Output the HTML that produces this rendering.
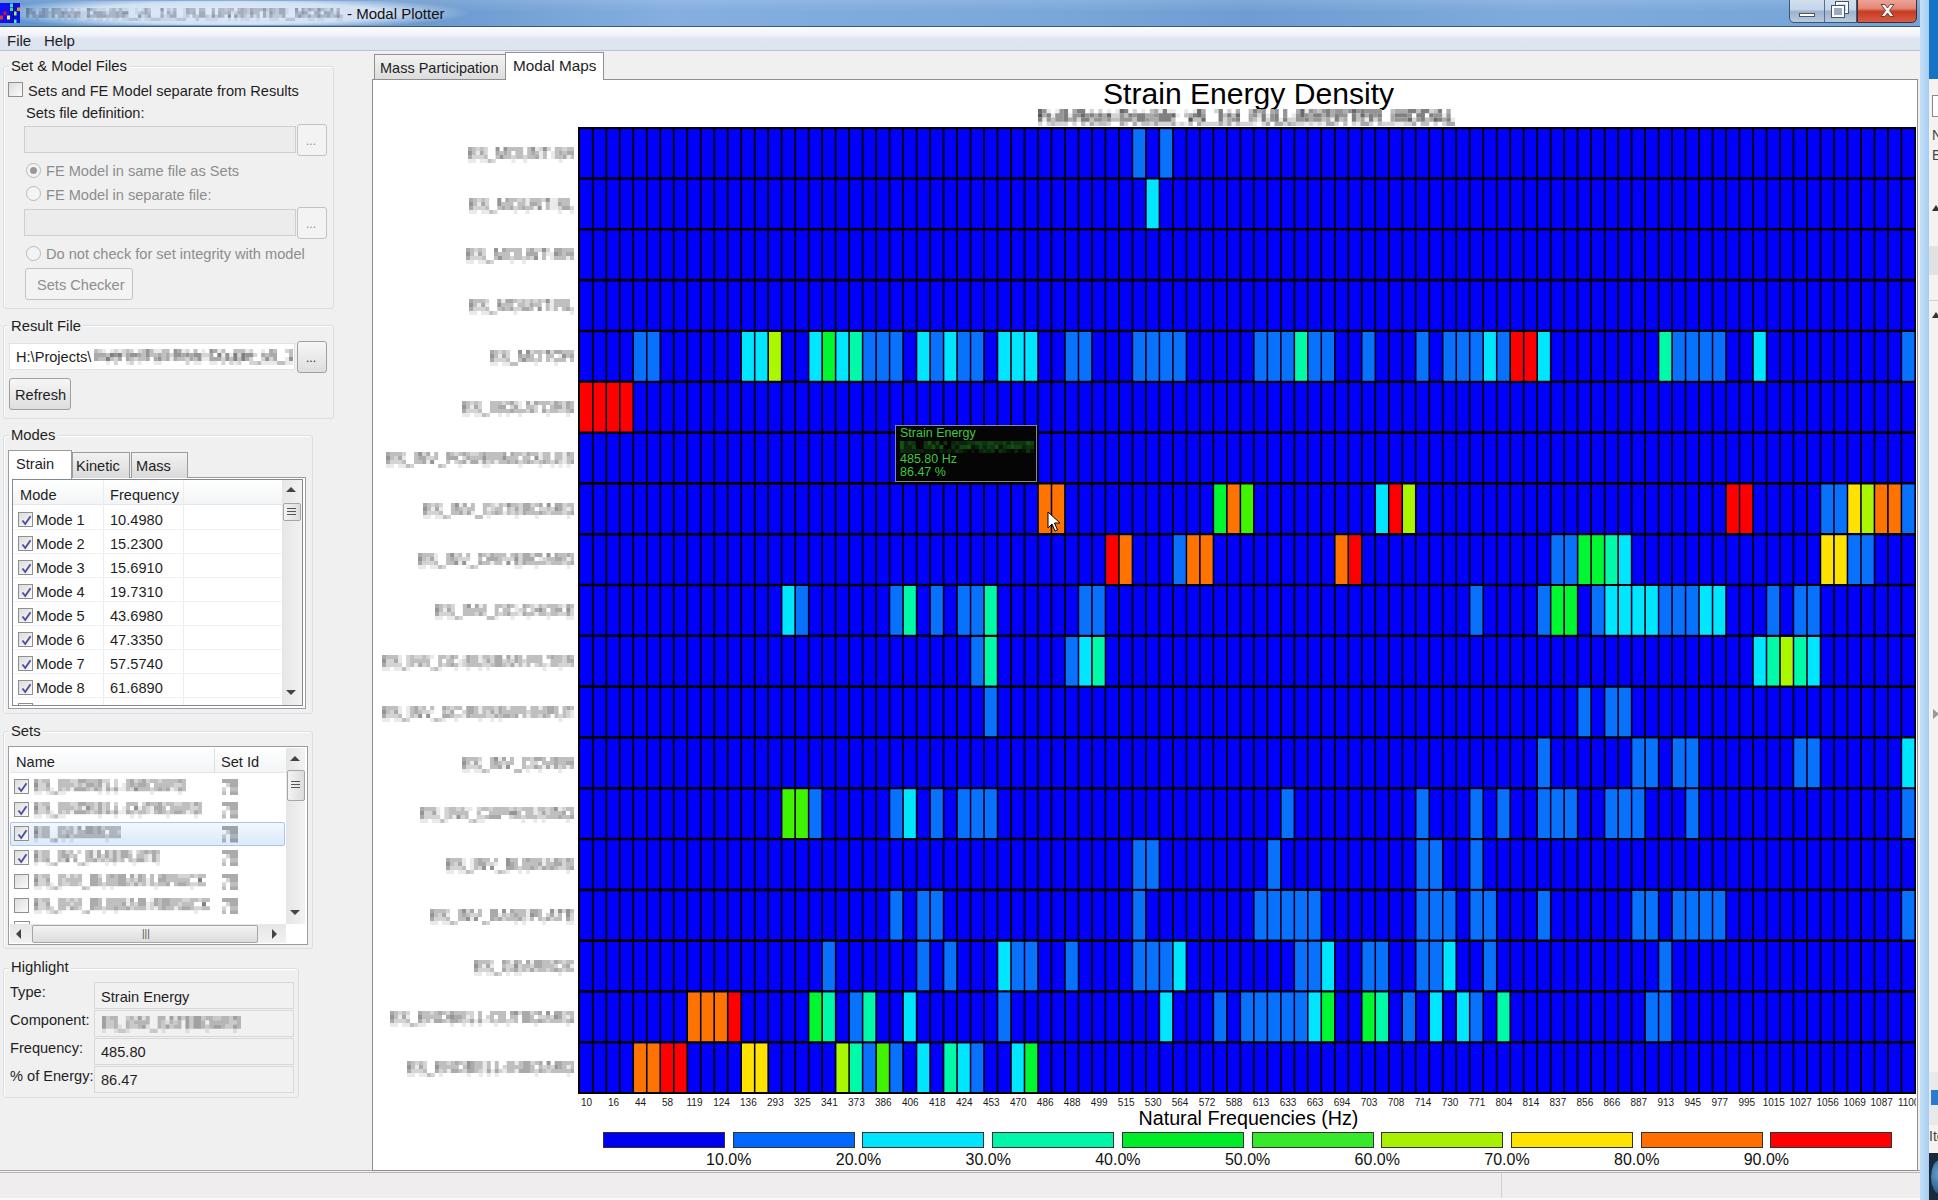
<!DOCTYPE html>
<html><head><meta charset="utf-8"><title>Modal Plotter</title><style>
*{margin:0;padding:0;box-sizing:border-box}
html,body{width:1938px;height:1200px;overflow:hidden;background:#f0f0f0;font-family:"Liberation Sans",sans-serif;color:#1e1e1e}
.a{position:absolute;white-space:nowrap}
.t15{font-size:14.6px;line-height:16px}
.gb{position:absolute;border:1px solid #d5dfe5;border-radius:3px;box-shadow:inset 1px 1px 0 #fff}
.gl{position:absolute;font-size:14.8px;line-height:16px;background:#f0f0f0;padding:0 2px}
.cb{width:15px;height:15px;border:1px solid #8f8f8f;background:linear-gradient(135deg,#dcdcdc,#fbfbfb)}
.ck::after{content:"";position:absolute;left:3px;top:1px;width:5px;height:9px;border:solid #4a4f9a;border-width:0 2px 2px 0;transform:rotate(40deg)}
.rb{width:15px;height:15px;border:1px solid #b9b9b9;border-radius:50%;background:#f4f4f4}
.tx{border:1px solid #cfcfcf;background:#ececec}
.btn{border:1px solid #a0a0a0;border-radius:3px;background:linear-gradient(#f6f6f6,#dedede);}
.btnd{border:1px solid #c2c2c2;border-radius:3px;background:#f3f3f3}
.gray{color:#8d8d8d}
.blur{font-size:13px;line-height:15px;color:#8a8a8a;filter:blur(1.2px)}
.xl{top:6.5px;width:60px;text-align:center;font-size:10px;line-height:12px;color:#1a1a1a}
.yl{height:16px;font-size:13px;line-height:16px;color:#999;text-align:right;filter:blur(1.3px)}
.lg{top:1132px;width:122px;height:16px;border:1px solid #333}
.lp{top:1150.5px;width:80px;text-align:center;font-size:16px;line-height:18px;color:#111}
.sel{width:275px;height:24px;border:1px solid #a9c6ea;border-radius:2px;background:linear-gradient(#f2f7fd,#dceafa)}
</style></head><body>
<!-- right strip: other window -->
<div class="a" style="left:1920px;top:0;width:9px;height:1200px;background:linear-gradient(to right,#c4e0f8,#a4ccf2)"></div>
<div class="a" style="left:1929px;top:0;width:9px;height:1200px;background:#f5f2f0"></div>
<div class="a" style="left:1929px;top:0;width:9px;height:79px;background:#1573c5"></div>
<div class="a" style="left:1932px;top:95px;width:7px;height:22px;border:1px solid #8a8a8a;border-right:0;background:#fff"></div>
<div class="a" style="left:1932px;top:125px;font-size:14px;line-height:20px;color:#444">N<br>E</div>
<div class="a" style="left:1932px;top:205px;width:0;height:0;border-left:4px solid transparent;border-right:4px solid transparent;border-bottom:6px solid #333"></div>
<div class="a" style="left:1929px;top:246px;width:9px;height:29px;background:#e2e2e2"></div>
<div class="a" style="left:1929px;top:300px;width:9px;height:1px;background:#d0d0d0"></div>
<div class="a" style="left:1932px;top:312px;width:0;height:0;border-left:4px solid transparent;border-right:4px solid transparent;border-bottom:6px solid #333"></div>
<div class="a" style="left:1933px;top:709px;width:0;height:0;border-top:5px solid transparent;border-bottom:5px solid transparent;border-left:6px solid #999"></div>
<div class="a" style="left:1929px;top:1072px;width:9px;height:53px;background:#e9e9e9"></div>
<div class="a" style="left:1931px;top:1090px;width:7px;height:15px;background:#2a7ad0"></div>
<div class="a" style="left:1929px;top:1128px;font-size:14px;line-height:16px;color:#444">Ite</div>
<div class="a" style="left:1929px;top:1153px;width:9px;height:47px;background:#1b2a3a"></div>
<div class="a" style="left:1931px;top:1160px;width:18px;height:34px;border-radius:50%;background:radial-gradient(circle at 60% 40%,#6fa8d8,#1d4f7c)"></div>

<!-- title bar -->
<div class="a" style="left:0;top:0;width:1920px;height:27px;background:linear-gradient(to right,#5f93cc 0%,#79a5d6 12%,#6c9acf 22%,#84afdf 35%,#7aa7d9 55%,#6f9dd2 65%,#7fabdc 80%,#74a3d7 100%);border-bottom:1px solid #3c5a80"></div>
<div class="a" style="left:0;top:0;width:1920px;height:12px;background:linear-gradient(rgba(255,255,255,.12),rgba(255,255,255,0))"></div>
<div class="a" style="left:-10px;top:1px;width:480px;height:24px;background:radial-gradient(ellipse 50% 70% at 50% 50%,rgba(232,240,250,.95) 0%,rgba(225,235,248,.85) 65%,rgba(220,232,246,0) 100%)"></div>
<svg class="a" style="left:0;top:3px" width="20" height="20" viewBox="0 0 20 20"><rect width="20" height="20" fill="#0a10d8"/><rect x="0" y="0" width="9" height="20" fill="#1010f0"/>
<rect x="10" y="0.5" width="3" height="3.5" fill="#40d8f8"/><rect x="10" y="4.5" width="3" height="3.5" fill="#40e070"/><rect x="17" y="4.5" width="3" height="3.5" fill="#e89030"/>
<rect x="3.5" y="8.5" width="3" height="3.5" fill="#d81818"/><rect x="14" y="8.5" width="2.5" height="4" fill="#a8f060"/><rect x="0" y="12.5" width="3" height="4" fill="#e03030"/>
<rect x="7" y="12.5" width="3" height="4" fill="#f0f070"/><rect x="14" y="16.5" width="2.5" height="3.5" fill="#40f0c8"/><rect x="13" y="0" width="1" height="20" fill="#000060" opacity=".6"/></svg>
<svg class="a" style="left:26.0px;top:8.0px" width="317.0" height="13.0" viewBox="0 0 317.00 13.00"><path fill="rgb(40,50,70)" fill-opacity="0.08" d="M6.4 0h3.2v3.25h-3.2zM12.81 0h3.2v3.25h-3.2zM35.22 0h3.2v3.25h-3.2zM51.23 0h3.2v3.25h-3.2zM70.44 0h3.2v3.25h-3.2zM73.65 0h3.2v3.25h-3.2zM76.85 0h3.2v3.25h-3.2zM89.66 0h3.2v3.25h-3.2zM96.06 0h3.2v3.25h-3.2zM99.26 0h3.2v3.25h-3.2zM108.87 0h3.2v3.25h-3.2zM115.27 0h3.2v3.25h-3.2zM144.09 0h3.2v3.25h-3.2zM156.9 0h3.2v3.25h-3.2zM259.36 0h3.2v3.25h-3.2zM300.99 0h3.2v3.25h-3.2zM54.43 3.25h3.2v3.25h-3.2zM57.64 3.25h3.2v3.25h-3.2zM80.05 3.25h3.2v3.25h-3.2zM108.87 3.25h3.2v3.25h-3.2zM156.9 3.25h3.2v3.25h-3.2zM204.93 3.25h3.2v3.25h-3.2zM240.15 3.25h3.2v3.25h-3.2zM259.36 3.25h3.2v3.25h-3.2zM281.78 3.25h3.2v3.25h-3.2zM307.39 3.25h3.2v3.25h-3.2zM22.41 6.5h3.2v3.25h-3.2zM54.43 6.5h3.2v3.25h-3.2zM57.64 6.5h3.2v3.25h-3.2zM115.27 6.5h3.2v3.25h-3.2zM137.69 6.5h3.2v3.25h-3.2zM156.9 6.5h3.2v3.25h-3.2zM182.52 6.5h3.2v3.25h-3.2zM220.94 6.5h3.2v3.25h-3.2zM227.34 6.5h3.2v3.25h-3.2zM240.15 6.5h3.2v3.25h-3.2zM9.61 9.75h3.2v3.25h-3.2zM32.02 9.75h3.2v3.25h-3.2zM38.42 9.75h3.2v3.25h-3.2zM44.83 9.75h3.2v3.25h-3.2zM48.03 9.75h3.2v3.25h-3.2zM60.84 9.75h3.2v3.25h-3.2zM64.04 9.75h3.2v3.25h-3.2zM70.44 9.75h3.2v3.25h-3.2zM73.65 9.75h3.2v3.25h-3.2zM80.05 9.75h3.2v3.25h-3.2zM86.45 9.75h3.2v3.25h-3.2zM89.66 9.75h3.2v3.25h-3.2zM96.06 9.75h3.2v3.25h-3.2zM99.26 9.75h3.2v3.25h-3.2zM112.07 9.75h3.2v3.25h-3.2zM118.47 9.75h3.2v3.25h-3.2zM121.68 9.75h3.2v3.25h-3.2zM134.48 9.75h3.2v3.25h-3.2zM137.69 9.75h3.2v3.25h-3.2zM140.89 9.75h3.2v3.25h-3.2zM144.09 9.75h3.2v3.25h-3.2zM147.29 9.75h3.2v3.25h-3.2zM179.31 9.75h3.2v3.25h-3.2zM182.52 9.75h3.2v3.25h-3.2zM185.72 9.75h3.2v3.25h-3.2zM188.92 9.75h3.2v3.25h-3.2zM201.73 9.75h3.2v3.25h-3.2zM208.13 9.75h3.2v3.25h-3.2zM214.54 9.75h3.2v3.25h-3.2zM217.74 9.75h3.2v3.25h-3.2zM220.94 9.75h3.2v3.25h-3.2zM230.55 9.75h3.2v3.25h-3.2zM243.35 9.75h3.2v3.25h-3.2zM246.56 9.75h3.2v3.25h-3.2zM249.76 9.75h3.2v3.25h-3.2zM281.78 9.75h3.2v3.25h-3.2zM284.98 9.75h3.2v3.25h-3.2zM291.38 9.75h3.2v3.25h-3.2zM294.59 9.75h3.2v3.25h-3.2zM310.6 9.75h3.2v3.25h-3.2zM313.8 9.75h3.2v3.25h-3.2z"/><path fill="rgb(40,50,70)" fill-opacity="0.17" d="M38.42 0h3.2v3.25h-3.2zM44.83 0h3.2v3.25h-3.2zM67.24 0h3.2v3.25h-3.2zM83.25 0h3.2v3.25h-3.2zM121.68 0h3.2v3.25h-3.2zM140.89 0h3.2v3.25h-3.2zM198.53 0h3.2v3.25h-3.2zM220.94 0h3.2v3.25h-3.2zM240.15 0h3.2v3.25h-3.2zM249.76 0h3.2v3.25h-3.2zM278.58 0h3.2v3.25h-3.2zM288.18 0h3.2v3.25h-3.2zM297.79 0h3.2v3.25h-3.2zM22.41 3.25h3.2v3.25h-3.2zM112.07 3.25h3.2v3.25h-3.2zM144.09 3.25h3.2v3.25h-3.2zM208.13 3.25h3.2v3.25h-3.2zM220.94 3.25h3.2v3.25h-3.2zM249.76 3.25h3.2v3.25h-3.2zM9.61 6.5h3.2v3.25h-3.2zM38.42 6.5h3.2v3.25h-3.2zM44.83 6.5h3.2v3.25h-3.2zM99.26 6.5h3.2v3.25h-3.2zM118.47 6.5h3.2v3.25h-3.2zM140.89 6.5h3.2v3.25h-3.2zM160.1 6.5h3.2v3.25h-3.2zM169.71 6.5h3.2v3.25h-3.2zM179.31 6.5h3.2v3.25h-3.2zM188.92 6.5h3.2v3.25h-3.2zM211.33 6.5h3.2v3.25h-3.2zM217.74 6.5h3.2v3.25h-3.2zM246.56 6.5h3.2v3.25h-3.2zM249.76 6.5h3.2v3.25h-3.2zM252.96 6.5h3.2v3.25h-3.2zM278.58 6.5h3.2v3.25h-3.2zM284.98 6.5h3.2v3.25h-3.2zM304.19 6.5h3.2v3.25h-3.2zM313.8 6.5h3.2v3.25h-3.2zM102.46 9.75h3.2v3.25h-3.2zM105.67 9.75h3.2v3.25h-3.2zM108.87 9.75h3.2v3.25h-3.2zM124.88 9.75h3.2v3.25h-3.2zM128.08 9.75h3.2v3.25h-3.2zM131.28 9.75h3.2v3.25h-3.2zM150.49 9.75h3.2v3.25h-3.2zM153.7 9.75h3.2v3.25h-3.2zM156.9 9.75h3.2v3.25h-3.2zM169.71 9.75h3.2v3.25h-3.2zM259.36 9.75h3.2v3.25h-3.2zM262.57 9.75h3.2v3.25h-3.2zM265.77 9.75h3.2v3.25h-3.2z"/><path fill="rgb(40,50,70)" fill-opacity="0.25" d="M3.2 0h3.2v3.25h-3.2zM19.21 0h3.2v3.25h-3.2zM28.82 0h3.2v3.25h-3.2zM32.02 0h3.2v3.25h-3.2zM64.04 0h3.2v3.25h-3.2zM86.45 0h3.2v3.25h-3.2zM92.86 0h3.2v3.25h-3.2zM147.29 0h3.2v3.25h-3.2zM163.3 0h3.2v3.25h-3.2zM166.51 0h3.2v3.25h-3.2zM172.91 0h3.2v3.25h-3.2zM176.11 0h3.2v3.25h-3.2zM185.72 0h3.2v3.25h-3.2zM192.12 0h3.2v3.25h-3.2zM195.32 0h3.2v3.25h-3.2zM201.73 0h3.2v3.25h-3.2zM204.93 0h3.2v3.25h-3.2zM211.33 0h3.2v3.25h-3.2zM217.74 0h3.2v3.25h-3.2zM227.34 0h3.2v3.25h-3.2zM230.55 0h3.2v3.25h-3.2zM233.75 0h3.2v3.25h-3.2zM246.56 0h3.2v3.25h-3.2zM284.98 0h3.2v3.25h-3.2zM294.59 0h3.2v3.25h-3.2zM310.6 0h3.2v3.25h-3.2zM3.2 3.25h3.2v3.25h-3.2zM12.81 3.25h3.2v3.25h-3.2zM19.21 3.25h3.2v3.25h-3.2zM28.82 3.25h3.2v3.25h-3.2zM32.02 3.25h3.2v3.25h-3.2zM41.63 3.25h3.2v3.25h-3.2zM44.83 3.25h3.2v3.25h-3.2zM76.85 3.25h3.2v3.25h-3.2zM83.25 3.25h3.2v3.25h-3.2zM86.45 3.25h3.2v3.25h-3.2zM92.86 3.25h3.2v3.25h-3.2zM115.27 3.25h3.2v3.25h-3.2zM121.68 3.25h3.2v3.25h-3.2zM134.48 3.25h3.2v3.25h-3.2zM163.3 3.25h3.2v3.25h-3.2zM195.32 3.25h3.2v3.25h-3.2zM198.53 3.25h3.2v3.25h-3.2zM217.74 3.25h3.2v3.25h-3.2zM227.34 3.25h3.2v3.25h-3.2zM230.55 3.25h3.2v3.25h-3.2zM246.56 3.25h3.2v3.25h-3.2zM272.17 3.25h3.2v3.25h-3.2zM304.19 3.25h3.2v3.25h-3.2zM6.4 6.5h3.2v3.25h-3.2zM19.21 6.5h3.2v3.25h-3.2zM32.02 6.5h3.2v3.25h-3.2zM51.23 6.5h3.2v3.25h-3.2zM64.04 6.5h3.2v3.25h-3.2zM67.24 6.5h3.2v3.25h-3.2zM80.05 6.5h3.2v3.25h-3.2zM83.25 6.5h3.2v3.25h-3.2zM86.45 6.5h3.2v3.25h-3.2zM92.86 6.5h3.2v3.25h-3.2zM166.51 6.5h3.2v3.25h-3.2zM195.32 6.5h3.2v3.25h-3.2zM230.55 6.5h3.2v3.25h-3.2zM268.97 6.5h3.2v3.25h-3.2zM275.37 6.5h3.2v3.25h-3.2zM288.18 6.5h3.2v3.25h-3.2zM294.59 6.5h3.2v3.25h-3.2zM297.79 6.5h3.2v3.25h-3.2zM307.39 6.5h3.2v3.25h-3.2z"/><path fill="rgb(40,50,70)" fill-opacity="0.33" d="M16.01 0h3.2v3.25h-3.2zM25.62 0h3.2v3.25h-3.2zM118.47 0h3.2v3.25h-3.2zM160.1 0h3.2v3.25h-3.2zM214.54 0h3.2v3.25h-3.2zM224.14 0h3.2v3.25h-3.2zM243.35 0h3.2v3.25h-3.2zM252.96 0h3.2v3.25h-3.2zM256.16 0h3.2v3.25h-3.2zM275.37 0h3.2v3.25h-3.2zM281.78 0h3.2v3.25h-3.2zM304.19 0h3.2v3.25h-3.2zM6.4 3.25h3.2v3.25h-3.2zM16.01 3.25h3.2v3.25h-3.2zM25.62 3.25h3.2v3.25h-3.2zM38.42 3.25h3.2v3.25h-3.2zM48.03 3.25h3.2v3.25h-3.2zM51.23 3.25h3.2v3.25h-3.2zM60.84 3.25h3.2v3.25h-3.2zM67.24 3.25h3.2v3.25h-3.2zM70.44 3.25h3.2v3.25h-3.2zM73.65 3.25h3.2v3.25h-3.2zM89.66 3.25h3.2v3.25h-3.2zM118.47 3.25h3.2v3.25h-3.2zM140.89 3.25h3.2v3.25h-3.2zM147.29 3.25h3.2v3.25h-3.2zM160.1 3.25h3.2v3.25h-3.2zM166.51 3.25h3.2v3.25h-3.2zM172.91 3.25h3.2v3.25h-3.2zM176.11 3.25h3.2v3.25h-3.2zM185.72 3.25h3.2v3.25h-3.2zM192.12 3.25h3.2v3.25h-3.2zM201.73 3.25h3.2v3.25h-3.2zM211.33 3.25h3.2v3.25h-3.2zM214.54 3.25h3.2v3.25h-3.2zM236.95 3.25h3.2v3.25h-3.2zM252.96 3.25h3.2v3.25h-3.2zM256.16 3.25h3.2v3.25h-3.2zM268.97 3.25h3.2v3.25h-3.2zM278.58 3.25h3.2v3.25h-3.2zM288.18 3.25h3.2v3.25h-3.2zM291.38 3.25h3.2v3.25h-3.2zM297.79 3.25h3.2v3.25h-3.2zM300.99 3.25h3.2v3.25h-3.2zM310.6 3.25h3.2v3.25h-3.2zM0 6.5h3.2v3.25h-3.2zM12.81 6.5h3.2v3.25h-3.2zM16.01 6.5h3.2v3.25h-3.2zM25.62 6.5h3.2v3.25h-3.2zM35.22 6.5h3.2v3.25h-3.2zM41.63 6.5h3.2v3.25h-3.2zM48.03 6.5h3.2v3.25h-3.2zM70.44 6.5h3.2v3.25h-3.2zM73.65 6.5h3.2v3.25h-3.2zM76.85 6.5h3.2v3.25h-3.2zM89.66 6.5h3.2v3.25h-3.2zM96.06 6.5h3.2v3.25h-3.2zM121.68 6.5h3.2v3.25h-3.2zM134.48 6.5h3.2v3.25h-3.2zM144.09 6.5h3.2v3.25h-3.2zM147.29 6.5h3.2v3.25h-3.2zM172.91 6.5h3.2v3.25h-3.2zM176.11 6.5h3.2v3.25h-3.2zM192.12 6.5h3.2v3.25h-3.2zM214.54 6.5h3.2v3.25h-3.2zM224.14 6.5h3.2v3.25h-3.2zM236.95 6.5h3.2v3.25h-3.2zM243.35 6.5h3.2v3.25h-3.2zM256.16 6.5h3.2v3.25h-3.2zM281.78 6.5h3.2v3.25h-3.2zM300.99 6.5h3.2v3.25h-3.2z"/><path fill="rgb(40,50,70)" fill-opacity="0.42" d="M0 0h3.2v3.25h-3.2zM60.84 0h3.2v3.25h-3.2zM134.48 0h3.2v3.25h-3.2zM236.95 0h3.2v3.25h-3.2zM268.97 0h3.2v3.25h-3.2zM291.38 0h3.2v3.25h-3.2zM0 3.25h3.2v3.25h-3.2zM35.22 3.25h3.2v3.25h-3.2zM96.06 3.25h3.2v3.25h-3.2zM99.26 3.25h3.2v3.25h-3.2zM224.14 3.25h3.2v3.25h-3.2zM243.35 3.25h3.2v3.25h-3.2zM275.37 3.25h3.2v3.25h-3.2zM60.84 6.5h3.2v3.25h-3.2zM112.07 6.5h3.2v3.25h-3.2zM185.72 6.5h3.2v3.25h-3.2zM208.13 6.5h3.2v3.25h-3.2zM272.17 6.5h3.2v3.25h-3.2zM291.38 6.5h3.2v3.25h-3.2zM310.6 6.5h3.2v3.25h-3.2z"/><path fill="rgb(40,50,70)" fill-opacity="0.50" d="M201.73 6.5h3.2v3.25h-3.2z"/></svg>
<div class="a" style="left:347px;top:5px;font-size:15px;line-height:17px;color:#111">- Modal Plotter</div>
<!-- caption buttons -->
<div class="a" style="left:1789px;top:-2px;width:68px;height:24.5px;border:1px solid #3d5576;border-radius:0 0 0 5px;background:linear-gradient(#d2dfee 0%,#c6d6e9 45%,#9fb2cb 55%,#b7c9de 100%)"></div>
<div class="a" style="left:1824px;top:0;width:1px;height:22px;background:#56708f"></div>
<div class="a" style="left:1799px;top:13px;width:16px;height:4px;background:#fff;border:1px solid #44546a"></div>
<div class="a" style="left:1836px;top:2px;width:12px;height:11px;border:2px solid #fff;outline:1px solid #44546a"></div>
<div class="a" style="left:1832px;top:6px;width:12px;height:11px;border:2px solid #fff;background:#9aaabf;outline:1px solid #44546a"></div>
<div class="a" style="left:1857px;top:-2px;width:59.5px;height:24.5px;border:1px solid #4a2a26;border-radius:0 0 5px 0;background:linear-gradient(#eea59a 0%,#e38a78 40%,#c73c22 55%,#d65d45 100%)"></div>
<svg class="a" style="left:1879px;top:3px" width="17" height="15" viewBox="0 0 17 15"><path d="M2 1.5h4l2.5 3.5 2.5-3.5h4l-4.5 6 4.5 6h-4l-2.5-3.5-2.5 3.5h-4l4.5-6z" fill="#f4f4f4" stroke="#5a3a36" stroke-width=".9"/></svg>

<!-- menu bar -->
<div class="a" style="left:0;top:27px;width:1920px;height:24px;background:linear-gradient(#fbfcfe 0%,#f1f3fa 35%,#dfe5f1 50%,#dde3ef 100%);border-bottom:1px solid #b9c3d3"></div>
<div class="a t15" style="left:7px;top:32.5px;font-size:15px">File</div>
<div class="a t15" style="left:44px;top:32.5px;font-size:15px">Help</div>

<!-- status bar -->
<div class="a" style="left:0;top:1170px;width:1920px;height:1px;background:#a5a5a5"></div>
<div class="a" style="left:0;top:1172px;width:1920px;height:28px;background:#efeded;border-top:1px solid #b5b5b5"></div>
<div class="a" style="left:1501px;top:1173px;width:1px;height:27px;background:#d0d0d0"></div>
<div class="a" style="left:0;top:1198px;width:1920px;height:2px;background:#fafafa"></div>

<!-- LEFT PANEL -->
<div class="gb" style="left:3px;top:66px;width:331px;height:243px"></div>
<div class="gl" style="left:9px;top:57.5px">Set &amp; Model Files</div>
<div class="a cb" style="left:8px;top:82px"></div>
<div class="a t15" style="left:28px;top:83px">Sets and FE Model separate from Results</div>
<div class="a t15" style="left:26px;top:105px">Sets file definition:</div>
<div class="a tx" style="left:24px;top:126px;width:272px;height:27px"></div>
<div class="a btnd" style="left:297px;top:124px;width:30px;height:32px"></div>
<div class="a gray" style="left:306px;top:134px;font-size:12px">...</div>
<div class="a rb" style="left:26px;top:163px"><div class="a" style="left:3px;top:3px;width:7px;height:7px;border-radius:50%;background:#9a9a9a"></div></div>
<div class="a t15 gray" style="left:46px;top:163px">FE Model in same file as Sets</div>
<div class="a rb" style="left:26px;top:186px"></div>
<div class="a t15 gray" style="left:46px;top:187px">FE Model in separate file:</div>
<div class="a tx" style="left:24px;top:209px;width:272px;height:27px"></div>
<div class="a btnd" style="left:297px;top:207px;width:30px;height:32px"></div>
<div class="a gray" style="left:306px;top:217px;font-size:12px">...</div>
<div class="a rb" style="left:26px;top:246px"></div>
<div class="a t15 gray" style="left:46px;top:246px">Do not check for set integrity with model</div>
<div class="a btnd" style="left:25px;top:268px;width:108px;height:32px"></div>
<div class="a t15 gray" style="left:37px;top:277px">Sets Checker</div>

<div class="gb" style="left:3px;top:325px;width:331px;height:94px"></div>
<div class="gl" style="left:9px;top:318px">Result File</div>
<div class="a" style="left:9px;top:343px;width:286px;height:27px;background:#fff;border:1px solid #e2e2e2"></div>
<div class="a t15" style="left:16px;top:349px">H:\Projects\</div>
<svg class="a" style="left:94.0px;top:349.0px" width="199.0" height="16.0" viewBox="0 0 199.00 16.00"><path fill="#eaeaea" d="M7.96 0h3.98v4h-3.98zM15.92 0h3.98v4h-3.98zM23.88 0h3.98v4h-3.98zM59.7 0h3.98v4h-3.98zM63.68 0h3.98v4h-3.98zM87.56 0h3.98v4h-3.98zM107.46 0h3.98v4h-3.98zM123.38 0h3.98v4h-3.98zM151.24 0h3.98v4h-3.98zM167.16 0h3.98v4h-3.98zM127.36 4h3.98v4h-3.98zM135.32 4h3.98v4h-3.98zM75.62 8h3.98v4h-3.98zM107.46 8h3.98v4h-3.98zM111.44 8h3.98v4h-3.98zM191.04 8h3.98v4h-3.98zM11.94 12h3.98v4h-3.98zM31.84 12h3.98v4h-3.98zM43.78 12h3.98v4h-3.98zM59.7 12h3.98v4h-3.98zM63.68 12h3.98v4h-3.98zM99.5 12h3.98v4h-3.98zM103.48 12h3.98v4h-3.98zM115.42 12h3.98v4h-3.98zM119.4 12h3.98v4h-3.98zM139.3 12h3.98v4h-3.98zM167.16 12h3.98v4h-3.98zM171.14 12h3.98v4h-3.98zM175.12 12h3.98v4h-3.98zM179.1 12h3.98v4h-3.98zM191.04 12h3.98v4h-3.98zM195.02 12h3.98v4h-3.98z"/><path fill="#d4d4d4" d="M3.98 0h3.98v4h-3.98zM19.9 0h3.98v4h-3.98zM27.86 0h3.98v4h-3.98zM35.82 0h3.98v4h-3.98zM43.78 0h3.98v4h-3.98zM91.54 0h3.98v4h-3.98zM155.22 0h3.98v4h-3.98zM191.04 0h3.98v4h-3.98zM27.86 4h3.98v4h-3.98zM75.62 4h3.98v4h-3.98zM107.46 4h3.98v4h-3.98zM111.44 4h3.98v4h-3.98zM143.28 4h3.98v4h-3.98zM159.2 4h3.98v4h-3.98zM19.9 8h3.98v4h-3.98zM39.8 8h3.98v4h-3.98zM91.54 8h3.98v4h-3.98zM127.36 8h3.98v4h-3.98zM155.22 8h3.98v4h-3.98zM167.16 8h3.98v4h-3.98zM175.12 8h3.98v4h-3.98zM19.9 12h3.98v4h-3.98zM35.82 12h3.98v4h-3.98zM91.54 12h3.98v4h-3.98zM127.36 12h3.98v4h-3.98zM135.32 12h3.98v4h-3.98zM143.28 12h3.98v4h-3.98zM155.22 12h3.98v4h-3.98zM159.2 12h3.98v4h-3.98z"/><path fill="#bfbfbf" d="M0 0h3.98v4h-3.98zM31.84 0h3.98v4h-3.98zM47.76 0h3.98v4h-3.98zM55.72 0h3.98v4h-3.98zM67.66 0h3.98v4h-3.98zM71.64 0h3.98v4h-3.98zM99.5 0h3.98v4h-3.98zM127.36 0h3.98v4h-3.98zM139.3 0h3.98v4h-3.98zM143.28 0h3.98v4h-3.98zM147.26 0h3.98v4h-3.98zM179.1 0h3.98v4h-3.98zM195.02 0h3.98v4h-3.98zM11.94 4h3.98v4h-3.98zM47.76 4h3.98v4h-3.98zM55.72 4h3.98v4h-3.98zM59.7 4h3.98v4h-3.98zM67.66 4h3.98v4h-3.98zM171.14 4h3.98v4h-3.98zM195.02 4h3.98v4h-3.98zM3.98 8h3.98v4h-3.98zM7.96 8h3.98v4h-3.98zM15.92 8h3.98v4h-3.98zM35.82 8h3.98v4h-3.98zM43.78 8h3.98v4h-3.98zM47.76 8h3.98v4h-3.98zM67.66 8h3.98v4h-3.98zM83.58 8h3.98v4h-3.98zM87.56 8h3.98v4h-3.98zM99.5 8h3.98v4h-3.98zM135.32 8h3.98v4h-3.98zM143.28 8h3.98v4h-3.98zM163.18 12h3.98v4h-3.98zM183.08 12h3.98v4h-3.98zM187.06 12h3.98v4h-3.98z"/><path fill="#aaaaaa" d="M83.58 0h3.98v4h-3.98zM119.4 0h3.98v4h-3.98zM175.12 0h3.98v4h-3.98zM0 4h3.98v4h-3.98zM3.98 4h3.98v4h-3.98zM7.96 4h3.98v4h-3.98zM31.84 4h3.98v4h-3.98zM43.78 4h3.98v4h-3.98zM63.68 4h3.98v4h-3.98zM71.64 4h3.98v4h-3.98zM87.56 4h3.98v4h-3.98zM95.52 4h3.98v4h-3.98zM115.42 4h3.98v4h-3.98zM167.16 4h3.98v4h-3.98zM175.12 4h3.98v4h-3.98zM179.1 4h3.98v4h-3.98zM0 8h3.98v4h-3.98zM23.88 8h3.98v4h-3.98zM31.84 8h3.98v4h-3.98zM51.74 8h3.98v4h-3.98zM59.7 8h3.98v4h-3.98zM71.64 8h3.98v4h-3.98zM79.6 8h3.98v4h-3.98zM95.52 8h3.98v4h-3.98zM115.42 8h3.98v4h-3.98zM119.4 8h3.98v4h-3.98zM123.38 8h3.98v4h-3.98zM151.24 8h3.98v4h-3.98zM179.1 8h3.98v4h-3.98z"/><path fill="#959595" d="M51.74 0h3.98v4h-3.98zM79.6 0h3.98v4h-3.98zM115.42 0h3.98v4h-3.98zM19.9 4h3.98v4h-3.98zM35.82 4h3.98v4h-3.98zM39.8 4h3.98v4h-3.98zM51.74 4h3.98v4h-3.98zM79.6 4h3.98v4h-3.98zM83.58 4h3.98v4h-3.98zM91.54 4h3.98v4h-3.98zM99.5 4h3.98v4h-3.98zM103.48 4h3.98v4h-3.98zM131.34 4h3.98v4h-3.98zM151.24 4h3.98v4h-3.98zM155.22 4h3.98v4h-3.98zM63.68 8h3.98v4h-3.98zM103.48 8h3.98v4h-3.98zM131.34 8h3.98v4h-3.98zM171.14 8h3.98v4h-3.98zM195.02 8h3.98v4h-3.98z"/><path fill="#808080" d="M15.92 4h3.98v4h-3.98zM23.88 4h3.98v4h-3.98zM123.38 4h3.98v4h-3.98zM139.3 4h3.98v4h-3.98zM147.26 4h3.98v4h-3.98zM11.94 8h3.98v4h-3.98zM139.3 8h3.98v4h-3.98zM147.26 8h3.98v4h-3.98z"/></svg>
<div class="a btn" style="left:297px;top:341px;width:30px;height:32px"></div>
<div class="a" style="left:306px;top:351px;font-size:12px">...</div>
<div class="a btn" style="left:9px;top:378px;width:62px;height:32px"></div>
<div class="a t15" style="left:15px;top:387px">Refresh</div>

<div class="gb" style="left:3px;top:435px;width:310px;height:279px"></div>
<div class="gl" style="left:9px;top:427px">Modes</div>
<div class="a" style="left:8px;top:477px;width:298px;height:232px;border:1px solid #9c9c9c;background:#fff"></div>
<div class="a" style="left:71.5px;top:452px;width:58px;height:26px;border:1px solid #9c9c9c;border-bottom:0;background:linear-gradient(#f2f2f2,#dadada)"></div>
<div class="a" style="left:130.5px;top:452px;width:57px;height:26px;border:1px solid #9c9c9c;border-bottom:0;background:linear-gradient(#f2f2f2,#dadada)"></div>
<div class="a" style="left:8px;top:450px;width:64px;height:29px;border:1px solid #9c9c9c;border-bottom:0;background:#fff"></div>
<div class="a t15" style="left:16px;top:456px">Strain</div>
<div class="a t15" style="left:76px;top:458px">Kinetic</div>
<div class="a t15" style="left:136px;top:458px">Mass</div>
<div class="a" style="left:12px;top:479px;width:291px;height:227px;border:1px solid #828790;background:#fff"></div>
<div class="a" style="left:13px;top:480px;width:269px;height:25px;background:linear-gradient(#fff,#f3f4f6);border-bottom:1px solid #e4e6ea"></div>
<div class="a" style="left:103px;top:480px;width:1px;height:225px;background:#ececec"></div>
<div class="a" style="left:183px;top:480px;width:1px;height:225px;background:#ececec"></div>
<div class="a t15" style="left:20px;top:487px">Mode</div>
<div class="a t15" style="left:110px;top:487px">Frequency</div>
<div class="a cb" style="left:18px;top:511.7px"><svg class="a" style="left:1px;top:1px" width="13" height="13" viewBox="0 0 13 13"><path d="M2.5 6.5 L5.2 10 L10.5 2.2" fill="none" stroke="#4b4f9e" stroke-width="1.9"/></svg></div><div class="a t15" style="left:36px;top:512.4px">Mode 1</div><div class="a t15" style="left:110px;top:512.4px">10.4980</div><div class="a" style="left:13px;top:528.9px;width:269px;height:1px;background:#f0f0f0"></div><div class="a cb" style="left:18px;top:535.7px"><svg class="a" style="left:1px;top:1px" width="13" height="13" viewBox="0 0 13 13"><path d="M2.5 6.5 L5.2 10 L10.5 2.2" fill="none" stroke="#4b4f9e" stroke-width="1.9"/></svg></div><div class="a t15" style="left:36px;top:536.4px">Mode 2</div><div class="a t15" style="left:110px;top:536.4px">15.2300</div><div class="a" style="left:13px;top:552.9px;width:269px;height:1px;background:#f0f0f0"></div><div class="a cb" style="left:18px;top:559.7px"><svg class="a" style="left:1px;top:1px" width="13" height="13" viewBox="0 0 13 13"><path d="M2.5 6.5 L5.2 10 L10.5 2.2" fill="none" stroke="#4b4f9e" stroke-width="1.9"/></svg></div><div class="a t15" style="left:36px;top:560.4px">Mode 3</div><div class="a t15" style="left:110px;top:560.4px">15.6910</div><div class="a" style="left:13px;top:576.9px;width:269px;height:1px;background:#f0f0f0"></div><div class="a cb" style="left:18px;top:583.7px"><svg class="a" style="left:1px;top:1px" width="13" height="13" viewBox="0 0 13 13"><path d="M2.5 6.5 L5.2 10 L10.5 2.2" fill="none" stroke="#4b4f9e" stroke-width="1.9"/></svg></div><div class="a t15" style="left:36px;top:584.4px">Mode 4</div><div class="a t15" style="left:110px;top:584.4px">19.7310</div><div class="a" style="left:13px;top:600.9px;width:269px;height:1px;background:#f0f0f0"></div><div class="a cb" style="left:18px;top:607.7px"><svg class="a" style="left:1px;top:1px" width="13" height="13" viewBox="0 0 13 13"><path d="M2.5 6.5 L5.2 10 L10.5 2.2" fill="none" stroke="#4b4f9e" stroke-width="1.9"/></svg></div><div class="a t15" style="left:36px;top:608.4px">Mode 5</div><div class="a t15" style="left:110px;top:608.4px">43.6980</div><div class="a" style="left:13px;top:624.9px;width:269px;height:1px;background:#f0f0f0"></div><div class="a cb" style="left:18px;top:631.7px"><svg class="a" style="left:1px;top:1px" width="13" height="13" viewBox="0 0 13 13"><path d="M2.5 6.5 L5.2 10 L10.5 2.2" fill="none" stroke="#4b4f9e" stroke-width="1.9"/></svg></div><div class="a t15" style="left:36px;top:632.4px">Mode 6</div><div class="a t15" style="left:110px;top:632.4px">47.3350</div><div class="a" style="left:13px;top:648.9px;width:269px;height:1px;background:#f0f0f0"></div><div class="a cb" style="left:18px;top:655.7px"><svg class="a" style="left:1px;top:1px" width="13" height="13" viewBox="0 0 13 13"><path d="M2.5 6.5 L5.2 10 L10.5 2.2" fill="none" stroke="#4b4f9e" stroke-width="1.9"/></svg></div><div class="a t15" style="left:36px;top:656.4px">Mode 7</div><div class="a t15" style="left:110px;top:656.4px">57.5740</div><div class="a" style="left:13px;top:672.9px;width:269px;height:1px;background:#f0f0f0"></div><div class="a cb" style="left:18px;top:679.7px"><svg class="a" style="left:1px;top:1px" width="13" height="13" viewBox="0 0 13 13"><path d="M2.5 6.5 L5.2 10 L10.5 2.2" fill="none" stroke="#4b4f9e" stroke-width="1.9"/></svg></div><div class="a t15" style="left:36px;top:680.4px">Mode 8</div><div class="a t15" style="left:110px;top:680.4px">61.6890</div><div class="a" style="left:13px;top:696.9px;width:269px;height:1px;background:#f0f0f0"></div>
<div class="a" style="left:18px;top:702.5px;width:15px;height:2.5px;border:1px solid #8f8f8f;border-bottom:0"></div>
<div class="a" style="left:282px;top:480px;width:20px;height:225px;background:linear-gradient(90deg,#e6e6e6,#f2f2f2)"></div>
<div class="a" style="left:286px;top:487px;width:0;height:0;border-left:5px solid transparent;border-right:5px solid transparent;border-bottom:5px solid #444"></div>
<div class="a" style="left:283px;top:503px;width:18px;height:18px;border:1px solid #a6a6a6;border-radius:2px;background:linear-gradient(90deg,#f3f3f3,#dcdcdc)"></div><div class="a" style="left:287px;top:508px;width:9px;height:7px;border-top:1px solid #555;border-bottom:1px solid #555"></div><div class="a" style="left:287px;top:511px;width:9px;height:1px;background:#555"></div>
<div class="a" style="left:286px;top:690px;width:0;height:0;border-left:5px solid transparent;border-right:5px solid transparent;border-top:5px solid #444"></div>

<div class="gb" style="left:3px;top:731px;width:310px;height:218px"></div>
<div class="gl" style="left:9px;top:723px">Sets</div>
<div class="a" style="left:8px;top:746px;width:300px;height:199px;border:1px solid #9c9c9c;background:#fff"></div>
<div class="a" style="left:10px;top:748px;width:276px;height:25px;background:linear-gradient(#fff,#f3f4f6);border-bottom:1px solid #e4e6ea"></div>
<div class="a" style="left:214px;top:748px;width:1px;height:25px;background:#e0e0e0"></div>
<div class="a t15" style="left:16px;top:754px">Name</div>
<div class="a t15" style="left:221px;top:754px">Set Id</div>
<div class="a sel" style="left:10px;top:822px"></div>
<div class="a cb" style="left:14px;top:778.6px"><svg class="a" style="left:1px;top:1px" width="13" height="13" viewBox="0 0 13 13"><path d="M2.5 6.5 L5.2 10 L10.5 2.2" fill="none" stroke="#4b4f9e" stroke-width="1.9"/></svg></div><svg class="a" style="left:34.0px;top:778.6px" width="152.0" height="16.4" viewBox="0 0 152.00 16.40"><path fill="rgb(0,0,0)" fill-opacity="0.08" d="M68 4.1h4v4.1h-4zM88 4.1h4v4.1h-4zM16 8.2h4v4.1h-4zM36 8.2h4v4.1h-4zM68 8.2h4v4.1h-4zM84 8.2h4v4.1h-4zM88 8.2h4v4.1h-4zM136 8.2h4v4.1h-4zM0 12.3h4v4.1h-4zM4 12.3h4v4.1h-4zM12 12.3h4v4.1h-4zM24 12.3h4v4.1h-4zM28 12.3h4v4.1h-4zM64 12.3h4v4.1h-4zM72 12.3h4v4.1h-4zM80 12.3h4v4.1h-4zM116 12.3h4v4.1h-4zM144 12.3h4v4.1h-4z"/><path fill="rgb(0,0,0)" fill-opacity="0.17" d="M4 0h4v4.1h-4zM36 0h4v4.1h-4zM40 0h4v4.1h-4zM68 0h4v4.1h-4zM72 0h4v4.1h-4zM80 0h4v4.1h-4zM100 0h4v4.1h-4zM112 0h4v4.1h-4zM124 0h4v4.1h-4zM4 4.1h4v4.1h-4zM8 4.1h4v4.1h-4zM40 4.1h4v4.1h-4zM48 4.1h4v4.1h-4zM80 4.1h4v4.1h-4zM140 4.1h4v4.1h-4zM144 4.1h4v4.1h-4zM4 8.2h4v4.1h-4zM8 8.2h4v4.1h-4zM28 8.2h4v4.1h-4zM56 8.2h4v4.1h-4zM76 8.2h4v4.1h-4zM96 8.2h4v4.1h-4zM116 8.2h4v4.1h-4zM140 8.2h4v4.1h-4zM16 12.3h4v4.1h-4z"/><path fill="rgb(0,0,0)" fill-opacity="0.25" d="M8 0h4v4.1h-4zM12 0h4v4.1h-4zM24 0h4v4.1h-4zM28 0h4v4.1h-4zM32 0h4v4.1h-4zM52 0h4v4.1h-4zM56 0h4v4.1h-4zM60 0h4v4.1h-4zM92 0h4v4.1h-4zM104 0h4v4.1h-4zM116 0h4v4.1h-4zM120 0h4v4.1h-4zM128 0h4v4.1h-4zM132 0h4v4.1h-4zM136 0h4v4.1h-4zM140 0h4v4.1h-4zM148 0h4v4.1h-4zM24 4.1h4v4.1h-4zM28 4.1h4v4.1h-4zM32 4.1h4v4.1h-4zM36 4.1h4v4.1h-4zM44 4.1h4v4.1h-4zM60 4.1h4v4.1h-4zM72 4.1h4v4.1h-4zM92 4.1h4v4.1h-4zM100 4.1h4v4.1h-4zM112 4.1h4v4.1h-4zM120 4.1h4v4.1h-4zM124 4.1h4v4.1h-4zM128 4.1h4v4.1h-4zM132 4.1h4v4.1h-4zM136 4.1h4v4.1h-4zM148 4.1h4v4.1h-4zM12 8.2h4v4.1h-4zM24 8.2h4v4.1h-4zM32 8.2h4v4.1h-4zM52 8.2h4v4.1h-4zM64 8.2h4v4.1h-4zM92 8.2h4v4.1h-4zM104 8.2h4v4.1h-4zM108 8.2h4v4.1h-4zM112 8.2h4v4.1h-4zM120 8.2h4v4.1h-4zM128 8.2h4v4.1h-4zM148 8.2h4v4.1h-4zM20 12.3h4v4.1h-4z"/><path fill="rgb(0,0,0)" fill-opacity="0.33" d="M0 0h4v4.1h-4zM44 0h4v4.1h-4zM48 0h4v4.1h-4zM64 0h4v4.1h-4zM96 0h4v4.1h-4zM108 0h4v4.1h-4zM144 0h4v4.1h-4zM12 4.1h4v4.1h-4zM52 4.1h4v4.1h-4zM56 4.1h4v4.1h-4zM64 4.1h4v4.1h-4zM96 4.1h4v4.1h-4zM104 4.1h4v4.1h-4zM108 4.1h4v4.1h-4zM0 8.2h4v4.1h-4zM40 8.2h4v4.1h-4zM44 8.2h4v4.1h-4zM48 8.2h4v4.1h-4zM60 8.2h4v4.1h-4zM72 8.2h4v4.1h-4zM80 8.2h4v4.1h-4zM124 8.2h4v4.1h-4zM132 8.2h4v4.1h-4zM144 8.2h4v4.1h-4z"/><path fill="rgb(0,0,0)" fill-opacity="0.42" d="M0 4.1h4v4.1h-4zM100 8.2h4v4.1h-4z"/></svg><svg class="a" style="left:222.0px;top:778.6px" width="16.0" height="16.4" viewBox="0 0 16.00 16.40"><path fill="rgb(0,0,0)" fill-opacity="0.17" d="M4 4.1h4v4.1h-4zM0 8.2h4v4.1h-4z"/><path fill="rgb(0,0,0)" fill-opacity="0.25" d="M8 8.2h4v4.1h-4zM12 8.2h4v4.1h-4zM0 12.3h4v4.1h-4z"/><path fill="rgb(0,0,0)" fill-opacity="0.33" d="M0 0h4v4.1h-4zM4 0h4v4.1h-4zM8 0h4v4.1h-4zM12 0h4v4.1h-4zM8 4.1h4v4.1h-4zM12 4.1h4v4.1h-4zM8 12.3h4v4.1h-4zM12 12.3h4v4.1h-4z"/></svg><div class="a cb" style="left:14px;top:802.4px"><svg class="a" style="left:1px;top:1px" width="13" height="13" viewBox="0 0 13 13"><path d="M2.5 6.5 L5.2 10 L10.5 2.2" fill="none" stroke="#4b4f9e" stroke-width="1.9"/></svg></div><svg class="a" style="left:34.0px;top:802.4px" width="168.0" height="16.4" viewBox="0 0 168.00 16.40"><path fill="rgb(0,0,0)" fill-opacity="0.08" d="M48 4.1h4v4.1h-4zM88 4.1h4v4.1h-4zM104 4.1h4v4.1h-4zM116 4.1h4v4.1h-4zM16 8.2h4v4.1h-4zM36 8.2h4v4.1h-4zM84 8.2h4v4.1h-4zM88 8.2h4v4.1h-4zM116 8.2h4v4.1h-4zM152 8.2h4v4.1h-4zM0 12.3h4v4.1h-4zM4 12.3h4v4.1h-4zM12 12.3h4v4.1h-4zM24 12.3h4v4.1h-4zM28 12.3h4v4.1h-4zM64 12.3h4v4.1h-4zM80 12.3h4v4.1h-4zM96 12.3h4v4.1h-4zM104 12.3h4v4.1h-4zM132 12.3h4v4.1h-4zM160 12.3h4v4.1h-4z"/><path fill="rgb(0,0,0)" fill-opacity="0.17" d="M4 0h4v4.1h-4zM36 0h4v4.1h-4zM40 0h4v4.1h-4zM60 0h4v4.1h-4zM68 0h4v4.1h-4zM80 0h4v4.1h-4zM108 0h4v4.1h-4zM128 0h4v4.1h-4zM140 0h4v4.1h-4zM144 0h4v4.1h-4zM156 0h4v4.1h-4zM4 4.1h4v4.1h-4zM8 4.1h4v4.1h-4zM40 4.1h4v4.1h-4zM60 4.1h4v4.1h-4zM68 4.1h4v4.1h-4zM112 4.1h4v4.1h-4zM156 4.1h4v4.1h-4zM160 4.1h4v4.1h-4zM4 8.2h4v4.1h-4zM8 8.2h4v4.1h-4zM28 8.2h4v4.1h-4zM56 8.2h4v4.1h-4zM68 8.2h4v4.1h-4zM76 8.2h4v4.1h-4zM100 8.2h4v4.1h-4zM112 8.2h4v4.1h-4zM132 8.2h4v4.1h-4zM156 8.2h4v4.1h-4zM16 12.3h4v4.1h-4z"/><path fill="rgb(0,0,0)" fill-opacity="0.25" d="M8 0h4v4.1h-4zM12 0h4v4.1h-4zM24 0h4v4.1h-4zM28 0h4v4.1h-4zM32 0h4v4.1h-4zM52 0h4v4.1h-4zM56 0h4v4.1h-4zM72 0h4v4.1h-4zM92 0h4v4.1h-4zM96 0h4v4.1h-4zM100 0h4v4.1h-4zM116 0h4v4.1h-4zM120 0h4v4.1h-4zM132 0h4v4.1h-4zM136 0h4v4.1h-4zM148 0h4v4.1h-4zM152 0h4v4.1h-4zM164 0h4v4.1h-4zM24 4.1h4v4.1h-4zM28 4.1h4v4.1h-4zM32 4.1h4v4.1h-4zM36 4.1h4v4.1h-4zM44 4.1h4v4.1h-4zM56 4.1h4v4.1h-4zM72 4.1h4v4.1h-4zM80 4.1h4v4.1h-4zM92 4.1h4v4.1h-4zM108 4.1h4v4.1h-4zM128 4.1h4v4.1h-4zM136 4.1h4v4.1h-4zM140 4.1h4v4.1h-4zM144 4.1h4v4.1h-4zM148 4.1h4v4.1h-4zM152 4.1h4v4.1h-4zM164 4.1h4v4.1h-4zM12 8.2h4v4.1h-4zM24 8.2h4v4.1h-4zM32 8.2h4v4.1h-4zM52 8.2h4v4.1h-4zM60 8.2h4v4.1h-4zM96 8.2h4v4.1h-4zM104 8.2h4v4.1h-4zM108 8.2h4v4.1h-4zM120 8.2h4v4.1h-4zM128 8.2h4v4.1h-4zM136 8.2h4v4.1h-4zM148 8.2h4v4.1h-4zM164 8.2h4v4.1h-4zM20 12.3h4v4.1h-4z"/><path fill="rgb(0,0,0)" fill-opacity="0.33" d="M0 0h4v4.1h-4zM44 0h4v4.1h-4zM48 0h4v4.1h-4zM64 0h4v4.1h-4zM112 0h4v4.1h-4zM124 0h4v4.1h-4zM160 0h4v4.1h-4zM12 4.1h4v4.1h-4zM64 4.1h4v4.1h-4zM120 4.1h4v4.1h-4zM124 4.1h4v4.1h-4zM0 8.2h4v4.1h-4zM40 8.2h4v4.1h-4zM44 8.2h4v4.1h-4zM48 8.2h4v4.1h-4zM64 8.2h4v4.1h-4zM72 8.2h4v4.1h-4zM80 8.2h4v4.1h-4zM92 8.2h4v4.1h-4zM124 8.2h4v4.1h-4zM140 8.2h4v4.1h-4zM144 8.2h4v4.1h-4zM160 8.2h4v4.1h-4z"/><path fill="rgb(0,0,0)" fill-opacity="0.42" d="M0 4.1h4v4.1h-4zM52 4.1h4v4.1h-4zM100 4.1h4v4.1h-4z"/></svg><svg class="a" style="left:222.0px;top:802.4px" width="16.0" height="16.4" viewBox="0 0 16.00 16.40"><path fill="rgb(0,0,0)" fill-opacity="0.17" d="M4 4.1h4v4.1h-4zM0 8.2h4v4.1h-4z"/><path fill="rgb(0,0,0)" fill-opacity="0.25" d="M8 8.2h4v4.1h-4zM12 8.2h4v4.1h-4zM0 12.3h4v4.1h-4z"/><path fill="rgb(0,0,0)" fill-opacity="0.33" d="M0 0h4v4.1h-4zM4 0h4v4.1h-4zM8 0h4v4.1h-4zM12 0h4v4.1h-4zM8 4.1h4v4.1h-4zM12 4.1h4v4.1h-4zM8 12.3h4v4.1h-4zM12 12.3h4v4.1h-4z"/></svg><div class="a cb" style="left:14px;top:826.2px"><svg class="a" style="left:1px;top:1px" width="13" height="13" viewBox="0 0 13 13"><path d="M2.5 6.5 L5.2 10 L10.5 2.2" fill="none" stroke="#4b4f9e" stroke-width="1.9"/></svg></div><svg class="a" style="left:34.0px;top:826.2px" width="87.0" height="16.4" viewBox="0 0 87.00 16.40"><path fill="rgb(0,0,0)" fill-opacity="0.08" d="M39.55 0h3.95v4.1h-3.95zM39.55 4.1h3.95v4.1h-3.95zM0 12.3h3.95v4.1h-3.95zM27.68 12.3h3.95v4.1h-3.95zM35.59 12.3h3.95v4.1h-3.95zM71.18 12.3h3.95v4.1h-3.95z"/><path fill="rgb(0,0,0)" fill-opacity="0.17" d="M3.95 0h3.95v4.1h-3.95zM31.64 0h3.95v4.1h-3.95zM67.23 0h3.95v4.1h-3.95zM3.95 4.1h3.95v4.1h-3.95zM27.68 4.1h3.95v4.1h-3.95zM83.05 4.1h3.95v4.1h-3.95zM3.95 8.2h3.95v4.1h-3.95zM35.59 8.2h3.95v4.1h-3.95zM71.18 8.2h3.95v4.1h-3.95zM15.82 12.3h3.95v4.1h-3.95z"/><path fill="rgb(0,0,0)" fill-opacity="0.25" d="M7.91 0h3.95v4.1h-3.95zM11.86 0h3.95v4.1h-3.95zM23.73 0h3.95v4.1h-3.95zM27.68 0h3.95v4.1h-3.95zM35.59 0h3.95v4.1h-3.95zM59.32 0h3.95v4.1h-3.95zM71.18 0h3.95v4.1h-3.95zM75.14 0h3.95v4.1h-3.95zM79.09 0h3.95v4.1h-3.95zM83.05 0h3.95v4.1h-3.95zM7.91 4.1h3.95v4.1h-3.95zM11.86 4.1h3.95v4.1h-3.95zM23.73 4.1h3.95v4.1h-3.95zM31.64 4.1h3.95v4.1h-3.95zM35.59 4.1h3.95v4.1h-3.95zM43.5 4.1h3.95v4.1h-3.95zM47.45 4.1h3.95v4.1h-3.95zM59.32 4.1h3.95v4.1h-3.95zM67.23 4.1h3.95v4.1h-3.95zM75.14 4.1h3.95v4.1h-3.95zM79.09 4.1h3.95v4.1h-3.95zM7.91 8.2h3.95v4.1h-3.95zM11.86 8.2h3.95v4.1h-3.95zM23.73 8.2h3.95v4.1h-3.95zM27.68 8.2h3.95v4.1h-3.95zM39.55 8.2h3.95v4.1h-3.95zM43.5 8.2h3.95v4.1h-3.95zM47.45 8.2h3.95v4.1h-3.95zM51.41 8.2h3.95v4.1h-3.95zM55.36 8.2h3.95v4.1h-3.95zM59.32 8.2h3.95v4.1h-3.95zM63.27 8.2h3.95v4.1h-3.95zM67.23 8.2h3.95v4.1h-3.95zM75.14 8.2h3.95v4.1h-3.95zM79.09 8.2h3.95v4.1h-3.95zM83.05 8.2h3.95v4.1h-3.95zM19.77 12.3h3.95v4.1h-3.95z"/><path fill="rgb(0,0,0)" fill-opacity="0.33" d="M0 0h3.95v4.1h-3.95zM43.5 0h3.95v4.1h-3.95zM51.41 0h3.95v4.1h-3.95zM55.36 0h3.95v4.1h-3.95zM63.27 0h3.95v4.1h-3.95zM51.41 4.1h3.95v4.1h-3.95zM55.36 4.1h3.95v4.1h-3.95zM63.27 4.1h3.95v4.1h-3.95zM0 8.2h3.95v4.1h-3.95zM31.64 8.2h3.95v4.1h-3.95z"/><path fill="rgb(0,0,0)" fill-opacity="0.42" d="M0 4.1h3.95v4.1h-3.95z"/></svg><svg class="a" style="left:222.0px;top:826.2px" width="16.0" height="16.4" viewBox="0 0 16.00 16.40"><path fill="rgb(0,0,0)" fill-opacity="0.17" d="M4 4.1h4v4.1h-4zM0 8.2h4v4.1h-4z"/><path fill="rgb(0,0,0)" fill-opacity="0.25" d="M8 8.2h4v4.1h-4zM12 8.2h4v4.1h-4zM0 12.3h4v4.1h-4z"/><path fill="rgb(0,0,0)" fill-opacity="0.33" d="M0 0h4v4.1h-4zM4 0h4v4.1h-4zM8 0h4v4.1h-4zM12 0h4v4.1h-4zM8 4.1h4v4.1h-4zM12 4.1h4v4.1h-4zM8 12.3h4v4.1h-4zM12 12.3h4v4.1h-4z"/></svg><div class="a cb" style="left:14px;top:850.0px"><svg class="a" style="left:1px;top:1px" width="13" height="13" viewBox="0 0 13 13"><path d="M2.5 6.5 L5.2 10 L10.5 2.2" fill="none" stroke="#4b4f9e" stroke-width="1.9"/></svg></div><svg class="a" style="left:34.0px;top:850.0px" width="126.0" height="16.4" viewBox="0 0 126.00 16.40"><path fill="rgb(0,0,0)" fill-opacity="0.08" d="M59.06 0h3.94v4.1h-3.94zM59.06 4.1h3.94v4.1h-3.94zM114.19 4.1h3.94v4.1h-3.94zM114.19 8.2h3.94v4.1h-3.94zM0 12.3h3.94v4.1h-3.94zM11.81 12.3h3.94v4.1h-3.94zM51.19 12.3h3.94v4.1h-3.94zM70.88 12.3h3.94v4.1h-3.94zM78.75 12.3h3.94v4.1h-3.94zM98.44 12.3h3.94v4.1h-3.94zM122.06 12.3h3.94v4.1h-3.94z"/><path fill="rgb(0,0,0)" fill-opacity="0.17" d="M3.94 0h3.94v4.1h-3.94zM31.5 0h3.94v4.1h-3.94zM43.31 0h3.94v4.1h-3.94zM74.81 0h3.94v4.1h-3.94zM82.69 0h3.94v4.1h-3.94zM94.5 0h3.94v4.1h-3.94zM102.38 0h3.94v4.1h-3.94zM3.94 4.1h3.94v4.1h-3.94zM35.44 4.1h3.94v4.1h-3.94zM66.94 4.1h3.94v4.1h-3.94zM74.81 4.1h3.94v4.1h-3.94zM82.69 4.1h3.94v4.1h-3.94zM110.25 4.1h3.94v4.1h-3.94zM122.06 4.1h3.94v4.1h-3.94zM3.94 8.2h3.94v4.1h-3.94zM27.56 8.2h3.94v4.1h-3.94zM63 8.2h3.94v4.1h-3.94zM70.88 8.2h3.94v4.1h-3.94zM82.69 8.2h3.94v4.1h-3.94zM98.44 8.2h3.94v4.1h-3.94zM110.25 8.2h3.94v4.1h-3.94zM122.06 8.2h3.94v4.1h-3.94zM15.75 12.3h3.94v4.1h-3.94zM43.31 12.3h3.94v4.1h-3.94z"/><path fill="rgb(0,0,0)" fill-opacity="0.25" d="M7.88 0h3.94v4.1h-3.94zM11.81 0h3.94v4.1h-3.94zM23.62 0h3.94v4.1h-3.94zM35.44 0h3.94v4.1h-3.94zM51.19 0h3.94v4.1h-3.94zM106.31 0h3.94v4.1h-3.94zM114.19 0h3.94v4.1h-3.94zM122.06 0h3.94v4.1h-3.94zM7.88 4.1h3.94v4.1h-3.94zM11.81 4.1h3.94v4.1h-3.94zM23.62 4.1h3.94v4.1h-3.94zM39.38 4.1h3.94v4.1h-3.94zM51.19 4.1h3.94v4.1h-3.94zM94.5 4.1h3.94v4.1h-3.94zM102.38 4.1h3.94v4.1h-3.94zM106.31 4.1h3.94v4.1h-3.94zM7.88 8.2h3.94v4.1h-3.94zM23.62 8.2h3.94v4.1h-3.94zM51.19 8.2h3.94v4.1h-3.94zM55.12 8.2h3.94v4.1h-3.94zM66.94 8.2h3.94v4.1h-3.94zM74.81 8.2h3.94v4.1h-3.94zM86.62 8.2h3.94v4.1h-3.94zM94.5 8.2h3.94v4.1h-3.94zM19.69 12.3h3.94v4.1h-3.94zM47.25 12.3h3.94v4.1h-3.94z"/><path fill="rgb(0,0,0)" fill-opacity="0.33" d="M0 0h3.94v4.1h-3.94zM27.56 0h3.94v4.1h-3.94zM55.12 0h3.94v4.1h-3.94zM63 0h3.94v4.1h-3.94zM70.88 0h3.94v4.1h-3.94zM78.75 0h3.94v4.1h-3.94zM86.62 0h3.94v4.1h-3.94zM90.56 0h3.94v4.1h-3.94zM110.25 0h3.94v4.1h-3.94zM118.12 0h3.94v4.1h-3.94zM27.56 4.1h3.94v4.1h-3.94zM31.5 4.1h3.94v4.1h-3.94zM55.12 4.1h3.94v4.1h-3.94zM63 4.1h3.94v4.1h-3.94zM70.88 4.1h3.94v4.1h-3.94zM78.75 4.1h3.94v4.1h-3.94zM86.62 4.1h3.94v4.1h-3.94zM90.56 4.1h3.94v4.1h-3.94zM118.12 4.1h3.94v4.1h-3.94zM0 8.2h3.94v4.1h-3.94zM11.81 8.2h3.94v4.1h-3.94zM39.38 8.2h3.94v4.1h-3.94zM59.06 8.2h3.94v4.1h-3.94zM78.75 8.2h3.94v4.1h-3.94zM102.38 8.2h3.94v4.1h-3.94zM106.31 8.2h3.94v4.1h-3.94zM118.12 8.2h3.94v4.1h-3.94z"/><path fill="rgb(0,0,0)" fill-opacity="0.42" d="M0 4.1h3.94v4.1h-3.94zM31.5 8.2h3.94v4.1h-3.94z"/></svg><svg class="a" style="left:222.0px;top:850.0px" width="16.0" height="16.4" viewBox="0 0 16.00 16.40"><path fill="rgb(0,0,0)" fill-opacity="0.17" d="M4 4.1h4v4.1h-4zM0 8.2h4v4.1h-4z"/><path fill="rgb(0,0,0)" fill-opacity="0.25" d="M8 8.2h4v4.1h-4zM12 8.2h4v4.1h-4zM0 12.3h4v4.1h-4z"/><path fill="rgb(0,0,0)" fill-opacity="0.33" d="M0 0h4v4.1h-4zM4 0h4v4.1h-4zM8 0h4v4.1h-4zM12 0h4v4.1h-4zM8 4.1h4v4.1h-4zM12 4.1h4v4.1h-4zM8 12.3h4v4.1h-4zM12 12.3h4v4.1h-4z"/></svg><div class="a cb" style="left:14px;top:873.8px"></div><svg class="a" style="left:34.0px;top:873.8px" width="172.0" height="16.4" viewBox="0 0 172.00 16.40"><path fill="rgb(0,0,0)" fill-opacity="0.08" d="M32 0h4v4.1h-4zM100 0h4v4.1h-4zM112 4.1h4v4.1h-4zM16 8.2h4v4.1h-4zM112 8.2h4v4.1h-4zM0 12.3h4v4.1h-4zM4 12.3h4v4.1h-4zM12 12.3h4v4.1h-4zM24 12.3h4v4.1h-4zM68 12.3h4v4.1h-4zM76 12.3h4v4.1h-4zM120 12.3h4v4.1h-4zM156 12.3h4v4.1h-4z"/><path fill="rgb(0,0,0)" fill-opacity="0.17" d="M4 0h4v4.1h-4zM40 0h4v4.1h-4zM64 0h4v4.1h-4zM144 0h4v4.1h-4zM148 0h4v4.1h-4zM152 0h4v4.1h-4zM160 0h4v4.1h-4zM4 4.1h4v4.1h-4zM8 4.1h4v4.1h-4zM28 4.1h4v4.1h-4zM92 4.1h4v4.1h-4zM100 4.1h4v4.1h-4zM4 8.2h4v4.1h-4zM8 8.2h4v4.1h-4zM28 8.2h4v4.1h-4zM32 8.2h4v4.1h-4zM44 8.2h4v4.1h-4zM68 8.2h4v4.1h-4zM96 8.2h4v4.1h-4zM104 8.2h4v4.1h-4zM120 8.2h4v4.1h-4zM156 8.2h4v4.1h-4zM160 8.2h4v4.1h-4zM16 12.3h4v4.1h-4zM52 12.3h4v4.1h-4z"/><path fill="rgb(0,0,0)" fill-opacity="0.25" d="M8 0h4v4.1h-4zM12 0h4v4.1h-4zM24 0h4v4.1h-4zM28 0h4v4.1h-4zM36 0h4v4.1h-4zM44 0h4v4.1h-4zM72 0h4v4.1h-4zM80 0h4v4.1h-4zM108 0h4v4.1h-4zM116 0h4v4.1h-4zM124 0h4v4.1h-4zM132 0h4v4.1h-4zM136 0h4v4.1h-4zM140 0h4v4.1h-4zM156 0h4v4.1h-4zM164 0h4v4.1h-4zM168 0h4v4.1h-4zM24 4.1h4v4.1h-4zM32 4.1h4v4.1h-4zM36 4.1h4v4.1h-4zM40 4.1h4v4.1h-4zM44 4.1h4v4.1h-4zM64 4.1h4v4.1h-4zM72 4.1h4v4.1h-4zM76 4.1h4v4.1h-4zM80 4.1h4v4.1h-4zM96 4.1h4v4.1h-4zM108 4.1h4v4.1h-4zM116 4.1h4v4.1h-4zM132 4.1h4v4.1h-4zM136 4.1h4v4.1h-4zM140 4.1h4v4.1h-4zM144 4.1h4v4.1h-4zM148 4.1h4v4.1h-4zM152 4.1h4v4.1h-4zM12 8.2h4v4.1h-4zM24 8.2h4v4.1h-4zM36 8.2h4v4.1h-4zM40 8.2h4v4.1h-4zM64 8.2h4v4.1h-4zM72 8.2h4v4.1h-4zM76 8.2h4v4.1h-4zM80 8.2h4v4.1h-4zM92 8.2h4v4.1h-4zM108 8.2h4v4.1h-4zM116 8.2h4v4.1h-4zM124 8.2h4v4.1h-4zM128 8.2h4v4.1h-4zM140 8.2h4v4.1h-4zM152 8.2h4v4.1h-4zM164 8.2h4v4.1h-4zM168 8.2h4v4.1h-4zM20 12.3h4v4.1h-4zM48 12.3h4v4.1h-4z"/><path fill="rgb(0,0,0)" fill-opacity="0.33" d="M0 0h4v4.1h-4zM56 0h4v4.1h-4zM60 0h4v4.1h-4zM76 0h4v4.1h-4zM84 0h4v4.1h-4zM88 0h4v4.1h-4zM96 0h4v4.1h-4zM104 0h4v4.1h-4zM128 0h4v4.1h-4zM12 4.1h4v4.1h-4zM56 4.1h4v4.1h-4zM60 4.1h4v4.1h-4zM84 4.1h4v4.1h-4zM88 4.1h4v4.1h-4zM104 4.1h4v4.1h-4zM124 4.1h4v4.1h-4zM128 4.1h4v4.1h-4zM0 8.2h4v4.1h-4zM56 8.2h4v4.1h-4zM60 8.2h4v4.1h-4zM84 8.2h4v4.1h-4zM88 8.2h4v4.1h-4zM100 8.2h4v4.1h-4zM132 8.2h4v4.1h-4zM144 8.2h4v4.1h-4zM148 8.2h4v4.1h-4z"/><path fill="rgb(0,0,0)" fill-opacity="0.42" d="M0 4.1h4v4.1h-4z"/><path fill="rgb(0,0,0)" fill-opacity="0.50" d="M164 4.1h4v4.1h-4z"/></svg><svg class="a" style="left:222.0px;top:873.8px" width="16.0" height="16.4" viewBox="0 0 16.00 16.40"><path fill="rgb(0,0,0)" fill-opacity="0.17" d="M4 4.1h4v4.1h-4zM0 8.2h4v4.1h-4z"/><path fill="rgb(0,0,0)" fill-opacity="0.25" d="M8 8.2h4v4.1h-4zM12 8.2h4v4.1h-4zM0 12.3h4v4.1h-4z"/><path fill="rgb(0,0,0)" fill-opacity="0.33" d="M0 0h4v4.1h-4zM4 0h4v4.1h-4zM8 0h4v4.1h-4zM12 0h4v4.1h-4zM8 4.1h4v4.1h-4zM12 4.1h4v4.1h-4zM8 12.3h4v4.1h-4zM12 12.3h4v4.1h-4z"/></svg><div class="a cb" style="left:14px;top:897.6px"></div><svg class="a" style="left:34.0px;top:897.6px" width="176.0" height="16.4" viewBox="0 0 176.00 16.40"><path fill="rgb(0,0,0)" fill-opacity="0.08" d="M92 0h4v4.1h-4zM116 0h4v4.1h-4zM92 4.1h4v4.1h-4zM112 4.1h4v4.1h-4zM32 8.2h4v4.1h-4zM112 8.2h4v4.1h-4zM120 8.2h4v4.1h-4zM140 8.2h4v4.1h-4zM0 12.3h4v4.1h-4zM4 12.3h4v4.1h-4zM12 12.3h4v4.1h-4zM24 12.3h4v4.1h-4zM68 12.3h4v4.1h-4zM80 12.3h4v4.1h-4zM160 12.3h4v4.1h-4z"/><path fill="rgb(0,0,0)" fill-opacity="0.17" d="M4 0h4v4.1h-4zM32 0h4v4.1h-4zM40 0h4v4.1h-4zM148 0h4v4.1h-4zM152 0h4v4.1h-4zM164 0h4v4.1h-4zM4 4.1h4v4.1h-4zM8 4.1h4v4.1h-4zM36 4.1h4v4.1h-4zM100 4.1h4v4.1h-4zM116 4.1h4v4.1h-4zM144 4.1h4v4.1h-4zM4 8.2h4v4.1h-4zM8 8.2h4v4.1h-4zM16 8.2h4v4.1h-4zM44 8.2h4v4.1h-4zM68 8.2h4v4.1h-4zM96 8.2h4v4.1h-4zM116 8.2h4v4.1h-4zM160 8.2h4v4.1h-4zM164 8.2h4v4.1h-4zM16 12.3h4v4.1h-4zM48 12.3h4v4.1h-4z"/><path fill="rgb(0,0,0)" fill-opacity="0.25" d="M8 0h4v4.1h-4zM12 0h4v4.1h-4zM24 0h4v4.1h-4zM28 0h4v4.1h-4zM36 0h4v4.1h-4zM44 0h4v4.1h-4zM64 0h4v4.1h-4zM72 0h4v4.1h-4zM76 0h4v4.1h-4zM80 0h4v4.1h-4zM84 0h4v4.1h-4zM88 0h4v4.1h-4zM124 0h4v4.1h-4zM136 0h4v4.1h-4zM140 0h4v4.1h-4zM144 0h4v4.1h-4zM156 0h4v4.1h-4zM160 0h4v4.1h-4zM168 0h4v4.1h-4zM172 0h4v4.1h-4zM24 4.1h4v4.1h-4zM28 4.1h4v4.1h-4zM32 4.1h4v4.1h-4zM40 4.1h4v4.1h-4zM44 4.1h4v4.1h-4zM64 4.1h4v4.1h-4zM72 4.1h4v4.1h-4zM76 4.1h4v4.1h-4zM80 4.1h4v4.1h-4zM84 4.1h4v4.1h-4zM96 4.1h4v4.1h-4zM124 4.1h4v4.1h-4zM136 4.1h4v4.1h-4zM140 4.1h4v4.1h-4zM148 4.1h4v4.1h-4zM152 4.1h4v4.1h-4zM156 4.1h4v4.1h-4zM12 8.2h4v4.1h-4zM24 8.2h4v4.1h-4zM28 8.2h4v4.1h-4zM40 8.2h4v4.1h-4zM60 8.2h4v4.1h-4zM64 8.2h4v4.1h-4zM72 8.2h4v4.1h-4zM76 8.2h4v4.1h-4zM84 8.2h4v4.1h-4zM88 8.2h4v4.1h-4zM100 8.2h4v4.1h-4zM104 8.2h4v4.1h-4zM108 8.2h4v4.1h-4zM124 8.2h4v4.1h-4zM132 8.2h4v4.1h-4zM136 8.2h4v4.1h-4zM144 8.2h4v4.1h-4zM156 8.2h4v4.1h-4zM168 8.2h4v4.1h-4zM172 8.2h4v4.1h-4zM20 12.3h4v4.1h-4zM52 12.3h4v4.1h-4z"/><path fill="rgb(0,0,0)" fill-opacity="0.33" d="M0 0h4v4.1h-4zM56 0h4v4.1h-4zM60 0h4v4.1h-4zM96 0h4v4.1h-4zM104 0h4v4.1h-4zM108 0h4v4.1h-4zM120 0h4v4.1h-4zM128 0h4v4.1h-4zM132 0h4v4.1h-4zM12 4.1h4v4.1h-4zM56 4.1h4v4.1h-4zM60 4.1h4v4.1h-4zM88 4.1h4v4.1h-4zM104 4.1h4v4.1h-4zM108 4.1h4v4.1h-4zM120 4.1h4v4.1h-4zM128 4.1h4v4.1h-4zM132 4.1h4v4.1h-4zM0 8.2h4v4.1h-4zM36 8.2h4v4.1h-4zM56 8.2h4v4.1h-4zM80 8.2h4v4.1h-4zM92 8.2h4v4.1h-4zM128 8.2h4v4.1h-4zM148 8.2h4v4.1h-4zM152 8.2h4v4.1h-4z"/><path fill="rgb(0,0,0)" fill-opacity="0.42" d="M0 4.1h4v4.1h-4z"/><path fill="rgb(0,0,0)" fill-opacity="0.50" d="M168 4.1h4v4.1h-4z"/></svg><svg class="a" style="left:222.0px;top:897.6px" width="16.0" height="16.4" viewBox="0 0 16.00 16.40"><path fill="rgb(0,0,0)" fill-opacity="0.17" d="M4 4.1h4v4.1h-4zM0 8.2h4v4.1h-4z"/><path fill="rgb(0,0,0)" fill-opacity="0.25" d="M8 8.2h4v4.1h-4zM12 8.2h4v4.1h-4zM0 12.3h4v4.1h-4z"/><path fill="rgb(0,0,0)" fill-opacity="0.33" d="M0 0h4v4.1h-4zM4 0h4v4.1h-4zM8 0h4v4.1h-4zM12 0h4v4.1h-4zM8 4.1h4v4.1h-4zM12 4.1h4v4.1h-4zM8 12.3h4v4.1h-4zM12 12.3h4v4.1h-4z"/></svg>
<div class="a" style="left:286px;top:748px;width:19px;height:176px;background:linear-gradient(90deg,#e6e6e6,#f2f2f2)"></div>
<div class="a" style="left:290px;top:756px;width:0;height:0;border-left:5px solid transparent;border-right:5px solid transparent;border-bottom:5px solid #444"></div>
<div class="a" style="left:287px;top:770px;width:18px;height:31px;border:1px solid #a6a6a6;border-radius:2px;background:linear-gradient(90deg,#f3f3f3,#dcdcdc)"></div><div class="a" style="left:291px;top:781px;width:9px;height:7px;border-top:1px solid #555;border-bottom:1px solid #555"></div><div class="a" style="left:291px;top:784px;width:9px;height:1px;background:#555"></div>
<div class="a" style="left:290px;top:910px;width:0;height:0;border-left:5px solid transparent;border-right:5px solid transparent;border-top:5px solid #444"></div>
<div class="a" style="left:14px;top:920.5px;width:16px;height:3.5px;border:1px solid #8f8f8f;border-bottom:0"></div>
<div class="a" style="left:10px;top:924px;width:276px;height:19px;background:linear-gradient(#e6e6e6,#f2f2f2)"></div>
<div class="a" style="left:32px;top:925px;width:226px;height:18px;border:1px solid #a6a6a6;border-radius:2px;background:linear-gradient(#f3f3f3,#dcdcdc)"></div>
<div class="a" style="left:142px;top:928px;font-size:10px;color:#555">|||</div>
<div class="a" style="left:16px;top:929px;width:0;height:0;border-top:5px solid transparent;border-bottom:5px solid transparent;border-right:5px solid #444"></div>
<div class="a" style="left:272px;top:929px;width:0;height:0;border-top:5px solid transparent;border-bottom:5px solid transparent;border-left:5px solid #444"></div>

<div class="gb" style="left:3px;top:968px;width:296px;height:130px"></div>
<div class="gl" style="left:9px;top:959px">Highlight</div>
<div class="a t15" style="left:10px;top:984px">Type:</div>
<div class="a t15" style="left:10px;top:1012px">Component:</div>
<div class="a t15" style="left:10px;top:1040px">Frequency:</div>
<div class="a t15" style="left:10px;top:1068px">% of Energy:</div>
<div class="a tx" style="left:94px;top:982px;width:200px;height:27px;background:#f1f1f1;border-color:#d8d8d8"></div>
<div class="a tx" style="left:94px;top:1010px;width:200px;height:27px;background:#f1f1f1;border-color:#d8d8d8"></div>
<div class="a tx" style="left:94px;top:1038px;width:200px;height:27px;background:#f1f1f1;border-color:#d8d8d8"></div>
<div class="a tx" style="left:94px;top:1066px;width:200px;height:27px;background:#f1f1f1;border-color:#d8d8d8"></div>
<div class="a t15" style="left:101px;top:989px">Strain Energy</div>
<svg class="a" style="left:101.5px;top:1015.6px" width="139.0" height="17.0" viewBox="0 0 139.00 17.00"><path fill="#dddddd" d="M31.77 0h3.97v4.25h-3.97zM39.71 0h3.97v4.25h-3.97zM71.49 0h3.97v4.25h-3.97zM63.54 4.25h3.97v4.25h-3.97zM15.89 8.5h3.97v4.25h-3.97zM43.69 8.5h3.97v4.25h-3.97zM0 12.75h3.97v4.25h-3.97zM11.91 12.75h3.97v4.25h-3.97zM23.83 12.75h3.97v4.25h-3.97zM59.57 12.75h3.97v4.25h-3.97zM83.4 12.75h3.97v4.25h-3.97zM103.26 12.75h3.97v4.25h-3.97zM131.06 12.75h3.97v4.25h-3.97z"/><path fill="#c9c9c9" d="M3.97 0h3.97v4.25h-3.97zM23.83 0h3.97v4.25h-3.97zM79.43 0h3.97v4.25h-3.97zM87.37 0h3.97v4.25h-3.97zM99.29 0h3.97v4.25h-3.97zM111.2 0h3.97v4.25h-3.97zM115.17 0h3.97v4.25h-3.97zM127.09 0h3.97v4.25h-3.97zM3.97 4.25h3.97v4.25h-3.97zM7.94 4.25h3.97v4.25h-3.97zM27.8 4.25h3.97v4.25h-3.97zM59.57 4.25h3.97v4.25h-3.97zM71.49 4.25h3.97v4.25h-3.97zM87.37 4.25h3.97v4.25h-3.97zM127.09 4.25h3.97v4.25h-3.97zM131.06 4.25h3.97v4.25h-3.97zM3.97 8.5h3.97v4.25h-3.97zM7.94 8.5h3.97v4.25h-3.97zM27.8 8.5h3.97v4.25h-3.97zM31.77 8.5h3.97v4.25h-3.97zM59.57 8.5h3.97v4.25h-3.97zM67.51 8.5h3.97v4.25h-3.97zM87.37 8.5h3.97v4.25h-3.97zM103.26 8.5h3.97v4.25h-3.97zM123.11 8.5h3.97v4.25h-3.97zM127.09 8.5h3.97v4.25h-3.97zM15.89 12.75h3.97v4.25h-3.97zM19.86 12.75h3.97v4.25h-3.97zM47.66 12.75h3.97v4.25h-3.97zM51.63 12.75h3.97v4.25h-3.97z"/><path fill="#b5b5b5" d="M7.94 0h3.97v4.25h-3.97zM11.91 0h3.97v4.25h-3.97zM27.8 0h3.97v4.25h-3.97zM43.69 0h3.97v4.25h-3.97zM55.6 0h3.97v4.25h-3.97zM59.57 0h3.97v4.25h-3.97zM103.26 0h3.97v4.25h-3.97zM107.23 0h3.97v4.25h-3.97zM119.14 0h3.97v4.25h-3.97zM123.11 0h3.97v4.25h-3.97zM135.03 0h3.97v4.25h-3.97zM11.91 4.25h3.97v4.25h-3.97zM23.83 4.25h3.97v4.25h-3.97zM31.77 4.25h3.97v4.25h-3.97zM35.74 4.25h3.97v4.25h-3.97zM39.71 4.25h3.97v4.25h-3.97zM43.69 4.25h3.97v4.25h-3.97zM55.6 4.25h3.97v4.25h-3.97zM67.51 4.25h3.97v4.25h-3.97zM75.46 4.25h3.97v4.25h-3.97zM99.29 4.25h3.97v4.25h-3.97zM107.23 4.25h3.97v4.25h-3.97zM111.2 4.25h3.97v4.25h-3.97zM115.17 4.25h3.97v4.25h-3.97zM119.14 4.25h3.97v4.25h-3.97zM123.11 4.25h3.97v4.25h-3.97zM135.03 4.25h3.97v4.25h-3.97zM11.91 8.5h3.97v4.25h-3.97zM23.83 8.5h3.97v4.25h-3.97zM35.74 8.5h3.97v4.25h-3.97zM55.6 8.5h3.97v4.25h-3.97zM71.49 8.5h3.97v4.25h-3.97zM75.46 8.5h3.97v4.25h-3.97zM99.29 8.5h3.97v4.25h-3.97zM107.23 8.5h3.97v4.25h-3.97zM119.14 8.5h3.97v4.25h-3.97zM135.03 8.5h3.97v4.25h-3.97z"/><path fill="#a1a1a1" d="M0 0h3.97v4.25h-3.97zM35.74 0h3.97v4.25h-3.97zM67.51 0h3.97v4.25h-3.97zM75.46 0h3.97v4.25h-3.97zM83.4 0h3.97v4.25h-3.97zM91.34 0h3.97v4.25h-3.97zM95.31 0h3.97v4.25h-3.97zM131.06 0h3.97v4.25h-3.97zM0 4.25h3.97v4.25h-3.97zM83.4 4.25h3.97v4.25h-3.97zM91.34 4.25h3.97v4.25h-3.97zM95.31 4.25h3.97v4.25h-3.97zM0 8.5h3.97v4.25h-3.97zM39.71 8.5h3.97v4.25h-3.97zM63.54 8.5h3.97v4.25h-3.97zM83.4 8.5h3.97v4.25h-3.97zM91.34 8.5h3.97v4.25h-3.97zM95.31 8.5h3.97v4.25h-3.97zM111.2 8.5h3.97v4.25h-3.97zM115.17 8.5h3.97v4.25h-3.97zM131.06 8.5h3.97v4.25h-3.97z"/></svg>
<div class="a t15" style="left:101px;top:1044px">485.80</div>
<div class="a t15" style="left:101px;top:1072px">86.47</div>

<!-- RIGHT TAB CONTROL -->
<div class="a" style="left:374px;top:54px;width:132px;height:26px;border:1px solid #929292;border-bottom:0;background:linear-gradient(#f3f3f3,#dbdbdb)"></div>
<div class="a t15" style="left:380px;top:60px;font-size:14.5px">Mass Participation</div>
<div class="a" style="left:372px;top:79px;width:1547px;height:93px;"></div>
<div class="a" style="left:372px;top:79px;width:1546px;height:1092px;border:1px solid #8e8e8e;background:#fff"></div>
<div class="a" style="left:505px;top:52px;width:99px;height:28px;border:1px solid #929292;border-bottom:0;background:#fff"></div>
<div class="a t15" style="left:513px;top:57.5px;font-size:15.3px">Modal Maps</div>

<!-- chart -->
<div class="a" style="left:1103px;top:76.5px;font-size:30.1px;line-height:34px;color:#000">Strain Energy Density</div>
<svg class="a" style="left:1038.0px;top:108.5px" width="417.0" height="17.0" viewBox="0 0 417.00 17.00"><path fill="#eaeaea" d="M8.6 0h4.3v4.25h-4.3zM17.2 0h4.3v4.25h-4.3zM68.78 0h4.3v4.25h-4.3zM77.38 0h4.3v4.25h-4.3zM103.18 0h4.3v4.25h-4.3zM120.37 0h4.3v4.25h-4.3zM128.97 0h4.3v4.25h-4.3zM133.27 0h4.3v4.25h-4.3zM146.16 0h4.3v4.25h-4.3zM154.76 0h4.3v4.25h-4.3zM266.54 0h4.3v4.25h-4.3zM12.9 4.25h4.3v4.25h-4.3zM30.09 4.25h4.3v4.25h-4.3zM137.57 4.25h4.3v4.25h-4.3zM227.85 4.25h4.3v4.25h-4.3zM253.64 4.25h4.3v4.25h-4.3zM404.1 4.25h4.3v4.25h-4.3zM4.3 8.5h4.3v4.25h-4.3zM219.25 8.5h4.3v4.25h-4.3zM240.74 8.5h4.3v4.25h-4.3zM292.33 8.5h4.3v4.25h-4.3zM326.72 8.5h4.3v4.25h-4.3zM412.7 8.5h4.3v4.25h-4.3zM47.29 12.75h4.3v4.25h-4.3zM98.88 12.75h4.3v4.25h-4.3zM137.57 12.75h4.3v4.25h-4.3zM146.16 12.75h4.3v4.25h-4.3zM193.45 12.75h4.3v4.25h-4.3zM214.95 12.75h4.3v4.25h-4.3zM266.54 12.75h4.3v4.25h-4.3zM275.13 12.75h4.3v4.25h-4.3zM283.73 12.75h4.3v4.25h-4.3zM318.12 12.75h4.3v4.25h-4.3zM356.81 12.75h4.3v4.25h-4.3zM361.11 12.75h4.3v4.25h-4.3z"/><path fill="#d4d4d4" d="M51.59 0h4.3v4.25h-4.3zM60.19 0h4.3v4.25h-4.3zM94.58 0h4.3v4.25h-4.3zM176.26 0h4.3v4.25h-4.3zM189.15 0h4.3v4.25h-4.3zM391.21 0h4.3v4.25h-4.3zM73.08 4.25h4.3v4.25h-4.3zM77.38 4.25h4.3v4.25h-4.3zM219.25 4.25h4.3v4.25h-4.3zM38.69 8.5h4.3v4.25h-4.3zM184.86 8.5h4.3v4.25h-4.3zM227.85 8.5h4.3v4.25h-4.3zM249.34 8.5h4.3v4.25h-4.3zM253.64 8.5h4.3v4.25h-4.3zM335.32 8.5h4.3v4.25h-4.3zM374.01 8.5h4.3v4.25h-4.3zM0 12.75h4.3v4.25h-4.3zM8.6 12.75h4.3v4.25h-4.3zM17.2 12.75h4.3v4.25h-4.3zM21.49 12.75h4.3v4.25h-4.3zM25.79 12.75h4.3v4.25h-4.3zM34.39 12.75h4.3v4.25h-4.3zM55.89 12.75h4.3v4.25h-4.3zM68.78 12.75h4.3v4.25h-4.3zM85.98 12.75h4.3v4.25h-4.3zM111.77 12.75h4.3v4.25h-4.3zM120.37 12.75h4.3v4.25h-4.3zM124.67 12.75h4.3v4.25h-4.3zM128.97 12.75h4.3v4.25h-4.3zM141.87 12.75h4.3v4.25h-4.3zM163.36 12.75h4.3v4.25h-4.3zM167.66 12.75h4.3v4.25h-4.3zM171.96 12.75h4.3v4.25h-4.3zM176.26 12.75h4.3v4.25h-4.3zM184.86 12.75h4.3v4.25h-4.3zM202.05 12.75h4.3v4.25h-4.3zM206.35 12.75h4.3v4.25h-4.3zM210.65 12.75h4.3v4.25h-4.3zM223.55 12.75h4.3v4.25h-4.3zM245.04 12.75h4.3v4.25h-4.3zM257.94 12.75h4.3v4.25h-4.3zM262.24 12.75h4.3v4.25h-4.3zM270.84 12.75h4.3v4.25h-4.3zM279.43 12.75h4.3v4.25h-4.3zM296.63 12.75h4.3v4.25h-4.3zM313.82 12.75h4.3v4.25h-4.3zM331.02 12.75h4.3v4.25h-4.3zM343.92 12.75h4.3v4.25h-4.3zM348.22 12.75h4.3v4.25h-4.3zM352.52 12.75h4.3v4.25h-4.3zM365.41 12.75h4.3v4.25h-4.3zM369.71 12.75h4.3v4.25h-4.3zM395.51 12.75h4.3v4.25h-4.3zM404.1 12.75h4.3v4.25h-4.3z"/><path fill="#bfbfbf" d="M111.77 0h4.3v4.25h-4.3zM210.65 0h4.3v4.25h-4.3zM279.43 0h4.3v4.25h-4.3zM352.52 0h4.3v4.25h-4.3zM378.31 0h4.3v4.25h-4.3zM395.51 0h4.3v4.25h-4.3zM85.98 4.25h4.3v4.25h-4.3zM146.16 4.25h4.3v4.25h-4.3zM184.86 4.25h4.3v4.25h-4.3zM193.45 4.25h4.3v4.25h-4.3zM318.12 4.25h4.3v4.25h-4.3zM12.9 8.5h4.3v4.25h-4.3zM51.59 8.5h4.3v4.25h-4.3zM73.08 8.5h4.3v4.25h-4.3zM77.38 8.5h4.3v4.25h-4.3zM94.58 8.5h4.3v4.25h-4.3zM133.27 8.5h4.3v4.25h-4.3zM154.76 8.5h4.3v4.25h-4.3zM159.06 8.5h4.3v4.25h-4.3zM214.95 8.5h4.3v4.25h-4.3zM283.73 8.5h4.3v4.25h-4.3zM300.93 8.5h4.3v4.25h-4.3zM318.12 8.5h4.3v4.25h-4.3zM386.91 8.5h4.3v4.25h-4.3zM12.9 12.75h4.3v4.25h-4.3zM42.99 12.75h4.3v4.25h-4.3zM60.19 12.75h4.3v4.25h-4.3zM64.48 12.75h4.3v4.25h-4.3zM103.18 12.75h4.3v4.25h-4.3zM107.47 12.75h4.3v4.25h-4.3zM150.46 12.75h4.3v4.25h-4.3zM197.75 12.75h4.3v4.25h-4.3zM253.64 12.75h4.3v4.25h-4.3zM305.23 12.75h4.3v4.25h-4.3zM339.62 12.75h4.3v4.25h-4.3zM382.61 12.75h4.3v4.25h-4.3zM386.91 12.75h4.3v4.25h-4.3z"/><path fill="#aaaaaa" d="M34.39 0h4.3v4.25h-4.3zM116.07 0h4.3v4.25h-4.3zM163.36 0h4.3v4.25h-4.3zM197.75 0h4.3v4.25h-4.3zM219.25 0h4.3v4.25h-4.3zM232.14 0h4.3v4.25h-4.3zM257.94 0h4.3v4.25h-4.3zM275.13 0h4.3v4.25h-4.3zM292.33 0h4.3v4.25h-4.3zM305.23 0h4.3v4.25h-4.3zM356.81 0h4.3v4.25h-4.3zM361.11 0h4.3v4.25h-4.3zM365.41 0h4.3v4.25h-4.3zM408.4 0h4.3v4.25h-4.3zM4.3 4.25h4.3v4.25h-4.3zM55.89 4.25h4.3v4.25h-4.3zM64.48 4.25h4.3v4.25h-4.3zM107.47 4.25h4.3v4.25h-4.3zM111.77 4.25h4.3v4.25h-4.3zM150.46 4.25h4.3v4.25h-4.3zM210.65 4.25h4.3v4.25h-4.3zM270.84 4.25h4.3v4.25h-4.3zM283.73 4.25h4.3v4.25h-4.3zM292.33 4.25h4.3v4.25h-4.3zM326.72 4.25h4.3v4.25h-4.3zM352.52 4.25h4.3v4.25h-4.3zM30.09 8.5h4.3v4.25h-4.3zM64.48 8.5h4.3v4.25h-4.3zM111.77 8.5h4.3v4.25h-4.3zM116.07 8.5h4.3v4.25h-4.3zM189.15 8.5h4.3v4.25h-4.3zM210.65 8.5h4.3v4.25h-4.3zM270.84 8.5h4.3v4.25h-4.3zM288.03 8.5h4.3v4.25h-4.3zM305.23 8.5h4.3v4.25h-4.3zM322.42 8.5h4.3v4.25h-4.3zM352.52 8.5h4.3v4.25h-4.3zM391.21 8.5h4.3v4.25h-4.3zM404.1 8.5h4.3v4.25h-4.3zM51.59 12.75h4.3v4.25h-4.3zM81.68 12.75h4.3v4.25h-4.3zM94.58 12.75h4.3v4.25h-4.3zM116.07 12.75h4.3v4.25h-4.3zM133.27 12.75h4.3v4.25h-4.3zM159.06 12.75h4.3v4.25h-4.3zM180.56 12.75h4.3v4.25h-4.3zM189.15 12.75h4.3v4.25h-4.3zM227.85 12.75h4.3v4.25h-4.3zM236.44 12.75h4.3v4.25h-4.3zM240.74 12.75h4.3v4.25h-4.3zM249.34 12.75h4.3v4.25h-4.3zM288.03 12.75h4.3v4.25h-4.3zM292.33 12.75h4.3v4.25h-4.3zM322.42 12.75h4.3v4.25h-4.3zM326.72 12.75h4.3v4.25h-4.3zM374.01 12.75h4.3v4.25h-4.3zM408.4 12.75h4.3v4.25h-4.3zM412.7 12.75h4.3v4.25h-4.3z"/><path fill="#959595" d="M4.3 0h4.3v4.25h-4.3zM21.49 0h4.3v4.25h-4.3zM223.55 0h4.3v4.25h-4.3zM236.44 0h4.3v4.25h-4.3zM245.04 0h4.3v4.25h-4.3zM270.84 0h4.3v4.25h-4.3zM283.73 0h4.3v4.25h-4.3zM296.63 0h4.3v4.25h-4.3zM300.93 0h4.3v4.25h-4.3zM309.53 0h4.3v4.25h-4.3zM318.12 0h4.3v4.25h-4.3zM326.72 0h4.3v4.25h-4.3zM331.02 0h4.3v4.25h-4.3zM335.32 0h4.3v4.25h-4.3zM339.62 0h4.3v4.25h-4.3zM17.2 4.25h4.3v4.25h-4.3zM21.49 4.25h4.3v4.25h-4.3zM34.39 4.25h4.3v4.25h-4.3zM38.69 4.25h4.3v4.25h-4.3zM47.29 4.25h4.3v4.25h-4.3zM81.68 4.25h4.3v4.25h-4.3zM94.58 4.25h4.3v4.25h-4.3zM116.07 4.25h4.3v4.25h-4.3zM163.36 4.25h4.3v4.25h-4.3zM214.95 4.25h4.3v4.25h-4.3zM232.14 4.25h4.3v4.25h-4.3zM245.04 4.25h4.3v4.25h-4.3zM257.94 4.25h4.3v4.25h-4.3zM266.54 4.25h4.3v4.25h-4.3zM300.93 4.25h4.3v4.25h-4.3zM305.23 4.25h4.3v4.25h-4.3zM335.32 4.25h4.3v4.25h-4.3zM369.71 4.25h4.3v4.25h-4.3zM395.51 4.25h4.3v4.25h-4.3zM399.8 4.25h4.3v4.25h-4.3zM408.4 4.25h4.3v4.25h-4.3zM8.6 8.5h4.3v4.25h-4.3zM17.2 8.5h4.3v4.25h-4.3zM21.49 8.5h4.3v4.25h-4.3zM34.39 8.5h4.3v4.25h-4.3zM55.89 8.5h4.3v4.25h-4.3zM60.19 8.5h4.3v4.25h-4.3zM68.78 8.5h4.3v4.25h-4.3zM81.68 8.5h4.3v4.25h-4.3zM85.98 8.5h4.3v4.25h-4.3zM90.28 8.5h4.3v4.25h-4.3zM107.47 8.5h4.3v4.25h-4.3zM193.45 8.5h4.3v4.25h-4.3zM232.14 8.5h4.3v4.25h-4.3zM257.94 8.5h4.3v4.25h-4.3zM262.24 8.5h4.3v4.25h-4.3zM275.13 8.5h4.3v4.25h-4.3zM279.43 8.5h4.3v4.25h-4.3zM339.62 8.5h4.3v4.25h-4.3zM356.81 8.5h4.3v4.25h-4.3zM361.11 8.5h4.3v4.25h-4.3zM365.41 8.5h4.3v4.25h-4.3zM378.31 8.5h4.3v4.25h-4.3z"/><path fill="#808080" d="M25.79 0h4.3v4.25h-4.3zM38.69 0h4.3v4.25h-4.3zM42.99 0h4.3v4.25h-4.3zM85.98 0h4.3v4.25h-4.3zM124.67 0h4.3v4.25h-4.3zM180.56 0h4.3v4.25h-4.3zM214.95 0h4.3v4.25h-4.3zM288.03 0h4.3v4.25h-4.3zM322.42 0h4.3v4.25h-4.3zM369.71 0h4.3v4.25h-4.3zM374.01 0h4.3v4.25h-4.3zM382.61 0h4.3v4.25h-4.3zM386.91 0h4.3v4.25h-4.3zM399.8 0h4.3v4.25h-4.3zM8.6 4.25h4.3v4.25h-4.3zM25.79 4.25h4.3v4.25h-4.3zM51.59 4.25h4.3v4.25h-4.3zM60.19 4.25h4.3v4.25h-4.3zM90.28 4.25h4.3v4.25h-4.3zM98.88 4.25h4.3v4.25h-4.3zM103.18 4.25h4.3v4.25h-4.3zM120.37 4.25h4.3v4.25h-4.3zM124.67 4.25h4.3v4.25h-4.3zM128.97 4.25h4.3v4.25h-4.3zM154.76 4.25h4.3v4.25h-4.3zM180.56 4.25h4.3v4.25h-4.3zM189.15 4.25h4.3v4.25h-4.3zM223.55 4.25h4.3v4.25h-4.3zM236.44 4.25h4.3v4.25h-4.3zM275.13 4.25h4.3v4.25h-4.3zM279.43 4.25h4.3v4.25h-4.3zM288.03 4.25h4.3v4.25h-4.3zM296.63 4.25h4.3v4.25h-4.3zM313.82 4.25h4.3v4.25h-4.3zM331.02 4.25h4.3v4.25h-4.3zM339.62 4.25h4.3v4.25h-4.3zM356.81 4.25h4.3v4.25h-4.3zM361.11 4.25h4.3v4.25h-4.3zM365.41 4.25h4.3v4.25h-4.3zM378.31 4.25h4.3v4.25h-4.3zM382.61 4.25h4.3v4.25h-4.3zM391.21 4.25h4.3v4.25h-4.3zM0 8.5h4.3v4.25h-4.3zM25.79 8.5h4.3v4.25h-4.3zM42.99 8.5h4.3v4.25h-4.3zM47.29 8.5h4.3v4.25h-4.3zM98.88 8.5h4.3v4.25h-4.3zM103.18 8.5h4.3v4.25h-4.3zM120.37 8.5h4.3v4.25h-4.3zM124.67 8.5h4.3v4.25h-4.3zM128.97 8.5h4.3v4.25h-4.3zM180.56 8.5h4.3v4.25h-4.3zM197.75 8.5h4.3v4.25h-4.3zM223.55 8.5h4.3v4.25h-4.3zM236.44 8.5h4.3v4.25h-4.3zM245.04 8.5h4.3v4.25h-4.3zM266.54 8.5h4.3v4.25h-4.3zM296.63 8.5h4.3v4.25h-4.3zM313.82 8.5h4.3v4.25h-4.3zM331.02 8.5h4.3v4.25h-4.3zM382.61 8.5h4.3v4.25h-4.3zM399.8 8.5h4.3v4.25h-4.3zM408.4 8.5h4.3v4.25h-4.3z"/><path fill="#6a6a6a" d="M0 0h4.3v4.25h-4.3zM81.68 0h4.3v4.25h-4.3zM159.06 0h4.3v4.25h-4.3zM262.24 0h4.3v4.25h-4.3zM313.82 0h4.3v4.25h-4.3zM42.99 4.25h4.3v4.25h-4.3zM68.78 4.25h4.3v4.25h-4.3zM133.27 4.25h4.3v4.25h-4.3zM159.06 4.25h4.3v4.25h-4.3zM197.75 4.25h4.3v4.25h-4.3zM262.24 4.25h4.3v4.25h-4.3zM322.42 4.25h4.3v4.25h-4.3zM163.36 8.5h4.3v4.25h-4.3zM369.71 8.5h4.3v4.25h-4.3zM395.51 8.5h4.3v4.25h-4.3z"/><path fill="#555555" d="M0 4.25h4.3v4.25h-4.3zM150.46 8.5h4.3v4.25h-4.3z"/></svg>
<svg class="a" style="left:467.7px;top:146.8px" width="106.5" height="16.0" viewBox="0 0 106.50 16.00"><path fill="#eaeaea" d="M67.06 0h3.94v4h-3.94zM7.89 4h3.94v4h-3.94zM71 4h3.94v4h-3.94zM82.83 4h3.94v4h-3.94zM71 8h3.94v4h-3.94zM82.83 8h3.94v4h-3.94zM98.61 8h3.94v4h-3.94zM0 12h3.94v4h-3.94zM3.94 12h3.94v4h-3.94zM11.83 12h3.94v4h-3.94zM15.78 12h3.94v4h-3.94zM43.39 12h3.94v4h-3.94zM55.22 12h3.94v4h-3.94zM90.72 12h3.94v4h-3.94z"/><path fill="#d4d4d4" d="M7.89 0h3.94v4h-3.94zM15.78 0h3.94v4h-3.94zM71 0h3.94v4h-3.94zM78.89 0h3.94v4h-3.94zM94.67 0h3.94v4h-3.94zM15.78 4h3.94v4h-3.94zM3.94 8h3.94v4h-3.94zM7.89 8h3.94v4h-3.94zM11.83 8h3.94v4h-3.94zM43.39 8h3.94v4h-3.94zM55.22 8h3.94v4h-3.94zM23.67 12h3.94v4h-3.94z"/><path fill="#bfbfbf" d="M3.94 0h3.94v4h-3.94zM11.83 0h3.94v4h-3.94zM39.44 0h3.94v4h-3.94zM43.39 0h3.94v4h-3.94zM47.33 0h3.94v4h-3.94zM51.28 0h3.94v4h-3.94zM59.17 0h3.94v4h-3.94zM86.78 0h3.94v4h-3.94zM90.72 0h3.94v4h-3.94zM98.61 0h3.94v4h-3.94zM102.56 0h3.94v4h-3.94zM3.94 4h3.94v4h-3.94zM31.56 4h3.94v4h-3.94zM39.44 4h3.94v4h-3.94zM47.33 4h3.94v4h-3.94zM51.28 4h3.94v4h-3.94zM59.17 4h3.94v4h-3.94zM67.06 4h3.94v4h-3.94zM74.94 4h3.94v4h-3.94zM86.78 4h3.94v4h-3.94zM94.67 4h3.94v4h-3.94zM15.78 8h3.94v4h-3.94zM27.61 8h3.94v4h-3.94zM35.5 8h3.94v4h-3.94zM39.44 8h3.94v4h-3.94zM47.33 8h3.94v4h-3.94zM51.28 8h3.94v4h-3.94zM59.17 8h3.94v4h-3.94zM63.11 8h3.94v4h-3.94zM74.94 8h3.94v4h-3.94zM86.78 8h3.94v4h-3.94zM90.72 8h3.94v4h-3.94zM102.56 8h3.94v4h-3.94zM19.72 12h3.94v4h-3.94z"/><path fill="#aaaaaa" d="M0 0h3.94v4h-3.94zM11.83 4h3.94v4h-3.94zM27.61 4h3.94v4h-3.94zM35.5 4h3.94v4h-3.94zM63.11 4h3.94v4h-3.94zM90.72 4h3.94v4h-3.94zM98.61 4h3.94v4h-3.94zM102.56 4h3.94v4h-3.94zM0 8h3.94v4h-3.94zM67.06 8h3.94v4h-3.94zM94.67 8h3.94v4h-3.94z"/><path fill="#959595" d="M27.61 0h3.94v4h-3.94zM35.5 0h3.94v4h-3.94zM63.11 0h3.94v4h-3.94zM74.94 0h3.94v4h-3.94zM0 4h3.94v4h-3.94zM31.56 8h3.94v4h-3.94z"/></svg><svg class="a" style="left:469.2px;top:197.6px" width="105.0" height="16.0" viewBox="0 0 105.00 16.00"><path fill="#eaeaea" d="M56.54 0h4.04v4h-4.04zM80.77 0h4.04v4h-4.04zM84.81 0h4.04v4h-4.04zM8.08 4h4.04v4h-4.04zM56.54 4h4.04v4h-4.04zM80.77 4h4.04v4h-4.04zM84.81 4h4.04v4h-4.04zM64.62 8h4.04v4h-4.04zM80.77 8h4.04v4h-4.04zM84.81 8h4.04v4h-4.04zM0 12h4.04v4h-4.04zM4.04 12h4.04v4h-4.04zM12.12 12h4.04v4h-4.04zM16.15 12h4.04v4h-4.04zM44.42 12h4.04v4h-4.04zM56.54 12h4.04v4h-4.04zM88.85 12h4.04v4h-4.04zM100.96 12h4.04v4h-4.04z"/><path fill="#d4d4d4" d="M8.08 0h4.04v4h-4.04zM16.15 0h4.04v4h-4.04zM48.46 0h4.04v4h-4.04zM72.69 0h4.04v4h-4.04zM16.15 4h4.04v4h-4.04zM4.04 8h4.04v4h-4.04zM8.08 8h4.04v4h-4.04zM12.12 8h4.04v4h-4.04zM44.42 8h4.04v4h-4.04zM88.85 8h4.04v4h-4.04zM100.96 8h4.04v4h-4.04zM24.23 12h4.04v4h-4.04z"/><path fill="#bfbfbf" d="M4.04 0h4.04v4h-4.04zM12.12 0h4.04v4h-4.04zM40.38 0h4.04v4h-4.04zM44.42 0h4.04v4h-4.04zM52.5 0h4.04v4h-4.04zM60.58 0h4.04v4h-4.04zM64.62 0h4.04v4h-4.04zM68.65 0h4.04v4h-4.04zM88.85 0h4.04v4h-4.04zM92.88 0h4.04v4h-4.04zM96.92 0h4.04v4h-4.04zM4.04 4h4.04v4h-4.04zM32.31 4h4.04v4h-4.04zM36.35 4h4.04v4h-4.04zM40.38 4h4.04v4h-4.04zM48.46 4h4.04v4h-4.04zM52.5 4h4.04v4h-4.04zM68.65 4h4.04v4h-4.04zM76.73 4h4.04v4h-4.04zM92.88 4h4.04v4h-4.04zM96.92 4h4.04v4h-4.04zM16.15 8h4.04v4h-4.04zM28.27 8h4.04v4h-4.04zM36.35 8h4.04v4h-4.04zM48.46 8h4.04v4h-4.04zM56.54 8h4.04v4h-4.04zM60.58 8h4.04v4h-4.04zM76.73 8h4.04v4h-4.04zM20.19 12h4.04v4h-4.04z"/><path fill="#aaaaaa" d="M0 0h4.04v4h-4.04zM36.35 0h4.04v4h-4.04zM12.12 4h4.04v4h-4.04zM60.58 4h4.04v4h-4.04zM64.62 4h4.04v4h-4.04zM88.85 4h4.04v4h-4.04zM0 8h4.04v4h-4.04zM32.31 8h4.04v4h-4.04zM40.38 8h4.04v4h-4.04zM52.5 8h4.04v4h-4.04zM92.88 8h4.04v4h-4.04zM96.92 8h4.04v4h-4.04z"/><path fill="#959595" d="M28.27 0h4.04v4h-4.04zM76.73 0h4.04v4h-4.04zM0 4h4.04v4h-4.04zM28.27 4h4.04v4h-4.04zM68.65 8h4.04v4h-4.04z"/></svg><svg class="a" style="left:466.2px;top:248.4px" width="108.0" height="16.0" viewBox="0 0 108.00 16.00"><path fill="#eaeaea" d="M8 4h4v4h-4zM80 4h4v4h-4zM84 4h4v4h-4zM84 8h4v4h-4zM100 8h4v4h-4zM0 12h4v4h-4zM4 12h4v4h-4zM12 12h4v4h-4zM16 12h4v4h-4zM44 12h4v4h-4zM56 12h4v4h-4z"/><path fill="#d4d4d4" d="M8 0h4v4h-4zM16 0h4v4h-4zM68 0h4v4h-4zM72 0h4v4h-4zM80 0h4v4h-4zM16 4h4v4h-4zM4 8h4v4h-4zM8 8h4v4h-4zM12 8h4v4h-4zM44 8h4v4h-4zM56 8h4v4h-4zM64 8h4v4h-4zM24 12h4v4h-4z"/><path fill="#bfbfbf" d="M4 0h4v4h-4zM12 0h4v4h-4zM40 0h4v4h-4zM44 0h4v4h-4zM48 0h4v4h-4zM52 0h4v4h-4zM60 0h4v4h-4zM96 0h4v4h-4zM100 0h4v4h-4zM104 0h4v4h-4zM4 4h4v4h-4zM32 4h4v4h-4zM36 4h4v4h-4zM40 4h4v4h-4zM48 4h4v4h-4zM52 4h4v4h-4zM76 4h4v4h-4zM96 4h4v4h-4zM16 8h4v4h-4zM28 8h4v4h-4zM36 8h4v4h-4zM40 8h4v4h-4zM48 8h4v4h-4zM52 8h4v4h-4zM60 8h4v4h-4zM76 8h4v4h-4zM88 8h4v4h-4zM92 8h4v4h-4zM96 8h4v4h-4zM104 8h4v4h-4zM20 12h4v4h-4z"/><path fill="#aaaaaa" d="M0 0h4v4h-4zM36 0h4v4h-4zM64 0h4v4h-4zM88 0h4v4h-4zM92 0h4v4h-4zM12 4h4v4h-4zM28 4h4v4h-4zM60 4h4v4h-4zM64 4h4v4h-4zM68 4h4v4h-4zM92 4h4v4h-4zM100 4h4v4h-4zM104 4h4v4h-4zM0 8h4v4h-4z"/><path fill="#959595" d="M28 0h4v4h-4zM76 0h4v4h-4zM0 4h4v4h-4zM88 4h4v4h-4zM32 8h4v4h-4zM68 8h4v4h-4z"/></svg><svg class="a" style="left:469.2px;top:299.2px" width="105.0" height="16.0" viewBox="0 0 105.00 16.00"><path fill="#eaeaea" d="M32.31 0h4.04v4h-4.04zM80.77 0h4.04v4h-4.04zM8.08 4h4.04v4h-4.04zM16.15 4h4.04v4h-4.04zM80.77 4h4.04v4h-4.04zM80.77 8h4.04v4h-4.04zM0 12h4.04v4h-4.04zM4.04 12h4.04v4h-4.04zM12.12 12h4.04v4h-4.04zM16.15 12h4.04v4h-4.04zM44.42 12h4.04v4h-4.04zM100.96 12h4.04v4h-4.04z"/><path fill="#d4d4d4" d="M16.15 0h4.04v4h-4.04zM48.46 0h4.04v4h-4.04zM56.54 0h4.04v4h-4.04zM64.62 0h4.04v4h-4.04zM72.69 0h4.04v4h-4.04zM56.54 4h4.04v4h-4.04zM4.04 8h4.04v4h-4.04zM8.08 8h4.04v4h-4.04zM12.12 8h4.04v4h-4.04zM44.42 8h4.04v4h-4.04zM48.46 8h4.04v4h-4.04zM100.96 8h4.04v4h-4.04zM24.23 12h4.04v4h-4.04z"/><path fill="#bfbfbf" d="M4.04 0h4.04v4h-4.04zM8.08 0h4.04v4h-4.04zM12.12 0h4.04v4h-4.04zM44.42 0h4.04v4h-4.04zM52.5 0h4.04v4h-4.04zM60.58 0h4.04v4h-4.04zM68.65 0h4.04v4h-4.04zM84.81 0h4.04v4h-4.04zM88.85 0h4.04v4h-4.04zM92.88 0h4.04v4h-4.04zM96.92 0h4.04v4h-4.04zM4.04 4h4.04v4h-4.04zM32.31 4h4.04v4h-4.04zM36.35 4h4.04v4h-4.04zM40.38 4h4.04v4h-4.04zM48.46 4h4.04v4h-4.04zM52.5 4h4.04v4h-4.04zM64.62 4h4.04v4h-4.04zM68.65 4h4.04v4h-4.04zM76.73 4h4.04v4h-4.04zM84.81 4h4.04v4h-4.04zM88.85 4h4.04v4h-4.04zM92.88 4h4.04v4h-4.04zM96.92 4h4.04v4h-4.04zM16.15 8h4.04v4h-4.04zM28.27 8h4.04v4h-4.04zM36.35 8h4.04v4h-4.04zM60.58 8h4.04v4h-4.04zM76.73 8h4.04v4h-4.04zM84.81 8h4.04v4h-4.04zM92.88 8h4.04v4h-4.04zM20.19 12h4.04v4h-4.04z"/><path fill="#aaaaaa" d="M0 0h4.04v4h-4.04zM28.27 0h4.04v4h-4.04zM36.35 0h4.04v4h-4.04zM40.38 0h4.04v4h-4.04zM12.12 4h4.04v4h-4.04zM60.58 4h4.04v4h-4.04zM0 8h4.04v4h-4.04zM32.31 8h4.04v4h-4.04zM40.38 8h4.04v4h-4.04zM52.5 8h4.04v4h-4.04zM56.54 8h4.04v4h-4.04zM96.92 8h4.04v4h-4.04z"/><path fill="#959595" d="M76.73 0h4.04v4h-4.04zM0 4h4.04v4h-4.04zM28.27 4h4.04v4h-4.04zM68.65 8h4.04v4h-4.04z"/></svg><svg class="a" style="left:490.2px;top:350.0px" width="84.0" height="16.0" viewBox="0 0 84.00 16.00"><path fill="#eaeaea" d="M8 4h4v4h-4zM68 4h4v4h-4zM60 8h4v4h-4zM0 12h4v4h-4zM4 12h4v4h-4zM12 12h4v4h-4zM16 12h4v4h-4zM44 12h4v4h-4zM64 12h4v4h-4z"/><path fill="#d4d4d4" d="M8 0h4v4h-4zM16 0h4v4h-4zM40 0h4v4h-4zM52 0h4v4h-4zM60 0h4v4h-4zM16 4h4v4h-4zM4 8h4v4h-4zM8 8h4v4h-4zM12 8h4v4h-4zM44 8h4v4h-4z"/><path fill="#bfbfbf" d="M4 0h4v4h-4zM12 0h4v4h-4zM44 0h4v4h-4zM48 0h4v4h-4zM72 0h4v4h-4zM76 0h4v4h-4zM80 0h4v4h-4zM4 4h4v4h-4zM32 4h4v4h-4zM40 4h4v4h-4zM48 4h4v4h-4zM56 4h4v4h-4zM60 4h4v4h-4zM76 4h4v4h-4zM16 8h4v4h-4zM28 8h4v4h-4zM36 8h4v4h-4zM40 8h4v4h-4zM48 8h4v4h-4zM56 8h4v4h-4zM64 8h4v4h-4zM68 8h4v4h-4zM72 8h4v4h-4zM80 8h4v4h-4zM20 12h4v4h-4zM24 12h4v4h-4z"/><path fill="#aaaaaa" d="M0 0h4v4h-4zM64 0h4v4h-4zM68 0h4v4h-4zM12 4h4v4h-4zM28 4h4v4h-4zM36 4h4v4h-4zM80 4h4v4h-4zM0 8h4v4h-4z"/><path fill="#959595" d="M28 0h4v4h-4zM36 0h4v4h-4zM56 0h4v4h-4zM0 4h4v4h-4zM72 4h4v4h-4zM32 8h4v4h-4z"/></svg><svg class="a" style="left:462.2px;top:400.9px" width="112.0" height="16.0" viewBox="0 0 112.00 16.00"><path fill="#eaeaea" d="M56 0h4v4h-4zM68 0h4v4h-4zM8 4h4v4h-4zM56 4h4v4h-4zM0 12h4v4h-4zM4 12h4v4h-4zM12 12h4v4h-4zM16 12h4v4h-4zM36 12h4v4h-4zM44 12h4v4h-4zM56 12h4v4h-4zM84 12h4v4h-4zM104 12h4v4h-4z"/><path fill="#d4d4d4" d="M8 0h4v4h-4zM16 0h4v4h-4zM40 0h4v4h-4zM52 0h4v4h-4zM88 0h4v4h-4zM100 0h4v4h-4zM16 4h4v4h-4zM48 4h4v4h-4zM72 4h4v4h-4zM100 4h4v4h-4zM4 8h4v4h-4zM8 8h4v4h-4zM12 8h4v4h-4zM64 8h4v4h-4zM72 8h4v4h-4zM84 8h4v4h-4zM96 8h4v4h-4zM100 8h4v4h-4zM24 12h4v4h-4z"/><path fill="#bfbfbf" d="M4 0h4v4h-4zM12 0h4v4h-4zM28 0h4v4h-4zM32 0h4v4h-4zM36 0h4v4h-4zM44 0h4v4h-4zM76 0h4v4h-4zM80 0h4v4h-4zM84 0h4v4h-4zM96 0h4v4h-4zM108 0h4v4h-4zM4 4h4v4h-4zM28 4h4v4h-4zM32 4h4v4h-4zM64 4h4v4h-4zM68 4h4v4h-4zM80 4h4v4h-4zM88 4h4v4h-4zM108 4h4v4h-4zM16 8h4v4h-4zM28 8h4v4h-4zM32 8h4v4h-4zM36 8h4v4h-4zM40 8h4v4h-4zM44 8h4v4h-4zM52 8h4v4h-4zM56 8h4v4h-4zM60 8h4v4h-4zM88 8h4v4h-4zM92 8h4v4h-4zM104 8h4v4h-4zM20 12h4v4h-4z"/><path fill="#aaaaaa" d="M0 0h4v4h-4zM48 0h4v4h-4zM64 0h4v4h-4zM72 0h4v4h-4zM92 0h4v4h-4zM104 0h4v4h-4zM12 4h4v4h-4zM36 4h4v4h-4zM40 4h4v4h-4zM52 4h4v4h-4zM92 4h4v4h-4zM96 4h4v4h-4zM104 4h4v4h-4zM0 8h4v4h-4zM48 8h4v4h-4zM68 8h4v4h-4zM80 8h4v4h-4zM108 8h4v4h-4z"/><path fill="#959595" d="M0 4h4v4h-4z"/></svg><svg class="a" style="left:385.6px;top:451.7px" width="188.6" height="16.0" viewBox="0 0 188.60 16.00"><path fill="#eaeaea" d="M152.49 0h4.01v4h-4.01zM176.56 0h4.01v4h-4.01zM16.05 4h4.01v4h-4.01zM152.49 4h4.01v4h-4.01zM176.56 4h4.01v4h-4.01zM40.13 8h4.01v4h-4.01zM80.26 8h4.01v4h-4.01zM92.29 8h4.01v4h-4.01zM108.34 8h4.01v4h-4.01zM176.56 8h4.01v4h-4.01zM0 12h4.01v4h-4.01zM4.01 12h4.01v4h-4.01zM12.04 12h4.01v4h-4.01zM16.05 12h4.01v4h-4.01zM72.23 12h4.01v4h-4.01zM96.31 12h4.01v4h-4.01zM100.32 12h4.01v4h-4.01zM132.42 12h4.01v4h-4.01zM152.49 12h4.01v4h-4.01zM164.52 12h4.01v4h-4.01zM172.55 12h4.01v4h-4.01zM180.57 12h4.01v4h-4.01z"/><path fill="#d4d4d4" d="M16.05 0h4.01v4h-4.01zM36.11 0h4.01v4h-4.01zM68.22 0h4.01v4h-4.01zM84.27 0h4.01v4h-4.01zM88.28 0h4.01v4h-4.01zM136.43 0h4.01v4h-4.01zM8.03 4h4.01v4h-4.01zM40.13 4h4.01v4h-4.01zM44.14 4h4.01v4h-4.01zM76.24 4h4.01v4h-4.01zM4.01 8h4.01v4h-4.01zM8.03 8h4.01v4h-4.01zM12.04 8h4.01v4h-4.01zM68.22 8h4.01v4h-4.01zM100.32 8h4.01v4h-4.01zM132.42 8h4.01v4h-4.01zM148.47 8h4.01v4h-4.01zM164.52 8h4.01v4h-4.01zM172.55 8h4.01v4h-4.01zM24.08 12h4.01v4h-4.01zM56.18 12h4.01v4h-4.01z"/><path fill="#bfbfbf" d="M4.01 0h4.01v4h-4.01zM8.03 0h4.01v4h-4.01zM12.04 0h4.01v4h-4.01zM28.09 0h4.01v4h-4.01zM48.15 0h4.01v4h-4.01zM64.2 0h4.01v4h-4.01zM72.23 0h4.01v4h-4.01zM80.26 0h4.01v4h-4.01zM92.29 0h4.01v4h-4.01zM100.32 0h4.01v4h-4.01zM104.33 0h4.01v4h-4.01zM108.34 0h4.01v4h-4.01zM112.36 0h4.01v4h-4.01zM128.41 0h4.01v4h-4.01zM132.42 0h4.01v4h-4.01zM144.46 0h4.01v4h-4.01zM148.47 0h4.01v4h-4.01zM156.5 0h4.01v4h-4.01zM160.51 0h4.01v4h-4.01zM168.54 0h4.01v4h-4.01zM172.55 0h4.01v4h-4.01zM184.59 0h4.01v4h-4.01zM4.01 4h4.01v4h-4.01zM28.09 4h4.01v4h-4.01zM48.15 4h4.01v4h-4.01zM84.27 4h4.01v4h-4.01zM88.28 4h4.01v4h-4.01zM92.29 4h4.01v4h-4.01zM100.32 4h4.01v4h-4.01zM104.33 4h4.01v4h-4.01zM108.34 4h4.01v4h-4.01zM112.36 4h4.01v4h-4.01zM120.38 4h4.01v4h-4.01zM124.4 4h4.01v4h-4.01zM128.41 4h4.01v4h-4.01zM136.43 4h4.01v4h-4.01zM140.45 4h4.01v4h-4.01zM156.5 4h4.01v4h-4.01zM160.51 4h4.01v4h-4.01zM168.54 4h4.01v4h-4.01zM172.55 4h4.01v4h-4.01zM180.57 4h4.01v4h-4.01zM184.59 4h4.01v4h-4.01zM16.05 8h4.01v4h-4.01zM28.09 8h4.01v4h-4.01zM32.1 8h4.01v4h-4.01zM60.19 8h4.01v4h-4.01zM72.23 8h4.01v4h-4.01zM104.33 8h4.01v4h-4.01zM112.36 8h4.01v4h-4.01zM116.37 8h4.01v4h-4.01zM124.4 8h4.01v4h-4.01zM136.43 8h4.01v4h-4.01zM144.46 8h4.01v4h-4.01zM152.49 8h4.01v4h-4.01zM160.51 8h4.01v4h-4.01zM180.57 8h4.01v4h-4.01zM20.06 12h4.01v4h-4.01zM52.17 12h4.01v4h-4.01z"/><path fill="#aaaaaa" d="M0 0h4.01v4h-4.01zM40.13 0h4.01v4h-4.01zM60.19 0h4.01v4h-4.01zM76.24 0h4.01v4h-4.01zM96.31 0h4.01v4h-4.01zM116.37 0h4.01v4h-4.01zM124.4 0h4.01v4h-4.01zM140.45 0h4.01v4h-4.01zM180.57 0h4.01v4h-4.01zM12.04 4h4.01v4h-4.01zM32.1 4h4.01v4h-4.01zM36.11 4h4.01v4h-4.01zM60.19 4h4.01v4h-4.01zM64.2 4h4.01v4h-4.01zM68.22 4h4.01v4h-4.01zM80.26 4h4.01v4h-4.01zM0 8h4.01v4h-4.01zM36.11 8h4.01v4h-4.01zM76.24 8h4.01v4h-4.01zM84.27 8h4.01v4h-4.01zM88.28 8h4.01v4h-4.01zM96.31 8h4.01v4h-4.01zM120.38 8h4.01v4h-4.01zM128.41 8h4.01v4h-4.01zM140.45 8h4.01v4h-4.01zM156.5 8h4.01v4h-4.01zM168.54 8h4.01v4h-4.01zM184.59 8h4.01v4h-4.01z"/><path fill="#959595" d="M32.1 0h4.01v4h-4.01zM0 4h4.01v4h-4.01zM96.31 4h4.01v4h-4.01zM116.37 4h4.01v4h-4.01zM148.47 4h4.01v4h-4.01zM44.14 8h4.01v4h-4.01z"/></svg><svg class="a" style="left:422.6px;top:502.5px" width="151.6" height="16.0" viewBox="0 0 151.60 16.00"><path fill="#eaeaea" d="M35.91 0h3.99v4h-3.99zM71.81 0h3.99v4h-3.99zM7.98 4h3.99v4h-3.99zM15.96 4h3.99v4h-3.99zM63.83 4h3.99v4h-3.99zM143.62 4h3.99v4h-3.99zM47.87 8h3.99v4h-3.99zM79.79 8h3.99v4h-3.99zM0 12h3.99v4h-3.99zM3.99 12h3.99v4h-3.99zM11.97 12h3.99v4h-3.99zM15.96 12h3.99v4h-3.99zM63.83 12h3.99v4h-3.99zM91.76 12h3.99v4h-3.99zM111.71 12h3.99v4h-3.99zM143.62 12h3.99v4h-3.99z"/><path fill="#d4d4d4" d="M7.98 0h3.99v4h-3.99zM15.96 0h3.99v4h-3.99zM67.82 0h3.99v4h-3.99zM79.79 0h3.99v4h-3.99zM95.75 0h3.99v4h-3.99zM107.72 0h3.99v4h-3.99zM139.63 0h3.99v4h-3.99zM39.89 4h3.99v4h-3.99zM67.82 4h3.99v4h-3.99zM87.77 4h3.99v4h-3.99zM95.75 4h3.99v4h-3.99zM115.69 4h3.99v4h-3.99zM119.68 4h3.99v4h-3.99zM127.66 4h3.99v4h-3.99zM139.63 4h3.99v4h-3.99zM3.99 8h3.99v4h-3.99zM7.98 8h3.99v4h-3.99zM11.97 8h3.99v4h-3.99zM39.89 8h3.99v4h-3.99zM63.83 8h3.99v4h-3.99zM87.77 8h3.99v4h-3.99zM95.75 8h3.99v4h-3.99zM123.67 8h3.99v4h-3.99zM139.63 8h3.99v4h-3.99zM23.94 12h3.99v4h-3.99z"/><path fill="#bfbfbf" d="M3.99 0h3.99v4h-3.99zM11.97 0h3.99v4h-3.99zM27.93 0h3.99v4h-3.99zM47.87 0h3.99v4h-3.99zM59.84 0h3.99v4h-3.99zM63.83 0h3.99v4h-3.99zM75.8 0h3.99v4h-3.99zM87.77 0h3.99v4h-3.99zM91.76 0h3.99v4h-3.99zM111.71 0h3.99v4h-3.99zM143.62 0h3.99v4h-3.99zM147.61 0h3.99v4h-3.99zM3.99 4h3.99v4h-3.99zM27.93 4h3.99v4h-3.99zM35.91 4h3.99v4h-3.99zM43.88 4h3.99v4h-3.99zM47.87 4h3.99v4h-3.99zM59.84 4h3.99v4h-3.99zM71.81 4h3.99v4h-3.99zM75.8 4h3.99v4h-3.99zM83.78 4h3.99v4h-3.99zM107.72 4h3.99v4h-3.99zM123.67 4h3.99v4h-3.99zM147.61 4h3.99v4h-3.99zM15.96 8h3.99v4h-3.99zM27.93 8h3.99v4h-3.99zM31.92 8h3.99v4h-3.99zM59.84 8h3.99v4h-3.99zM67.82 8h3.99v4h-3.99zM75.8 8h3.99v4h-3.99zM83.78 8h3.99v4h-3.99zM91.76 8h3.99v4h-3.99zM103.73 8h3.99v4h-3.99zM107.72 8h3.99v4h-3.99zM111.71 8h3.99v4h-3.99zM119.68 8h3.99v4h-3.99zM127.66 8h3.99v4h-3.99zM131.65 8h3.99v4h-3.99zM135.64 8h3.99v4h-3.99zM143.62 8h3.99v4h-3.99zM19.95 12h3.99v4h-3.99zM51.86 12h3.99v4h-3.99zM55.85 12h3.99v4h-3.99z"/><path fill="#aaaaaa" d="M0 0h3.99v4h-3.99zM39.89 0h3.99v4h-3.99zM99.74 0h3.99v4h-3.99zM103.73 0h3.99v4h-3.99zM115.69 0h3.99v4h-3.99zM131.65 0h3.99v4h-3.99zM135.64 0h3.99v4h-3.99zM11.97 4h3.99v4h-3.99zM31.92 4h3.99v4h-3.99zM91.76 4h3.99v4h-3.99zM99.74 4h3.99v4h-3.99zM103.73 4h3.99v4h-3.99zM135.64 4h3.99v4h-3.99zM0 8h3.99v4h-3.99zM35.91 8h3.99v4h-3.99zM43.88 8h3.99v4h-3.99zM71.81 8h3.99v4h-3.99zM99.74 8h3.99v4h-3.99zM115.69 8h3.99v4h-3.99zM147.61 8h3.99v4h-3.99z"/><path fill="#959595" d="M31.92 0h3.99v4h-3.99zM83.78 0h3.99v4h-3.99zM123.67 0h3.99v4h-3.99zM0 4h3.99v4h-3.99zM131.65 4h3.99v4h-3.99z"/></svg><svg class="a" style="left:417.6px;top:553.3px" width="156.6" height="16.0" viewBox="0 0 156.60 16.00"><path fill="#eaeaea" d="M16.06 0h4.02v4h-4.02zM16.06 4h4.02v4h-4.02zM120.46 4h4.02v4h-4.02zM148.57 4h4.02v4h-4.02zM40.15 8h4.02v4h-4.02zM72.28 8h4.02v4h-4.02zM0 12h4.02v4h-4.02zM4.02 12h4.02v4h-4.02zM12.05 12h4.02v4h-4.02zM16.06 12h4.02v4h-4.02zM48.18 12h4.02v4h-4.02zM96.37 12h4.02v4h-4.02zM100.38 12h4.02v4h-4.02zM116.45 12h4.02v4h-4.02zM148.57 12h4.02v4h-4.02z"/><path fill="#d4d4d4" d="M36.14 0h4.02v4h-4.02zM68.26 0h4.02v4h-4.02zM100.38 0h4.02v4h-4.02zM112.43 0h4.02v4h-4.02zM8.03 4h4.02v4h-4.02zM40.15 4h4.02v4h-4.02zM44.17 4h4.02v4h-4.02zM48.18 4h4.02v4h-4.02zM84.32 4h4.02v4h-4.02zM88.34 4h4.02v4h-4.02zM92.35 4h4.02v4h-4.02zM100.38 4h4.02v4h-4.02zM124.48 4h4.02v4h-4.02zM4.02 8h4.02v4h-4.02zM8.03 8h4.02v4h-4.02zM12.05 8h4.02v4h-4.02zM100.38 8h4.02v4h-4.02zM128.49 8h4.02v4h-4.02zM144.55 8h4.02v4h-4.02zM24.09 12h4.02v4h-4.02zM56.22 12h4.02v4h-4.02z"/><path fill="#bfbfbf" d="M4.02 0h4.02v4h-4.02zM8.03 0h4.02v4h-4.02zM12.05 0h4.02v4h-4.02zM28.11 0h4.02v4h-4.02zM40.15 0h4.02v4h-4.02zM48.18 0h4.02v4h-4.02zM64.25 0h4.02v4h-4.02zM76.29 0h4.02v4h-4.02zM80.31 0h4.02v4h-4.02zM84.32 0h4.02v4h-4.02zM92.35 0h4.02v4h-4.02zM140.54 0h4.02v4h-4.02zM144.55 0h4.02v4h-4.02zM152.58 0h4.02v4h-4.02zM4.02 4h4.02v4h-4.02zM28.11 4h4.02v4h-4.02zM36.14 4h4.02v4h-4.02zM60.23 4h4.02v4h-4.02zM80.31 4h4.02v4h-4.02zM128.49 4h4.02v4h-4.02zM132.51 4h4.02v4h-4.02zM144.55 4h4.02v4h-4.02zM152.58 4h4.02v4h-4.02zM16.06 8h4.02v4h-4.02zM28.11 8h4.02v4h-4.02zM32.12 8h4.02v4h-4.02zM64.25 8h4.02v4h-4.02zM68.26 8h4.02v4h-4.02zM76.29 8h4.02v4h-4.02zM80.31 8h4.02v4h-4.02zM108.42 8h4.02v4h-4.02zM112.43 8h4.02v4h-4.02zM116.45 8h4.02v4h-4.02zM120.46 8h4.02v4h-4.02zM124.48 8h4.02v4h-4.02zM132.51 8h4.02v4h-4.02zM136.52 8h4.02v4h-4.02zM140.54 8h4.02v4h-4.02zM148.57 8h4.02v4h-4.02zM20.08 12h4.02v4h-4.02zM52.2 12h4.02v4h-4.02z"/><path fill="#aaaaaa" d="M0 0h4.02v4h-4.02zM60.23 0h4.02v4h-4.02zM72.28 0h4.02v4h-4.02zM96.37 0h4.02v4h-4.02zM104.4 0h4.02v4h-4.02zM108.42 0h4.02v4h-4.02zM116.45 0h4.02v4h-4.02zM120.46 0h4.02v4h-4.02zM136.52 0h4.02v4h-4.02zM148.57 0h4.02v4h-4.02zM12.05 4h4.02v4h-4.02zM32.12 4h4.02v4h-4.02zM68.26 4h4.02v4h-4.02zM72.28 4h4.02v4h-4.02zM76.29 4h4.02v4h-4.02zM104.4 4h4.02v4h-4.02zM108.42 4h4.02v4h-4.02zM112.43 4h4.02v4h-4.02zM136.52 4h4.02v4h-4.02zM140.54 4h4.02v4h-4.02zM0 8h4.02v4h-4.02zM60.23 8h4.02v4h-4.02zM96.37 8h4.02v4h-4.02zM104.4 8h4.02v4h-4.02zM152.58 8h4.02v4h-4.02z"/><path fill="#959595" d="M32.12 0h4.02v4h-4.02zM128.49 0h4.02v4h-4.02zM0 4h4.02v4h-4.02zM96.37 4h4.02v4h-4.02zM36.14 8h4.02v4h-4.02zM44.17 8h4.02v4h-4.02zM88.34 8h4.02v4h-4.02z"/></svg><svg class="a" style="left:434.9px;top:604.1px" width="139.3" height="16.0" viewBox="0 0 139.30 16.00"><path fill="#eaeaea" d="M43.78 0h3.98v4h-3.98zM79.6 0h3.98v4h-3.98zM99.5 0h3.98v4h-3.98zM127.36 0h3.98v4h-3.98zM7.96 4h3.98v4h-3.98zM79.6 4h3.98v4h-3.98zM83.58 8h3.98v4h-3.98zM99.5 8h3.98v4h-3.98zM0 12h3.98v4h-3.98zM3.98 12h3.98v4h-3.98zM11.94 12h3.98v4h-3.98zM15.92 12h3.98v4h-3.98zM59.7 12h3.98v4h-3.98zM75.62 12h3.98v4h-3.98zM91.54 12h3.98v4h-3.98zM111.44 12h3.98v4h-3.98zM131.34 12h3.98v4h-3.98zM135.32 12h3.98v4h-3.98z"/><path fill="#d4d4d4" d="M7.96 0h3.98v4h-3.98zM15.92 0h3.98v4h-3.98zM67.66 0h3.98v4h-3.98zM95.52 0h3.98v4h-3.98zM107.46 0h3.98v4h-3.98zM123.38 0h3.98v4h-3.98zM15.92 4h3.98v4h-3.98zM83.58 4h3.98v4h-3.98zM95.52 4h3.98v4h-3.98zM135.32 4h3.98v4h-3.98zM3.98 8h3.98v4h-3.98zM7.96 8h3.98v4h-3.98zM11.94 8h3.98v4h-3.98zM39.8 8h3.98v4h-3.98zM47.76 8h3.98v4h-3.98zM63.68 8h3.98v4h-3.98zM75.62 8h3.98v4h-3.98zM79.6 8h3.98v4h-3.98zM111.44 8h3.98v4h-3.98zM123.38 8h3.98v4h-3.98zM127.36 8h3.98v4h-3.98zM135.32 8h3.98v4h-3.98zM23.88 12h3.98v4h-3.98z"/><path fill="#bfbfbf" d="M3.98 0h3.98v4h-3.98zM11.94 0h3.98v4h-3.98zM27.86 0h3.98v4h-3.98zM47.76 0h3.98v4h-3.98zM59.7 0h3.98v4h-3.98zM63.68 0h3.98v4h-3.98zM75.62 0h3.98v4h-3.98zM91.54 0h3.98v4h-3.98zM103.48 0h3.98v4h-3.98zM111.44 0h3.98v4h-3.98zM115.42 0h3.98v4h-3.98zM119.4 0h3.98v4h-3.98zM135.32 0h3.98v4h-3.98zM3.98 4h3.98v4h-3.98zM27.86 4h3.98v4h-3.98zM31.84 4h3.98v4h-3.98zM35.82 4h3.98v4h-3.98zM39.8 4h3.98v4h-3.98zM43.78 4h3.98v4h-3.98zM47.76 4h3.98v4h-3.98zM59.7 4h3.98v4h-3.98zM67.66 4h3.98v4h-3.98zM71.64 4h3.98v4h-3.98zM87.56 4h3.98v4h-3.98zM107.46 4h3.98v4h-3.98zM115.42 4h3.98v4h-3.98zM15.92 8h3.98v4h-3.98zM27.86 8h3.98v4h-3.98zM31.84 8h3.98v4h-3.98zM35.82 8h3.98v4h-3.98zM59.7 8h3.98v4h-3.98zM67.66 8h3.98v4h-3.98zM91.54 8h3.98v4h-3.98zM95.52 8h3.98v4h-3.98zM103.48 8h3.98v4h-3.98zM107.46 8h3.98v4h-3.98zM115.42 8h3.98v4h-3.98zM119.4 8h3.98v4h-3.98zM19.9 12h3.98v4h-3.98zM51.74 12h3.98v4h-3.98zM55.72 12h3.98v4h-3.98z"/><path fill="#aaaaaa" d="M0 0h3.98v4h-3.98zM39.8 0h3.98v4h-3.98zM71.64 0h3.98v4h-3.98zM87.56 0h3.98v4h-3.98zM131.34 0h3.98v4h-3.98zM11.94 4h3.98v4h-3.98zM99.5 4h3.98v4h-3.98zM119.4 4h3.98v4h-3.98zM123.38 4h3.98v4h-3.98zM0 8h3.98v4h-3.98zM43.78 8h3.98v4h-3.98zM71.64 8h3.98v4h-3.98zM87.56 8h3.98v4h-3.98zM131.34 8h3.98v4h-3.98z"/><path fill="#959595" d="M31.84 0h3.98v4h-3.98zM0 4h3.98v4h-3.98zM103.48 4h3.98v4h-3.98zM131.34 4h3.98v4h-3.98z"/></svg><svg class="a" style="left:381.6px;top:654.9px" width="192.6" height="16.0" viewBox="0 0 192.60 16.00"><path fill="#eaeaea" d="M16.05 0h4.01v4h-4.01zM48.15 0h4.01v4h-4.01zM80.25 0h4.01v4h-4.01zM96.3 0h4.01v4h-4.01zM128.4 0h4.01v4h-4.01zM16.05 4h4.01v4h-4.01zM76.24 4h4.01v4h-4.01zM96.3 4h4.01v4h-4.01zM32.1 8h4.01v4h-4.01zM76.24 8h4.01v4h-4.01zM132.41 8h4.01v4h-4.01zM140.44 8h4.01v4h-4.01zM164.51 8h4.01v4h-4.01zM0 12h4.01v4h-4.01zM4.01 12h4.01v4h-4.01zM12.04 12h4.01v4h-4.01zM16.05 12h4.01v4h-4.01zM24.08 12h4.01v4h-4.01zM56.18 12h4.01v4h-4.01zM72.23 12h4.01v4h-4.01zM84.26 12h4.01v4h-4.01zM96.3 12h4.01v4h-4.01zM104.33 12h4.01v4h-4.01zM160.5 12h4.01v4h-4.01zM176.55 12h4.01v4h-4.01z"/><path fill="#d4d4d4" d="M24.08 0h4.01v4h-4.01zM32.1 0h4.01v4h-4.01zM36.11 0h4.01v4h-4.01zM44.14 0h4.01v4h-4.01zM64.2 0h4.01v4h-4.01zM108.34 0h4.01v4h-4.01zM180.56 0h4.01v4h-4.01zM4.01 4h4.01v4h-4.01zM8.03 4h4.01v4h-4.01zM24.08 4h4.01v4h-4.01zM80.25 4h4.01v4h-4.01zM100.31 4h4.01v4h-4.01zM108.34 4h4.01v4h-4.01zM120.38 4h4.01v4h-4.01zM128.4 4h4.01v4h-4.01zM140.44 4h4.01v4h-4.01zM180.56 4h4.01v4h-4.01zM4.01 8h4.01v4h-4.01zM8.03 8h4.01v4h-4.01zM12.04 8h4.01v4h-4.01zM16.05 8h4.01v4h-4.01zM24.08 8h4.01v4h-4.01zM40.12 8h4.01v4h-4.01zM60.19 8h4.01v4h-4.01zM80.25 8h4.01v4h-4.01zM100.31 8h4.01v4h-4.01zM104.33 8h4.01v4h-4.01zM124.39 8h4.01v4h-4.01zM152.47 8h4.01v4h-4.01zM160.5 8h4.01v4h-4.01zM176.55 8h4.01v4h-4.01zM180.56 8h4.01v4h-4.01zM184.58 8h4.01v4h-4.01zM48.15 12h4.01v4h-4.01z"/><path fill="#bfbfbf" d="M4.01 0h4.01v4h-4.01zM8.03 0h4.01v4h-4.01zM12.04 0h4.01v4h-4.01zM28.09 0h4.01v4h-4.01zM40.12 0h4.01v4h-4.01zM56.18 0h4.01v4h-4.01zM60.19 0h4.01v4h-4.01zM72.23 0h4.01v4h-4.01zM88.28 0h4.01v4h-4.01zM92.29 0h4.01v4h-4.01zM100.31 0h4.01v4h-4.01zM104.33 0h4.01v4h-4.01zM136.43 0h4.01v4h-4.01zM144.45 0h4.01v4h-4.01zM148.46 0h4.01v4h-4.01zM152.47 0h4.01v4h-4.01zM156.49 0h4.01v4h-4.01zM164.51 0h4.01v4h-4.01zM172.54 0h4.01v4h-4.01zM176.55 0h4.01v4h-4.01zM188.59 0h4.01v4h-4.01zM28.09 4h4.01v4h-4.01zM32.1 4h4.01v4h-4.01zM36.11 4h4.01v4h-4.01zM40.12 4h4.01v4h-4.01zM44.14 4h4.01v4h-4.01zM56.18 4h4.01v4h-4.01zM64.2 4h4.01v4h-4.01zM68.21 4h4.01v4h-4.01zM88.28 4h4.01v4h-4.01zM92.29 4h4.01v4h-4.01zM124.39 4h4.01v4h-4.01zM136.43 4h4.01v4h-4.01zM144.45 4h4.01v4h-4.01zM148.46 4h4.01v4h-4.01zM152.47 4h4.01v4h-4.01zM156.49 4h4.01v4h-4.01zM168.53 4h4.01v4h-4.01zM172.54 4h4.01v4h-4.01zM176.55 4h4.01v4h-4.01zM28.09 8h4.01v4h-4.01zM44.14 8h4.01v4h-4.01zM56.18 8h4.01v4h-4.01zM64.2 8h4.01v4h-4.01zM72.23 8h4.01v4h-4.01zM84.26 8h4.01v4h-4.01zM88.28 8h4.01v4h-4.01zM92.29 8h4.01v4h-4.01zM96.3 8h4.01v4h-4.01zM108.34 8h4.01v4h-4.01zM120.38 8h4.01v4h-4.01zM136.43 8h4.01v4h-4.01zM144.45 8h4.01v4h-4.01zM156.49 8h4.01v4h-4.01zM168.53 8h4.01v4h-4.01zM172.54 8h4.01v4h-4.01zM188.59 8h4.01v4h-4.01zM20.06 12h4.01v4h-4.01zM52.16 12h4.01v4h-4.01z"/><path fill="#aaaaaa" d="M0 0h4.01v4h-4.01zM68.21 0h4.01v4h-4.01zM84.26 0h4.01v4h-4.01zM112.35 0h4.01v4h-4.01zM116.36 0h4.01v4h-4.01zM124.39 0h4.01v4h-4.01zM132.41 0h4.01v4h-4.01zM168.53 0h4.01v4h-4.01zM184.58 0h4.01v4h-4.01zM12.04 4h4.01v4h-4.01zM84.26 4h4.01v4h-4.01zM104.33 4h4.01v4h-4.01zM112.35 4h4.01v4h-4.01zM116.36 4h4.01v4h-4.01zM132.41 4h4.01v4h-4.01zM184.58 4h4.01v4h-4.01zM188.59 4h4.01v4h-4.01zM0 8h4.01v4h-4.01zM36.11 8h4.01v4h-4.01zM68.21 8h4.01v4h-4.01zM112.35 8h4.01v4h-4.01zM116.36 8h4.01v4h-4.01zM128.4 8h4.01v4h-4.01z"/><path fill="#959595" d="M0 4h4.01v4h-4.01z"/></svg><svg class="a" style="left:381.6px;top:705.7px" width="192.6" height="16.0" viewBox="0 0 192.60 16.00"><path fill="#eaeaea" d="M16.05 0h4.01v4h-4.01zM24.08 0h4.01v4h-4.01zM96.3 0h4.01v4h-4.01zM124.39 0h4.01v4h-4.01zM156.49 0h4.01v4h-4.01zM16.05 4h4.01v4h-4.01zM24.08 4h4.01v4h-4.01zM48.15 4h4.01v4h-4.01zM96.3 4h4.01v4h-4.01zM188.59 4h4.01v4h-4.01zM24.08 8h4.01v4h-4.01zM80.25 8h4.01v4h-4.01zM144.45 8h4.01v4h-4.01zM188.59 8h4.01v4h-4.01zM0 12h4.01v4h-4.01zM4.01 12h4.01v4h-4.01zM12.04 12h4.01v4h-4.01zM16.05 12h4.01v4h-4.01zM48.15 12h4.01v4h-4.01zM60.19 12h4.01v4h-4.01zM72.23 12h4.01v4h-4.01zM96.3 12h4.01v4h-4.01zM108.34 12h4.01v4h-4.01zM116.36 12h4.01v4h-4.01zM176.55 12h4.01v4h-4.01z"/><path fill="#d4d4d4" d="M36.11 0h4.01v4h-4.01zM68.21 0h4.01v4h-4.01zM112.35 0h4.01v4h-4.01zM8.03 4h4.01v4h-4.01zM40.12 4h4.01v4h-4.01zM44.14 4h4.01v4h-4.01zM64.2 4h4.01v4h-4.01zM80.25 4h4.01v4h-4.01zM104.33 4h4.01v4h-4.01zM112.35 4h4.01v4h-4.01zM144.45 4h4.01v4h-4.01zM184.58 4h4.01v4h-4.01zM4.01 8h4.01v4h-4.01zM8.03 8h4.01v4h-4.01zM12.04 8h4.01v4h-4.01zM32.1 8h4.01v4h-4.01zM72.23 8h4.01v4h-4.01zM76.24 8h4.01v4h-4.01zM104.33 8h4.01v4h-4.01zM108.34 8h4.01v4h-4.01zM156.49 8h4.01v4h-4.01zM176.55 8h4.01v4h-4.01zM184.58 8h4.01v4h-4.01zM24.08 12h4.01v4h-4.01zM56.18 12h4.01v4h-4.01z"/><path fill="#bfbfbf" d="M4.01 0h4.01v4h-4.01zM8.03 0h4.01v4h-4.01zM12.04 0h4.01v4h-4.01zM28.09 0h4.01v4h-4.01zM40.12 0h4.01v4h-4.01zM48.15 0h4.01v4h-4.01zM64.2 0h4.01v4h-4.01zM72.23 0h4.01v4h-4.01zM76.24 0h4.01v4h-4.01zM92.29 0h4.01v4h-4.01zM100.31 0h4.01v4h-4.01zM104.33 0h4.01v4h-4.01zM108.34 0h4.01v4h-4.01zM120.38 0h4.01v4h-4.01zM128.4 0h4.01v4h-4.01zM132.41 0h4.01v4h-4.01zM136.43 0h4.01v4h-4.01zM140.44 0h4.01v4h-4.01zM148.46 0h4.01v4h-4.01zM152.47 0h4.01v4h-4.01zM160.5 0h4.01v4h-4.01zM172.54 0h4.01v4h-4.01zM180.56 0h4.01v4h-4.01zM188.59 0h4.01v4h-4.01zM4.01 4h4.01v4h-4.01zM28.09 4h4.01v4h-4.01zM36.11 4h4.01v4h-4.01zM60.19 4h4.01v4h-4.01zM92.29 4h4.01v4h-4.01zM100.31 4h4.01v4h-4.01zM120.38 4h4.01v4h-4.01zM124.39 4h4.01v4h-4.01zM128.4 4h4.01v4h-4.01zM132.41 4h4.01v4h-4.01zM136.43 4h4.01v4h-4.01zM140.44 4h4.01v4h-4.01zM148.46 4h4.01v4h-4.01zM152.47 4h4.01v4h-4.01zM156.49 4h4.01v4h-4.01zM160.5 4h4.01v4h-4.01zM172.54 4h4.01v4h-4.01zM180.56 4h4.01v4h-4.01zM16.05 8h4.01v4h-4.01zM28.09 8h4.01v4h-4.01zM68.21 8h4.01v4h-4.01zM88.28 8h4.01v4h-4.01zM92.29 8h4.01v4h-4.01zM96.3 8h4.01v4h-4.01zM100.31 8h4.01v4h-4.01zM116.36 8h4.01v4h-4.01zM128.4 8h4.01v4h-4.01zM140.44 8h4.01v4h-4.01zM148.46 8h4.01v4h-4.01zM152.47 8h4.01v4h-4.01zM164.51 8h4.01v4h-4.01zM172.54 8h4.01v4h-4.01zM180.56 8h4.01v4h-4.01zM20.06 12h4.01v4h-4.01zM52.16 12h4.01v4h-4.01z"/><path fill="#aaaaaa" d="M0 0h4.01v4h-4.01zM32.1 0h4.01v4h-4.01zM60.19 0h4.01v4h-4.01zM84.26 0h4.01v4h-4.01zM88.28 0h4.01v4h-4.01zM116.36 0h4.01v4h-4.01zM164.51 0h4.01v4h-4.01zM168.53 0h4.01v4h-4.01zM184.58 0h4.01v4h-4.01zM12.04 4h4.01v4h-4.01zM32.1 4h4.01v4h-4.01zM68.21 4h4.01v4h-4.01zM84.26 4h4.01v4h-4.01zM88.28 4h4.01v4h-4.01zM108.34 4h4.01v4h-4.01zM116.36 4h4.01v4h-4.01zM164.51 4h4.01v4h-4.01zM168.53 4h4.01v4h-4.01zM0 8h4.01v4h-4.01zM60.19 8h4.01v4h-4.01zM64.2 8h4.01v4h-4.01zM84.26 8h4.01v4h-4.01zM112.35 8h4.01v4h-4.01zM120.38 8h4.01v4h-4.01zM124.39 8h4.01v4h-4.01zM132.41 8h4.01v4h-4.01zM160.5 8h4.01v4h-4.01z"/><path fill="#959595" d="M0 4h4.01v4h-4.01zM36.11 8h4.01v4h-4.01zM44.14 8h4.01v4h-4.01z"/></svg><svg class="a" style="left:462.2px;top:756.5px" width="112.0" height="16.0" viewBox="0 0 112.00 16.00"><path fill="#eaeaea" d="M36 0h4v4h-4zM8 4h4v4h-4zM16 4h4v4h-4zM40 8h4v4h-4zM80 8h4v4h-4zM88 8h4v4h-4zM104 8h4v4h-4zM0 12h4v4h-4zM4 12h4v4h-4zM12 12h4v4h-4zM16 12h4v4h-4zM64 12h4v4h-4zM76 12h4v4h-4zM96 12h4v4h-4z"/><path fill="#d4d4d4" d="M16 0h4v4h-4zM68 0h4v4h-4zM40 4h4v4h-4zM68 4h4v4h-4zM72 4h4v4h-4zM4 8h4v4h-4zM8 8h4v4h-4zM12 8h4v4h-4zM64 8h4v4h-4zM68 8h4v4h-4zM96 8h4v4h-4zM24 12h4v4h-4z"/><path fill="#bfbfbf" d="M4 0h4v4h-4zM8 0h4v4h-4zM12 0h4v4h-4zM28 0h4v4h-4zM48 0h4v4h-4zM60 0h4v4h-4zM64 0h4v4h-4zM80 0h4v4h-4zM88 0h4v4h-4zM96 0h4v4h-4zM100 0h4v4h-4zM104 0h4v4h-4zM108 0h4v4h-4zM4 4h4v4h-4zM28 4h4v4h-4zM36 4h4v4h-4zM44 4h4v4h-4zM48 4h4v4h-4zM60 4h4v4h-4zM80 4h4v4h-4zM84 4h4v4h-4zM88 4h4v4h-4zM96 4h4v4h-4zM100 4h4v4h-4zM16 8h4v4h-4zM28 8h4v4h-4zM32 8h4v4h-4zM60 8h4v4h-4zM76 8h4v4h-4zM100 8h4v4h-4zM108 8h4v4h-4zM20 12h4v4h-4zM52 12h4v4h-4zM56 12h4v4h-4z"/><path fill="#aaaaaa" d="M0 0h4v4h-4zM40 0h4v4h-4zM72 0h4v4h-4zM76 0h4v4h-4zM92 0h4v4h-4zM12 4h4v4h-4zM32 4h4v4h-4zM92 4h4v4h-4zM104 4h4v4h-4zM108 4h4v4h-4zM0 8h4v4h-4zM36 8h4v4h-4zM72 8h4v4h-4zM84 8h4v4h-4zM92 8h4v4h-4z"/><path fill="#959595" d="M32 0h4v4h-4zM0 4h4v4h-4zM44 8h4v4h-4z"/></svg><svg class="a" style="left:420.2px;top:807.3px" width="154.0" height="16.0" viewBox="0 0 154.00 16.00"><path fill="#eaeaea" d="M16.21 0h4.05v4h-4.05zM44.58 0h4.05v4h-4.05zM48.63 0h4.05v4h-4.05zM113.47 0h4.05v4h-4.05zM137.79 0h4.05v4h-4.05zM16.21 4h4.05v4h-4.05zM113.47 4h4.05v4h-4.05zM32.42 8h4.05v4h-4.05zM0 12h4.05v4h-4.05zM4.05 12h4.05v4h-4.05zM12.16 12h4.05v4h-4.05zM16.21 12h4.05v4h-4.05zM24.32 12h4.05v4h-4.05zM56.74 12h4.05v4h-4.05zM60.79 12h4.05v4h-4.05zM101.32 12h4.05v4h-4.05zM113.47 12h4.05v4h-4.05zM121.58 12h4.05v4h-4.05zM145.89 12h4.05v4h-4.05z"/><path fill="#d4d4d4" d="M24.32 0h4.05v4h-4.05zM36.47 0h4.05v4h-4.05zM56.74 0h4.05v4h-4.05zM68.89 0h4.05v4h-4.05zM89.16 0h4.05v4h-4.05zM97.26 0h4.05v4h-4.05zM125.63 0h4.05v4h-4.05zM141.84 0h4.05v4h-4.05zM4.05 4h4.05v4h-4.05zM8.11 4h4.05v4h-4.05zM24.32 4h4.05v4h-4.05zM117.53 4h4.05v4h-4.05zM125.63 4h4.05v4h-4.05zM4.05 8h4.05v4h-4.05zM8.11 8h4.05v4h-4.05zM12.16 8h4.05v4h-4.05zM16.21 8h4.05v4h-4.05zM24.32 8h4.05v4h-4.05zM40.53 8h4.05v4h-4.05zM56.74 8h4.05v4h-4.05zM60.79 8h4.05v4h-4.05zM89.16 8h4.05v4h-4.05zM101.32 8h4.05v4h-4.05zM117.53 8h4.05v4h-4.05zM121.58 8h4.05v4h-4.05zM48.63 12h4.05v4h-4.05z"/><path fill="#bfbfbf" d="M4.05 0h4.05v4h-4.05zM8.11 0h4.05v4h-4.05zM12.16 0h4.05v4h-4.05zM28.37 0h4.05v4h-4.05zM32.42 0h4.05v4h-4.05zM40.53 0h4.05v4h-4.05zM60.79 0h4.05v4h-4.05zM64.84 0h4.05v4h-4.05zM72.95 0h4.05v4h-4.05zM77 0h4.05v4h-4.05zM81.05 0h4.05v4h-4.05zM85.11 0h4.05v4h-4.05zM93.21 0h4.05v4h-4.05zM101.32 0h4.05v4h-4.05zM105.37 0h4.05v4h-4.05zM109.42 0h4.05v4h-4.05zM117.53 0h4.05v4h-4.05zM121.58 0h4.05v4h-4.05zM129.68 0h4.05v4h-4.05zM145.89 0h4.05v4h-4.05zM149.95 0h4.05v4h-4.05zM28.37 4h4.05v4h-4.05zM32.42 4h4.05v4h-4.05zM36.47 4h4.05v4h-4.05zM40.53 4h4.05v4h-4.05zM44.58 4h4.05v4h-4.05zM56.74 4h4.05v4h-4.05zM68.89 4h4.05v4h-4.05zM72.95 4h4.05v4h-4.05zM77 4h4.05v4h-4.05zM81.05 4h4.05v4h-4.05zM85.11 4h4.05v4h-4.05zM97.26 4h4.05v4h-4.05zM105.37 4h4.05v4h-4.05zM109.42 4h4.05v4h-4.05zM129.68 4h4.05v4h-4.05zM133.74 4h4.05v4h-4.05zM137.79 4h4.05v4h-4.05zM149.95 4h4.05v4h-4.05zM28.37 8h4.05v4h-4.05zM44.58 8h4.05v4h-4.05zM64.84 8h4.05v4h-4.05zM93.21 8h4.05v4h-4.05zM97.26 8h4.05v4h-4.05zM105.37 8h4.05v4h-4.05zM109.42 8h4.05v4h-4.05zM113.47 8h4.05v4h-4.05zM125.63 8h4.05v4h-4.05zM129.68 8h4.05v4h-4.05zM133.74 8h4.05v4h-4.05zM141.84 8h4.05v4h-4.05zM145.89 8h4.05v4h-4.05zM20.26 12h4.05v4h-4.05zM52.68 12h4.05v4h-4.05z"/><path fill="#aaaaaa" d="M0 0h4.05v4h-4.05zM12.16 4h4.05v4h-4.05zM121.58 4h4.05v4h-4.05zM141.84 4h4.05v4h-4.05zM0 8h4.05v4h-4.05zM68.89 8h4.05v4h-4.05zM72.95 8h4.05v4h-4.05zM77 8h4.05v4h-4.05zM137.79 8h4.05v4h-4.05zM149.95 8h4.05v4h-4.05z"/><path fill="#959595" d="M133.74 0h4.05v4h-4.05zM0 4h4.05v4h-4.05zM89.16 4h4.05v4h-4.05zM93.21 4h4.05v4h-4.05zM36.47 8h4.05v4h-4.05z"/></svg><svg class="a" style="left:446.2px;top:858.1px" width="128.0" height="16.0" viewBox="0 0 128.00 16.00"><path fill="#eaeaea" d="M16 0h4v4h-4zM24 0h4v4h-4zM96 0h4v4h-4zM104 0h4v4h-4zM16 4h4v4h-4zM24 4h4v4h-4zM48 4h4v4h-4zM96 4h4v4h-4zM24 8h4v4h-4zM0 12h4v4h-4zM4 12h4v4h-4zM12 12h4v4h-4zM16 12h4v4h-4zM48 12h4v4h-4zM60 12h4v4h-4zM72 12h4v4h-4zM80 12h4v4h-4zM120 12h4v4h-4z"/><path fill="#d4d4d4" d="M116 0h4v4h-4zM8 4h4v4h-4zM40 4h4v4h-4zM44 4h4v4h-4zM116 4h4v4h-4zM4 8h4v4h-4zM8 8h4v4h-4zM12 8h4v4h-4zM32 8h4v4h-4zM72 8h4v4h-4zM92 8h4v4h-4zM112 8h4v4h-4zM116 8h4v4h-4zM24 12h4v4h-4zM56 12h4v4h-4z"/><path fill="#bfbfbf" d="M4 0h4v4h-4zM8 0h4v4h-4zM12 0h4v4h-4zM28 0h4v4h-4zM36 0h4v4h-4zM40 0h4v4h-4zM48 0h4v4h-4zM64 0h4v4h-4zM68 0h4v4h-4zM76 0h4v4h-4zM84 0h4v4h-4zM88 0h4v4h-4zM92 0h4v4h-4zM100 0h4v4h-4zM112 0h4v4h-4zM124 0h4v4h-4zM4 4h4v4h-4zM28 4h4v4h-4zM68 4h4v4h-4zM76 4h4v4h-4zM80 4h4v4h-4zM84 4h4v4h-4zM88 4h4v4h-4zM100 4h4v4h-4zM104 4h4v4h-4zM120 4h4v4h-4zM124 4h4v4h-4zM16 8h4v4h-4zM28 8h4v4h-4zM68 8h4v4h-4zM76 8h4v4h-4zM80 8h4v4h-4zM88 8h4v4h-4zM100 8h4v4h-4zM108 8h4v4h-4zM120 8h4v4h-4zM20 12h4v4h-4zM52 12h4v4h-4z"/><path fill="#aaaaaa" d="M0 0h4v4h-4zM32 0h4v4h-4zM80 0h4v4h-4zM108 0h4v4h-4zM120 0h4v4h-4zM12 4h4v4h-4zM32 4h4v4h-4zM36 4h4v4h-4zM64 4h4v4h-4zM92 4h4v4h-4zM108 4h4v4h-4zM112 4h4v4h-4zM0 8h4v4h-4zM60 8h4v4h-4zM64 8h4v4h-4zM84 8h4v4h-4zM96 8h4v4h-4zM104 8h4v4h-4zM124 8h4v4h-4z"/><path fill="#959595" d="M60 0h4v4h-4zM0 4h4v4h-4zM60 4h4v4h-4zM36 8h4v4h-4zM44 8h4v4h-4z"/></svg><svg class="a" style="left:430.2px;top:909.0px" width="144.0" height="16.0" viewBox="0 0 144.00 16.00"><path fill="#eaeaea" d="M96 0h4v4h-4zM124 0h4v4h-4zM16 4h4v4h-4zM68 4h4v4h-4zM96 4h4v4h-4zM124 4h4v4h-4zM40 8h4v4h-4zM96 8h4v4h-4zM0 12h4v4h-4zM4 12h4v4h-4zM12 12h4v4h-4zM16 12h4v4h-4zM84 12h4v4h-4zM92 12h4v4h-4zM112 12h4v4h-4zM136 12h4v4h-4zM140 12h4v4h-4z"/><path fill="#d4d4d4" d="M16 0h4v4h-4zM36 0h4v4h-4zM132 0h4v4h-4zM8 4h4v4h-4zM40 4h4v4h-4zM44 4h4v4h-4zM76 4h4v4h-4zM116 4h4v4h-4zM140 4h4v4h-4zM4 8h4v4h-4zM8 8h4v4h-4zM12 8h4v4h-4zM72 8h4v4h-4zM92 8h4v4h-4zM112 8h4v4h-4zM120 8h4v4h-4zM140 8h4v4h-4zM24 12h4v4h-4zM56 12h4v4h-4z"/><path fill="#bfbfbf" d="M4 0h4v4h-4zM8 0h4v4h-4zM12 0h4v4h-4zM28 0h4v4h-4zM48 0h4v4h-4zM84 0h4v4h-4zM88 0h4v4h-4zM92 0h4v4h-4zM108 0h4v4h-4zM140 0h4v4h-4zM4 4h4v4h-4zM28 4h4v4h-4zM36 4h4v4h-4zM48 4h4v4h-4zM72 4h4v4h-4zM80 4h4v4h-4zM88 4h4v4h-4zM92 4h4v4h-4zM108 4h4v4h-4zM128 4h4v4h-4zM16 8h4v4h-4zM28 8h4v4h-4zM32 8h4v4h-4zM64 8h4v4h-4zM76 8h4v4h-4zM80 8h4v4h-4zM84 8h4v4h-4zM100 8h4v4h-4zM108 8h4v4h-4zM124 8h4v4h-4zM128 8h4v4h-4zM20 12h4v4h-4zM52 12h4v4h-4z"/><path fill="#aaaaaa" d="M0 0h4v4h-4zM40 0h4v4h-4zM60 0h4v4h-4zM64 0h4v4h-4zM80 0h4v4h-4zM100 0h4v4h-4zM104 0h4v4h-4zM12 4h4v4h-4zM32 4h4v4h-4zM60 4h4v4h-4zM64 4h4v4h-4zM84 4h4v4h-4zM104 4h4v4h-4zM120 4h4v4h-4zM0 8h4v4h-4zM60 8h4v4h-4zM68 8h4v4h-4zM88 8h4v4h-4zM116 8h4v4h-4zM136 8h4v4h-4z"/><path fill="#959595" d="M32 0h4v4h-4zM72 0h4v4h-4zM120 0h4v4h-4zM128 0h4v4h-4zM136 0h4v4h-4zM0 4h4v4h-4zM100 4h4v4h-4zM136 4h4v4h-4zM36 8h4v4h-4zM44 8h4v4h-4z"/></svg><svg class="a" style="left:474.2px;top:959.8px" width="100.0" height="16.0" viewBox="0 0 100.00 16.00"><path fill="#eaeaea" d="M36 0h4v4h-4zM56 0h4v4h-4zM8 4h4v4h-4zM16 4h4v4h-4zM96 4h4v4h-4zM0 12h4v4h-4zM4 12h4v4h-4zM12 12h4v4h-4zM16 12h4v4h-4zM32 12h4v4h-4zM40 12h4v4h-4zM44 12h4v4h-4zM84 12h4v4h-4z"/><path fill="#d4d4d4" d="M16 0h4v4h-4zM76 0h4v4h-4zM88 0h4v4h-4zM32 4h4v4h-4zM36 4h4v4h-4zM44 4h4v4h-4zM56 4h4v4h-4zM80 4h4v4h-4zM4 8h4v4h-4zM8 8h4v4h-4zM12 8h4v4h-4zM32 8h4v4h-4zM44 8h4v4h-4zM52 8h4v4h-4zM60 8h4v4h-4zM72 8h4v4h-4zM88 8h4v4h-4zM24 12h4v4h-4z"/><path fill="#bfbfbf" d="M4 0h4v4h-4zM8 0h4v4h-4zM12 0h4v4h-4zM32 0h4v4h-4zM44 0h4v4h-4zM68 0h4v4h-4zM72 0h4v4h-4zM84 0h4v4h-4zM92 0h4v4h-4zM96 0h4v4h-4zM4 4h4v4h-4zM28 4h4v4h-4zM48 4h4v4h-4zM52 4h4v4h-4zM68 4h4v4h-4zM72 4h4v4h-4zM76 4h4v4h-4zM88 4h4v4h-4zM16 8h4v4h-4zM36 8h4v4h-4zM48 8h4v4h-4zM64 8h4v4h-4zM68 8h4v4h-4zM76 8h4v4h-4zM84 8h4v4h-4zM92 8h4v4h-4zM96 8h4v4h-4zM20 12h4v4h-4z"/><path fill="#aaaaaa" d="M0 0h4v4h-4zM28 0h4v4h-4zM40 0h4v4h-4zM52 0h4v4h-4zM60 0h4v4h-4zM64 0h4v4h-4zM80 0h4v4h-4zM12 4h4v4h-4zM60 4h4v4h-4zM64 4h4v4h-4zM92 4h4v4h-4zM0 8h4v4h-4zM28 8h4v4h-4zM40 8h4v4h-4zM56 8h4v4h-4zM80 8h4v4h-4z"/><path fill="#959595" d="M0 4h4v4h-4zM40 4h4v4h-4z"/></svg><svg class="a" style="left:390.2px;top:1010.6px" width="184.0" height="16.0" viewBox="0 0 184.00 16.00"><path fill="#eaeaea" d="M8 4h4v4h-4zM16 4h4v4h-4zM76 4h4v4h-4zM176 4h4v4h-4zM40 8h4v4h-4zM84 8h4v4h-4zM92 8h4v4h-4zM96 8h4v4h-4zM0 12h4v4h-4zM4 12h4v4h-4zM12 12h4v4h-4zM16 12h4v4h-4zM28 12h4v4h-4zM32 12h4v4h-4zM60 12h4v4h-4zM72 12h4v4h-4zM80 12h4v4h-4zM88 12h4v4h-4zM104 12h4v4h-4zM116 12h4v4h-4zM144 12h4v4h-4zM176 12h4v4h-4z"/><path fill="#d4d4d4" d="M8 0h4v4h-4zM16 0h4v4h-4zM40 0h4v4h-4zM56 0h4v4h-4zM76 0h4v4h-4zM80 0h4v4h-4zM128 0h4v4h-4zM140 0h4v4h-4zM172 0h4v4h-4zM80 4h4v4h-4zM96 4h4v4h-4zM148 4h4v4h-4zM152 4h4v4h-4zM160 4h4v4h-4zM172 4h4v4h-4zM4 8h4v4h-4zM8 8h4v4h-4zM12 8h4v4h-4zM32 8h4v4h-4zM56 8h4v4h-4zM72 8h4v4h-4zM76 8h4v4h-4zM104 8h4v4h-4zM116 8h4v4h-4zM120 8h4v4h-4zM156 8h4v4h-4zM172 8h4v4h-4zM24 12h4v4h-4z"/><path fill="#bfbfbf" d="M4 0h4v4h-4zM12 0h4v4h-4zM32 0h4v4h-4zM36 0h4v4h-4zM44 0h4v4h-4zM52 0h4v4h-4zM64 0h4v4h-4zM68 0h4v4h-4zM72 0h4v4h-4zM88 0h4v4h-4zM100 0h4v4h-4zM104 0h4v4h-4zM108 0h4v4h-4zM112 0h4v4h-4zM144 0h4v4h-4zM176 0h4v4h-4zM180 0h4v4h-4zM4 4h4v4h-4zM32 4h4v4h-4zM36 4h4v4h-4zM40 4h4v4h-4zM44 4h4v4h-4zM48 4h4v4h-4zM72 4h4v4h-4zM88 4h4v4h-4zM100 4h4v4h-4zM108 4h4v4h-4zM112 4h4v4h-4zM120 4h4v4h-4zM124 4h4v4h-4zM140 4h4v4h-4zM156 4h4v4h-4zM180 4h4v4h-4zM16 8h4v4h-4zM36 8h4v4h-4zM52 8h4v4h-4zM68 8h4v4h-4zM100 8h4v4h-4zM108 8h4v4h-4zM112 8h4v4h-4zM124 8h4v4h-4zM140 8h4v4h-4zM144 8h4v4h-4zM152 8h4v4h-4zM160 8h4v4h-4zM164 8h4v4h-4zM168 8h4v4h-4zM176 8h4v4h-4zM20 12h4v4h-4z"/><path fill="#aaaaaa" d="M0 0h4v4h-4zM28 0h4v4h-4zM48 0h4v4h-4zM60 0h4v4h-4zM120 0h4v4h-4zM132 0h4v4h-4zM136 0h4v4h-4zM148 0h4v4h-4zM164 0h4v4h-4zM168 0h4v4h-4zM12 4h4v4h-4zM56 4h4v4h-4zM64 4h4v4h-4zM68 4h4v4h-4zM132 4h4v4h-4zM136 4h4v4h-4zM168 4h4v4h-4zM0 8h4v4h-4zM28 8h4v4h-4zM44 8h4v4h-4zM48 8h4v4h-4zM60 8h4v4h-4zM64 8h4v4h-4zM80 8h4v4h-4zM88 8h4v4h-4zM132 8h4v4h-4zM136 8h4v4h-4zM148 8h4v4h-4zM180 8h4v4h-4z"/><path fill="#959595" d="M124 0h4v4h-4zM156 0h4v4h-4zM0 4h4v4h-4zM28 4h4v4h-4zM60 4h4v4h-4zM164 4h4v4h-4z"/></svg><svg class="a" style="left:406.7px;top:1061.4px" width="167.5" height="16.0" viewBox="0 0 167.50 16.00"><path fill="#eaeaea" d="M75.77 0h3.99v4h-3.99zM107.68 0h3.99v4h-3.99zM7.98 4h3.99v4h-3.99zM75.77 4h3.99v4h-3.99zM159.52 4h3.99v4h-3.99zM39.88 8h3.99v4h-3.99zM75.77 8h3.99v4h-3.99zM83.75 8h3.99v4h-3.99zM95.71 8h3.99v4h-3.99zM107.68 8h3.99v4h-3.99zM0 12h3.99v4h-3.99zM3.99 12h3.99v4h-3.99zM11.96 12h3.99v4h-3.99zM15.95 12h3.99v4h-3.99zM31.9 12h3.99v4h-3.99zM59.82 12h3.99v4h-3.99zM71.79 12h3.99v4h-3.99zM79.76 12h3.99v4h-3.99zM87.74 12h3.99v4h-3.99zM127.62 12h3.99v4h-3.99zM159.52 12h3.99v4h-3.99z"/><path fill="#d4d4d4" d="M7.98 0h3.99v4h-3.99zM15.95 0h3.99v4h-3.99zM39.88 0h3.99v4h-3.99zM55.83 0h3.99v4h-3.99zM123.63 0h3.99v4h-3.99zM15.95 4h3.99v4h-3.99zM95.71 4h3.99v4h-3.99zM135.6 4h3.99v4h-3.99zM143.57 4h3.99v4h-3.99zM3.99 8h3.99v4h-3.99zM7.98 8h3.99v4h-3.99zM11.96 8h3.99v4h-3.99zM31.9 8h3.99v4h-3.99zM55.83 8h3.99v4h-3.99zM71.79 8h3.99v4h-3.99zM91.73 8h3.99v4h-3.99zM127.62 8h3.99v4h-3.99zM139.58 8h3.99v4h-3.99zM23.93 12h3.99v4h-3.99z"/><path fill="#bfbfbf" d="M3.99 0h3.99v4h-3.99zM11.96 0h3.99v4h-3.99zM31.9 0h3.99v4h-3.99zM35.89 0h3.99v4h-3.99zM43.87 0h3.99v4h-3.99zM51.85 0h3.99v4h-3.99zM67.8 0h3.99v4h-3.99zM71.79 0h3.99v4h-3.99zM79.76 0h3.99v4h-3.99zM87.74 0h3.99v4h-3.99zM99.7 0h3.99v4h-3.99zM103.69 0h3.99v4h-3.99zM111.67 0h3.99v4h-3.99zM127.62 0h3.99v4h-3.99zM155.54 0h3.99v4h-3.99zM159.52 0h3.99v4h-3.99zM163.51 0h3.99v4h-3.99zM3.99 4h3.99v4h-3.99zM31.9 4h3.99v4h-3.99zM35.89 4h3.99v4h-3.99zM39.88 4h3.99v4h-3.99zM43.87 4h3.99v4h-3.99zM47.86 4h3.99v4h-3.99zM55.83 4h3.99v4h-3.99zM67.8 4h3.99v4h-3.99zM71.79 4h3.99v4h-3.99zM79.76 4h3.99v4h-3.99zM87.74 4h3.99v4h-3.99zM99.7 4h3.99v4h-3.99zM103.69 4h3.99v4h-3.99zM107.68 4h3.99v4h-3.99zM111.67 4h3.99v4h-3.99zM123.63 4h3.99v4h-3.99zM131.61 4h3.99v4h-3.99zM139.58 4h3.99v4h-3.99zM155.54 4h3.99v4h-3.99zM163.51 4h3.99v4h-3.99zM15.95 8h3.99v4h-3.99zM35.89 8h3.99v4h-3.99zM51.85 8h3.99v4h-3.99zM67.8 8h3.99v4h-3.99zM99.7 8h3.99v4h-3.99zM103.69 8h3.99v4h-3.99zM123.63 8h3.99v4h-3.99zM135.6 8h3.99v4h-3.99zM143.57 8h3.99v4h-3.99zM147.56 8h3.99v4h-3.99zM151.55 8h3.99v4h-3.99zM155.54 8h3.99v4h-3.99zM159.52 8h3.99v4h-3.99zM19.94 12h3.99v4h-3.99z"/><path fill="#aaaaaa" d="M0 0h3.99v4h-3.99zM27.92 0h3.99v4h-3.99zM47.86 0h3.99v4h-3.99zM63.81 0h3.99v4h-3.99zM115.65 0h3.99v4h-3.99zM119.64 0h3.99v4h-3.99zM131.61 0h3.99v4h-3.99zM147.56 0h3.99v4h-3.99zM151.55 0h3.99v4h-3.99zM11.96 4h3.99v4h-3.99zM63.81 4h3.99v4h-3.99zM115.65 4h3.99v4h-3.99zM119.64 4h3.99v4h-3.99zM151.55 4h3.99v4h-3.99zM0 8h3.99v4h-3.99zM27.92 8h3.99v4h-3.99zM43.87 8h3.99v4h-3.99zM47.86 8h3.99v4h-3.99zM59.82 8h3.99v4h-3.99zM63.81 8h3.99v4h-3.99zM79.76 8h3.99v4h-3.99zM87.74 8h3.99v4h-3.99zM111.67 8h3.99v4h-3.99zM115.65 8h3.99v4h-3.99zM119.64 8h3.99v4h-3.99zM131.61 8h3.99v4h-3.99zM163.51 8h3.99v4h-3.99z"/><path fill="#959595" d="M59.82 0h3.99v4h-3.99zM139.58 0h3.99v4h-3.99zM0 4h3.99v4h-3.99zM27.92 4h3.99v4h-3.99zM59.82 4h3.99v4h-3.99zM147.56 4h3.99v4h-3.99z"/></svg>
<div class="a" style="left:578.0px;top:127.0px;width:1338px;height:967px"><svg style="display:block" width="1338" height="967" viewBox="0 0 1338 967"><rect width="1338" height="967"/><rect x="2" y="2.2" width="1334.3" height="962.8" fill="#0000fc"/><path d="M13.89 0h1.8v967h-1.8zM27.38 0h1.8v967h-1.8zM40.87 0h1.8v967h-1.8zM54.36 0h1.8v967h-1.8zM67.85 0h1.8v967h-1.8zM81.35 0h1.8v967h-1.8zM94.84 0h1.8v967h-1.8zM108.33 0h1.8v967h-1.8zM121.82 0h1.8v967h-1.8zM135.31 0h1.8v967h-1.8zM148.80 0h1.8v967h-1.8zM162.29 0h1.8v967h-1.8zM175.78 0h1.8v967h-1.8zM189.27 0h1.8v967h-1.8zM202.76 0h1.8v967h-1.8zM216.26 0h1.8v967h-1.8zM229.75 0h1.8v967h-1.8zM243.24 0h1.8v967h-1.8zM256.73 0h1.8v967h-1.8zM270.22 0h1.8v967h-1.8zM283.71 0h1.8v967h-1.8zM297.20 0h1.8v967h-1.8zM310.69 0h1.8v967h-1.8zM324.18 0h1.8v967h-1.8zM337.67 0h1.8v967h-1.8zM351.17 0h1.8v967h-1.8zM364.66 0h1.8v967h-1.8zM378.15 0h1.8v967h-1.8zM391.64 0h1.8v967h-1.8zM405.13 0h1.8v967h-1.8zM418.62 0h1.8v967h-1.8zM432.11 0h1.8v967h-1.8zM445.60 0h1.8v967h-1.8zM459.09 0h1.8v967h-1.8zM472.58 0h1.8v967h-1.8zM486.08 0h1.8v967h-1.8zM499.57 0h1.8v967h-1.8zM513.06 0h1.8v967h-1.8zM526.55 0h1.8v967h-1.8zM540.04 0h1.8v967h-1.8zM553.53 0h1.8v967h-1.8zM567.02 0h1.8v967h-1.8zM580.51 0h1.8v967h-1.8zM594.00 0h1.8v967h-1.8zM607.50 0h1.8v967h-1.8zM620.99 0h1.8v967h-1.8zM634.48 0h1.8v967h-1.8zM647.97 0h1.8v967h-1.8zM661.46 0h1.8v967h-1.8zM674.95 0h1.8v967h-1.8zM688.44 0h1.8v967h-1.8zM701.93 0h1.8v967h-1.8zM715.42 0h1.8v967h-1.8zM728.91 0h1.8v967h-1.8zM742.40 0h1.8v967h-1.8zM755.90 0h1.8v967h-1.8zM769.39 0h1.8v967h-1.8zM782.88 0h1.8v967h-1.8zM796.37 0h1.8v967h-1.8zM809.86 0h1.8v967h-1.8zM823.35 0h1.8v967h-1.8zM836.84 0h1.8v967h-1.8zM850.33 0h1.8v967h-1.8zM863.82 0h1.8v967h-1.8zM877.31 0h1.8v967h-1.8zM890.81 0h1.8v967h-1.8zM904.30 0h1.8v967h-1.8zM917.79 0h1.8v967h-1.8zM931.28 0h1.8v967h-1.8zM944.77 0h1.8v967h-1.8zM958.26 0h1.8v967h-1.8zM971.75 0h1.8v967h-1.8zM985.24 0h1.8v967h-1.8zM998.73 0h1.8v967h-1.8zM1012.23 0h1.8v967h-1.8zM1025.72 0h1.8v967h-1.8zM1039.21 0h1.8v967h-1.8zM1052.70 0h1.8v967h-1.8zM1066.19 0h1.8v967h-1.8zM1079.68 0h1.8v967h-1.8zM1093.17 0h1.8v967h-1.8zM1106.66 0h1.8v967h-1.8zM1120.15 0h1.8v967h-1.8zM1133.64 0h1.8v967h-1.8zM1147.13 0h1.8v967h-1.8zM1160.63 0h1.8v967h-1.8zM1174.12 0h1.8v967h-1.8zM1187.61 0h1.8v967h-1.8zM1201.10 0h1.8v967h-1.8zM1214.59 0h1.8v967h-1.8zM1228.08 0h1.8v967h-1.8zM1241.57 0h1.8v967h-1.8zM1255.06 0h1.8v967h-1.8zM1268.55 0h1.8v967h-1.8zM1282.04 0h1.8v967h-1.8zM1295.54 0h1.8v967h-1.8zM1309.03 0h1.8v967h-1.8zM1322.52 0h1.8v967h-1.8zM0 50.21h1338v2.6h-1338zM0 101.02h1338v2.6h-1338zM0 151.83h1338v2.6h-1338zM0 202.64h1338v2.6h-1338zM0 253.45h1338v2.6h-1338zM0 304.26h1338v2.6h-1338zM0 355.07h1338v2.6h-1338zM0 405.88h1338v2.6h-1338zM0 456.69h1338v2.6h-1338zM0 507.50h1338v2.6h-1338zM0 558.31h1338v2.6h-1338zM0 609.12h1338v2.6h-1338zM0 659.93h1338v2.6h-1338zM0 710.74h1338v2.6h-1338zM0 761.55h1338v2.6h-1338zM0 812.36h1338v2.6h-1338zM0 863.17h1338v2.6h-1338zM0 913.98h1338v2.6h-1338z"/><path fill="#0872fc" d="M555.23 2.20h11.89v48.21h-11.89zM582.21 2.20h11.89v48.21h-11.89zM56.06 205.04h11.89v48.61h-11.89zM69.55 205.04h11.89v48.61h-11.89zM285.41 205.04h11.89v48.61h-11.89zM298.90 205.04h11.89v48.61h-11.89zM312.39 205.04h11.89v48.61h-11.89zM352.87 205.04h11.89v48.61h-11.89zM379.85 205.04h11.89v48.61h-11.89zM393.34 205.04h11.89v48.61h-11.89zM487.78 205.04h11.89v48.61h-11.89zM501.27 205.04h11.89v48.61h-11.89zM555.23 205.04h11.89v48.61h-11.89zM568.72 205.04h11.89v48.61h-11.89zM582.21 205.04h11.89v48.61h-11.89zM595.70 205.04h11.89v48.61h-11.89zM676.65 205.04h11.89v48.61h-11.89zM690.14 205.04h11.89v48.61h-11.89zM703.63 205.04h11.89v48.61h-11.89zM730.61 205.04h11.89v48.61h-11.89zM744.10 205.04h11.89v48.61h-11.89zM784.58 205.04h11.89v48.61h-11.89zM838.54 205.04h11.89v48.61h-11.89zM865.52 205.04h11.89v48.61h-11.89zM879.01 205.04h11.89v48.61h-11.89zM892.51 205.04h11.89v48.61h-11.89zM919.49 205.04h11.89v48.61h-11.89zM1094.87 205.04h11.89v48.61h-11.89zM1108.36 205.04h11.89v48.61h-11.89zM1121.85 205.04h11.89v48.61h-11.89zM1135.34 205.04h11.89v48.61h-11.89zM1324.22 205.04h12.08v48.61h-12.08zM1243.27 357.47h11.89v48.61h-11.89zM1256.76 357.47h11.89v48.61h-11.89zM1324.22 357.47h12.08v48.61h-12.08zM595.70 408.28h11.89v48.61h-11.89zM973.45 408.28h11.89v48.61h-11.89zM986.94 408.28h11.89v48.61h-11.89zM1270.25 408.28h11.89v48.61h-11.89zM1283.74 408.28h11.89v48.61h-11.89zM217.96 459.09h11.89v48.61h-11.89zM312.39 459.09h11.89v48.61h-11.89zM352.87 459.09h11.89v48.61h-11.89zM379.85 459.09h11.89v48.61h-11.89zM393.34 459.09h11.89v48.61h-11.89zM501.27 459.09h11.89v48.61h-11.89zM514.76 459.09h11.89v48.61h-11.89zM892.51 459.09h11.89v48.61h-11.89zM959.96 459.09h11.89v48.61h-11.89zM1013.92 459.09h11.89v48.61h-11.89zM1081.38 459.09h11.89v48.61h-11.89zM1094.87 459.09h11.89v48.61h-11.89zM1108.36 459.09h11.89v48.61h-11.89zM1189.31 459.09h11.89v48.61h-11.89zM1216.29 459.09h11.89v48.61h-11.89zM1229.78 459.09h11.89v48.61h-11.89zM393.34 509.90h11.89v48.61h-11.89zM487.78 509.90h11.89v48.61h-11.89zM406.83 560.71h11.89v48.61h-11.89zM1000.43 560.71h11.89v48.61h-11.89zM1027.42 560.71h11.89v48.61h-11.89zM1040.91 560.71h11.89v48.61h-11.89zM959.96 611.52h11.89v48.61h-11.89zM1054.40 611.52h11.89v48.61h-11.89zM1067.89 611.52h11.89v48.61h-11.89zM1094.87 611.52h11.89v48.61h-11.89zM1108.36 611.52h11.89v48.61h-11.89zM1216.29 611.52h11.89v48.61h-11.89zM1229.78 611.52h11.89v48.61h-11.89zM231.45 662.33h11.89v48.61h-11.89zM312.39 662.33h11.89v48.61h-11.89zM352.87 662.33h11.89v48.61h-11.89zM379.85 662.33h11.89v48.61h-11.89zM393.34 662.33h11.89v48.61h-11.89zM406.83 662.33h11.89v48.61h-11.89zM703.63 662.33h11.89v48.61h-11.89zM838.54 662.33h11.89v48.61h-11.89zM892.51 662.33h11.89v48.61h-11.89zM919.49 662.33h11.89v48.61h-11.89zM959.96 662.33h11.89v48.61h-11.89zM973.45 662.33h11.89v48.61h-11.89zM986.94 662.33h11.89v48.61h-11.89zM1027.42 662.33h11.89v48.61h-11.89zM1040.91 662.33h11.89v48.61h-11.89zM1054.40 662.33h11.89v48.61h-11.89zM1108.36 662.33h11.89v48.61h-11.89zM1324.22 662.33h12.08v48.61h-12.08zM555.23 713.14h11.89v48.61h-11.89zM568.72 713.14h11.89v48.61h-11.89zM690.14 713.14h11.89v48.61h-11.89zM838.54 713.14h11.89v48.61h-11.89zM852.03 713.14h11.89v48.61h-11.89zM892.51 713.14h11.89v48.61h-11.89zM312.39 763.95h11.89v48.61h-11.89zM339.37 763.95h11.89v48.61h-11.89zM352.87 763.95h11.89v48.61h-11.89zM555.23 763.95h11.89v48.61h-11.89zM676.65 763.95h11.89v48.61h-11.89zM690.14 763.95h11.89v48.61h-11.89zM703.63 763.95h11.89v48.61h-11.89zM717.12 763.95h11.89v48.61h-11.89zM730.61 763.95h11.89v48.61h-11.89zM838.54 763.95h11.89v48.61h-11.89zM852.03 763.95h11.89v48.61h-11.89zM865.52 763.95h11.89v48.61h-11.89zM892.51 763.95h11.89v48.61h-11.89zM906.00 763.95h11.89v48.61h-11.89zM959.96 763.95h11.89v48.61h-11.89zM1054.40 763.95h11.89v48.61h-11.89zM1067.89 763.95h11.89v48.61h-11.89zM1094.87 763.95h11.89v48.61h-11.89zM1108.36 763.95h11.89v48.61h-11.89zM1121.85 763.95h11.89v48.61h-11.89zM1135.34 763.95h11.89v48.61h-11.89zM1324.22 763.95h12.08v48.61h-12.08zM244.94 814.76h11.89v48.61h-11.89zM339.37 814.76h11.89v48.61h-11.89zM366.36 814.76h11.89v48.61h-11.89zM433.81 814.76h11.89v48.61h-11.89zM447.30 814.76h11.89v48.61h-11.89zM487.78 814.76h11.89v48.61h-11.89zM555.23 814.76h11.89v48.61h-11.89zM568.72 814.76h11.89v48.61h-11.89zM582.21 814.76h11.89v48.61h-11.89zM717.12 814.76h11.89v48.61h-11.89zM730.61 814.76h11.89v48.61h-11.89zM784.58 814.76h11.89v48.61h-11.89zM798.07 814.76h11.89v48.61h-11.89zM838.54 814.76h11.89v48.61h-11.89zM852.03 814.76h11.89v48.61h-11.89zM906.00 814.76h11.89v48.61h-11.89zM1081.38 814.76h11.89v48.61h-11.89zM271.92 865.57h11.89v48.61h-11.89zM420.32 865.57h11.89v48.61h-11.89zM636.18 865.57h11.89v48.61h-11.89zM663.16 865.57h11.89v48.61h-11.89zM676.65 865.57h11.89v48.61h-11.89zM690.14 865.57h11.89v48.61h-11.89zM703.63 865.57h11.89v48.61h-11.89zM717.12 865.57h11.89v48.61h-11.89zM825.05 865.57h11.89v48.61h-11.89zM892.51 865.57h11.89v48.61h-11.89zM1067.89 865.57h11.89v48.61h-11.89zM1081.38 865.57h11.89v48.61h-11.89zM285.41 916.38h11.89v48.62h-11.89zM312.39 916.38h11.89v48.62h-11.89zM393.34 916.38h11.89v48.62h-11.89z"/><path fill="#00e6ff" d="M568.72 52.61h11.89v48.61h-11.89zM163.99 205.04h11.89v48.61h-11.89zM177.48 205.04h11.89v48.61h-11.89zM231.45 205.04h11.89v48.61h-11.89zM258.43 205.04h11.89v48.61h-11.89zM339.37 205.04h11.89v48.61h-11.89zM366.36 205.04h11.89v48.61h-11.89zM420.32 205.04h11.89v48.61h-11.89zM433.81 205.04h11.89v48.61h-11.89zM447.30 205.04h11.89v48.61h-11.89zM906.00 205.04h11.89v48.61h-11.89zM959.96 205.04h11.89v48.61h-11.89zM1175.82 205.04h11.89v48.61h-11.89zM798.07 357.47h11.89v48.61h-11.89zM1040.91 408.28h11.89v48.61h-11.89zM204.46 459.09h11.89v48.61h-11.89zM1027.42 459.09h11.89v48.61h-11.89zM1040.91 459.09h11.89v48.61h-11.89zM1054.40 459.09h11.89v48.61h-11.89zM1067.89 459.09h11.89v48.61h-11.89zM1121.85 459.09h11.89v48.61h-11.89zM1135.34 459.09h11.89v48.61h-11.89zM501.27 509.90h11.89v48.61h-11.89zM1175.82 509.90h11.89v48.61h-11.89zM1229.78 509.90h11.89v48.61h-11.89zM1324.22 611.52h12.08v48.61h-12.08zM325.88 662.33h11.89v48.61h-11.89zM420.32 814.76h11.89v48.61h-11.89zM595.70 814.76h11.89v48.61h-11.89zM744.10 814.76h11.89v48.61h-11.89zM865.52 814.76h11.89v48.61h-11.89zM325.88 865.57h11.89v48.61h-11.89zM582.21 865.57h11.89v48.61h-11.89zM730.61 865.57h11.89v48.61h-11.89zM852.03 865.57h11.89v48.61h-11.89zM879.01 865.57h11.89v48.61h-11.89zM339.37 916.38h11.89v48.62h-11.89zM379.85 916.38h11.89v48.62h-11.89zM433.81 916.38h11.89v48.62h-11.89z"/><path fill="#aaf800" d="M190.97 205.04h11.89v48.61h-11.89zM825.05 357.47h11.89v48.61h-11.89zM1283.74 357.47h11.89v48.61h-11.89zM1202.80 509.90h11.89v48.61h-11.89zM258.43 916.38h11.89v48.62h-11.89z"/><path fill="#00f830" d="M244.94 205.04h11.89v48.61h-11.89zM636.18 357.47h11.89v48.61h-11.89zM1000.43 408.28h11.89v48.61h-11.89zM1013.92 408.28h11.89v48.61h-11.89zM973.45 459.09h11.89v48.61h-11.89zM986.94 459.09h11.89v48.61h-11.89zM231.45 865.57h11.89v48.61h-11.89zM744.10 865.57h11.89v48.61h-11.89zM784.58 865.57h11.89v48.61h-11.89zM447.30 916.38h11.89v48.62h-11.89z"/><path fill="#00fba8" d="M271.92 205.04h11.89v48.61h-11.89zM717.12 205.04h11.89v48.61h-11.89zM1081.38 205.04h11.89v48.61h-11.89zM1027.42 408.28h11.89v48.61h-11.89zM325.88 459.09h11.89v48.61h-11.89zM406.83 459.09h11.89v48.61h-11.89zM406.83 509.90h11.89v48.61h-11.89zM514.76 509.90h11.89v48.61h-11.89zM1189.31 509.90h11.89v48.61h-11.89zM1216.29 509.90h11.89v48.61h-11.89zM244.94 865.57h11.89v48.61h-11.89zM285.41 865.57h11.89v48.61h-11.89zM798.07 865.57h11.89v48.61h-11.89zM919.49 865.57h11.89v48.61h-11.89zM271.92 916.38h11.89v48.62h-11.89zM366.36 916.38h11.89v48.62h-11.89z"/><path fill="#ff0000" d="M932.98 205.04h11.89v48.61h-11.89zM946.47 205.04h11.89v48.61h-11.89zM2.00 255.85h11.99v48.61h-11.99zM15.59 255.85h11.89v48.61h-11.89zM29.08 255.85h11.89v48.61h-11.89zM42.57 255.85h11.89v48.61h-11.89zM811.56 357.47h11.89v48.61h-11.89zM1148.83 357.47h11.89v48.61h-11.89zM1162.33 357.47h11.89v48.61h-11.89zM528.25 408.28h11.89v48.61h-11.89zM771.09 408.28h11.89v48.61h-11.89zM150.50 865.57h11.89v48.61h-11.89zM83.05 916.38h11.89v48.62h-11.89zM96.54 916.38h11.89v48.62h-11.89z"/><path fill="#ff7400" d="M460.79 357.47h11.89v48.61h-11.89zM474.28 357.47h11.89v48.61h-11.89zM649.67 357.47h11.89v48.61h-11.89zM1297.24 357.47h11.89v48.61h-11.89zM1310.73 357.47h11.89v48.61h-11.89zM541.74 408.28h11.89v48.61h-11.89zM609.19 408.28h11.89v48.61h-11.89zM622.69 408.28h11.89v48.61h-11.89zM757.60 408.28h11.89v48.61h-11.89zM110.03 865.57h11.89v48.61h-11.89zM123.52 865.57h11.89v48.61h-11.89zM137.01 865.57h11.89v48.61h-11.89zM56.06 916.38h11.89v48.62h-11.89zM69.55 916.38h11.89v48.62h-11.89z"/><path fill="#40f400" d="M663.16 357.47h11.89v48.61h-11.89zM204.46 662.33h11.89v48.61h-11.89zM217.96 662.33h11.89v48.61h-11.89zM298.90 916.38h11.89v48.62h-11.89z"/><path fill="#ffe200" d="M1270.25 357.47h11.89v48.61h-11.89zM1243.27 408.28h11.89v48.61h-11.89zM1256.76 408.28h11.89v48.61h-11.89zM163.99 916.38h11.89v48.62h-11.89zM177.48 916.38h11.89v48.62h-11.89z"/></svg></div>
<div class="a" style="left:0;top:1090px;width:1916px;height:22px;overflow:hidden"><div class="a xl" style="left:556.5px">10</div><div class="a xl" style="left:583.5px">16</div><div class="a xl" style="left:610.5px">44</div><div class="a xl" style="left:637.5px">58</div><div class="a xl" style="left:664.5px">119</div><div class="a xl" style="left:691.5px">124</div><div class="a xl" style="left:718.4px">136</div><div class="a xl" style="left:745.4px">293</div><div class="a xl" style="left:772.4px">325</div><div class="a xl" style="left:799.4px">341</div><div class="a xl" style="left:826.4px">373</div><div class="a xl" style="left:853.3px">386</div><div class="a xl" style="left:880.3px">406</div><div class="a xl" style="left:907.3px">418</div><div class="a xl" style="left:934.3px">424</div><div class="a xl" style="left:961.3px">453</div><div class="a xl" style="left:988.3px">470</div><div class="a xl" style="left:1015.2px">486</div><div class="a xl" style="left:1042.2px">488</div><div class="a xl" style="left:1069.2px">499</div><div class="a xl" style="left:1096.2px">515</div><div class="a xl" style="left:1123.2px">530</div><div class="a xl" style="left:1150.1px">564</div><div class="a xl" style="left:1177.1px">572</div><div class="a xl" style="left:1204.1px">588</div><div class="a xl" style="left:1231.1px">613</div><div class="a xl" style="left:1258.1px">633</div><div class="a xl" style="left:1285.1px">663</div><div class="a xl" style="left:1312.0px">694</div><div class="a xl" style="left:1339.0px">703</div><div class="a xl" style="left:1366.0px">708</div><div class="a xl" style="left:1393.0px">714</div><div class="a xl" style="left:1420.0px">730</div><div class="a xl" style="left:1447.0px">771</div><div class="a xl" style="left:1473.9px">804</div><div class="a xl" style="left:1500.9px">814</div><div class="a xl" style="left:1527.9px">837</div><div class="a xl" style="left:1554.9px">856</div><div class="a xl" style="left:1581.9px">866</div><div class="a xl" style="left:1608.8px">887</div><div class="a xl" style="left:1635.8px">913</div><div class="a xl" style="left:1662.8px">945</div><div class="a xl" style="left:1689.8px">977</div><div class="a xl" style="left:1716.8px">995</div><div class="a xl" style="left:1743.8px">1015</div><div class="a xl" style="left:1770.7px">1027</div><div class="a xl" style="left:1797.7px">1056</div><div class="a xl" style="left:1824.7px">1069</div><div class="a xl" style="left:1851.7px">1087</div><div class="a xl" style="left:1878.7px">1100</div></div>
<div class="a" style="left:1138.5px;top:1106.5px;font-size:19.7px;line-height:22px;color:#000">Natural Frequencies (Hz)</div>
<div class="a lg" style="left:603.0px;background:#0000f0"></div><div class="a lp" style="left:688.8px">10.0%</div><div class="a lg" style="left:732.7px;background:#0068ff"></div><div class="a lp" style="left:818.5px">20.0%</div><div class="a lg" style="left:862.4px;background:#00e4ff"></div><div class="a lp" style="left:948.2px">30.0%</div><div class="a lg" style="left:992.1px;background:#00f5a8"></div><div class="a lp" style="left:1077.9px">40.0%</div><div class="a lg" style="left:1121.8px;background:#00ec2a"></div><div class="a lp" style="left:1207.6px">50.0%</div><div class="a lg" style="left:1251.5px;background:#38e82a"></div><div class="a lp" style="left:1337.3px">60.0%</div><div class="a lg" style="left:1381.2px;background:#a8f000"></div><div class="a lp" style="left:1467.0px">70.0%</div><div class="a lg" style="left:1510.9px;background:#ffe200"></div><div class="a lp" style="left:1596.7px">80.0%</div><div class="a lg" style="left:1640.6px;background:#ff7000"></div><div class="a lp" style="left:1726.4px">90.0%</div><div class="a lg" style="left:1770.3px;background:#ff0000"></div>

<!-- tooltip -->
<div class="a" style="left:895px;top:425px;width:142px;height:57px;background:#050505;border:1px solid #8a8a8a"></div>
<div class="a" style="left:900px;top:427px;font-size:12.5px;line-height:13px;color:#3ec83e">Strain Energy</div>
<svg class="a" style="left:900.0px;top:441.0px" width="134.0" height="12.0" viewBox="0 0 134.00 12.00"><path fill="#081408" d="M55.18 4h3.94v4h-3.94zM70.94 4h3.94v4h-3.94zM98.53 4h3.94v4h-3.94zM23.65 8h3.94v4h-3.94zM27.59 8h3.94v4h-3.94zM31.53 8h3.94v4h-3.94zM43.35 8h3.94v4h-3.94zM51.24 8h3.94v4h-3.94zM63.06 8h3.94v4h-3.94zM70.94 8h3.94v4h-3.94zM106.41 8h3.94v4h-3.94zM122.18 8h3.94v4h-3.94zM130.06 8h3.94v4h-3.94z"/><path fill="#0b240b" d="M3.94 0h3.94v4h-3.94zM31.53 0h3.94v4h-3.94zM51.24 0h3.94v4h-3.94zM59.12 0h3.94v4h-3.94zM63.06 0h3.94v4h-3.94zM106.41 0h3.94v4h-3.94zM3.94 4h3.94v4h-3.94zM7.88 4h3.94v4h-3.94zM35.47 4h3.94v4h-3.94zM74.88 4h3.94v4h-3.94zM82.76 4h3.94v4h-3.94zM122.18 4h3.94v4h-3.94zM3.94 8h3.94v4h-3.94zM7.88 8h3.94v4h-3.94zM11.82 8h3.94v4h-3.94zM15.76 8h3.94v4h-3.94zM19.71 8h3.94v4h-3.94zM39.41 8h3.94v4h-3.94zM47.29 8h3.94v4h-3.94zM59.12 8h3.94v4h-3.94zM78.82 8h3.94v4h-3.94zM86.71 8h3.94v4h-3.94zM102.47 8h3.94v4h-3.94zM114.29 8h3.94v4h-3.94z"/><path fill="#0e330e" d="M11.82 0h3.94v4h-3.94zM23.65 0h3.94v4h-3.94zM43.35 0h3.94v4h-3.94zM55.18 0h3.94v4h-3.94zM67 0h3.94v4h-3.94zM70.94 0h3.94v4h-3.94zM82.76 0h3.94v4h-3.94zM94.59 0h3.94v4h-3.94zM98.53 0h3.94v4h-3.94zM114.29 0h3.94v4h-3.94zM118.24 0h3.94v4h-3.94zM122.18 0h3.94v4h-3.94zM23.65 4h3.94v4h-3.94zM27.59 4h3.94v4h-3.94zM51.24 4h3.94v4h-3.94zM90.65 4h3.94v4h-3.94zM102.47 4h3.94v4h-3.94zM126.12 4h3.94v4h-3.94zM130.06 4h3.94v4h-3.94zM0 8h3.94v4h-3.94zM55.18 8h3.94v4h-3.94zM82.76 8h3.94v4h-3.94zM90.65 8h3.94v4h-3.94zM98.53 8h3.94v4h-3.94zM126.12 8h3.94v4h-3.94z"/><path fill="#114311" d="M7.88 0h3.94v4h-3.94zM35.47 0h3.94v4h-3.94zM74.88 0h3.94v4h-3.94zM78.82 0h3.94v4h-3.94zM86.71 0h3.94v4h-3.94zM90.65 0h3.94v4h-3.94zM102.47 0h3.94v4h-3.94zM110.35 0h3.94v4h-3.94zM130.06 0h3.94v4h-3.94zM11.82 4h3.94v4h-3.94zM59.12 4h3.94v4h-3.94zM63.06 4h3.94v4h-3.94zM78.82 4h3.94v4h-3.94zM86.71 4h3.94v4h-3.94zM106.41 4h3.94v4h-3.94zM114.29 4h3.94v4h-3.94zM118.24 4h3.94v4h-3.94z"/><path fill="#145214" d="M0 0h3.94v4h-3.94zM27.59 0h3.94v4h-3.94zM126.12 0h3.94v4h-3.94zM0 4h3.94v4h-3.94zM31.53 4h3.94v4h-3.94zM39.41 4h3.94v4h-3.94zM67 4h3.94v4h-3.94zM94.59 4h3.94v4h-3.94zM110.35 4h3.94v4h-3.94z"/></svg>
<div class="a" style="left:900px;top:453px;font-size:12.5px;line-height:13px;color:#3ec83e">485.80 Hz</div>
<div class="a" style="left:900px;top:466px;font-size:12.5px;line-height:13px;color:#3ec83e">86.47 %</div>
<!-- cursor -->
<svg class="a" style="left:1047px;top:511px" width="14" height="22" viewBox="0 0 14 22"><path d="M1 1 L1 17 L5 13 L8 20 L10.5 19 L7.5 12 L13 12 Z" fill="#fff" stroke="#000" stroke-width="1"/></svg>
</body></html>
